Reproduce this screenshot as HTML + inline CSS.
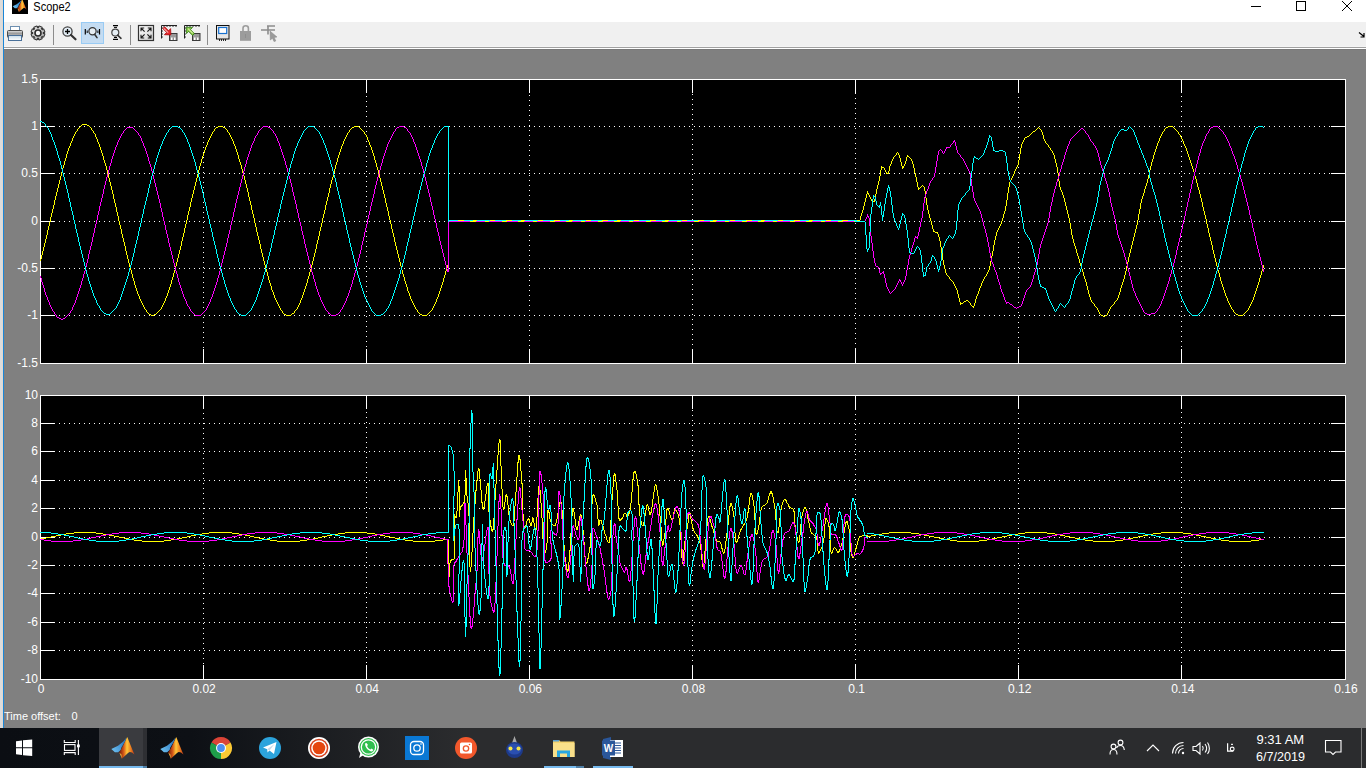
<!DOCTYPE html>
<html><head><meta charset="utf-8"><style>
html,body{margin:0;padding:0;width:1366px;height:768px;overflow:hidden;background:#808080;font-family:"Liberation Sans",sans-serif;}
#root{position:relative;width:1366px;height:768px;overflow:hidden;}
.abs{position:absolute;}
</style></head><body><div id="root">
<svg class="abs" style="left:0;top:0" width="1366" height="768" viewBox="0 0 1366 768">
<rect x="0" y="0" width="1366" height="768" fill="#808080"/>
<rect x="0" y="0" width="3" height="728" fill="#dcdcdc"/>
<rect x="2" y="0" width="1" height="728" fill="#e0d8d0"/>
<rect x="3" y="0" width="1" height="728" fill="#1a86d8"/>
<rect x="4" y="0" width="1362" height="22" fill="#fff"/>
<rect x="4" y="22" width="1362" height="25" fill="#f0f0f0"/>
<rect x="4" y="46" width="1362" height="1" fill="#f5f5f5"/>
<rect x="4" y="47" width="1362" height="1" fill="#a0a0a0"/>
<rect x="4" y="48" width="1362" height="1" fill="#fff"/>
<rect x="4" y="49" width="1362" height="1" fill="#787878"/>
<rect x="12" y="0" width="16" height="14" fill="#000"/>
<g transform="translate(12.5,-0.9) scale(0.6)"><defs><linearGradient id="mlo1" x1="8" y1="0" x2="24" y2="0" gradientUnits="userSpaceOnUse"><stop offset="0" stop-color="#6a1508"/><stop offset="0.3" stop-color="#d85a18"/><stop offset="0.5" stop-color="#ffc83a"/><stop offset="0.7" stop-color="#f08a22"/><stop offset="1" stop-color="#b82a14"/></linearGradient><linearGradient id="mlb1" x1="0" y1="12" x2="14" y2="4" gradientUnits="userSpaceOnUse"><stop offset="0" stop-color="#6ec0f0"/><stop offset="1" stop-color="#2a78c0"/></linearGradient></defs><path d="M0.3 12.1L7 8.7L12.3 4.5L15.5 0.4L14 4.5L10.2 10.8L9.7 12.9L7.1 15.2L3.9 15.3Z" fill="url(#mlb1)"/><path d="M16.2 0.1C18 4 20.5 11 23.5 17.6C21.5 15.5 19.8 14.8 18.6 15C17 15.6 13 20 10.8 21.7C10 19 9 17 8.2 15.5C10.5 12.5 13 7.5 16.2 0.1Z" fill="url(#mlo1)"/><path d="M10.8 21.7C10 19 9 17 8.2 15.5L10.5 17.5Z" fill="#ffd84a" opacity="0.8"/></g>
<path d="M1251 6.5H1261" stroke="#000" stroke-width="1"/>
<rect x="1296.5" y="1.5" width="9" height="9" fill="none" stroke="#000" stroke-width="1"/>
<path d="M1342 1L1352 11M1352 1L1342 11" stroke="#000" stroke-width="1"/>
<text x="33.3" y="10.8" font-size="12" fill="#000" font-family="Liberation Sans" textLength="37.4" lengthAdjust="spacingAndGlyphs">Scope2</text>
<rect x="10.5" y="26.5" width="9" height="4" fill="#fff" stroke="#6d8fb0"/>
<defs><linearGradient id="prg" x1="0" y1="0" x2="0" y2="1"><stop offset="0" stop-color="#e8e8e8"/><stop offset="0.4" stop-color="#9a9a9a"/><stop offset="1" stop-color="#d0d0d0"/></linearGradient><linearGradient id="trg" x1="0" y1="0" x2="0" y2="1"><stop offset="0" stop-color="#c8dcea"/><stop offset="1" stop-color="#ffffff"/></linearGradient></defs>
<rect x="7.5" y="30.5" width="15" height="7" rx="1" fill="url(#prg)" stroke="#4a4a4a"/>
<rect x="8.5" y="35.5" width="13" height="5" fill="url(#trg)" stroke="#4a7099"/>
<defs><linearGradient id="gearg" x1="0" y1="0" x2="1" y2="1"><stop offset="0" stop-color="#f4f4f4"/><stop offset="1" stop-color="#a8a8a8"/></linearGradient></defs>
<polygon points="43.35,32.30 44.90,34.16 43.70,37.06 41.29,37.28 42.28,36.29 42.06,38.70 39.16,39.90 37.30,38.35 38.70,38.35 36.84,39.90 33.94,38.70 33.72,36.29 34.71,37.28 32.30,37.06 31.10,34.16 32.65,32.30 32.65,33.70 31.10,31.84 32.30,28.94 34.71,28.72 33.72,29.71 33.94,27.30 36.84,26.10 38.70,27.65 37.30,27.65 39.16,26.10 42.06,27.30 42.28,29.71 41.29,28.72 43.70,28.94 44.90,31.84 43.35,33.70" fill="url(#gearg)" stroke="#333" stroke-width="1.1" stroke-linejoin="round"/>
<circle cx="38" cy="33" r="3.0" fill="#f8f8f8" stroke="#2a2a2a" stroke-width="1.6"/>
<path d="M53.5 25V45" stroke="#8c8c8c"/>
<path d="M130.5 25V45" stroke="#8c8c8c"/>
<path d="M207.5 25V45" stroke="#8c8c8c"/>
<circle cx="67.5" cy="31.5" r="4.6" fill="#e2ecf4" stroke="#444" stroke-width="1.3"/>
<path d="M65 31.5H70M67.5 29V34" stroke="#000" stroke-width="1.3"/>
<path d="M71 35L75.5 39.3" stroke="#333" stroke-width="2.2" stroke-linecap="round"/>
<rect x="81.5" y="22.5" width="22" height="21" fill="#c4dcf2" stroke="#99cbf4"/>
<circle cx="92.5" cy="31.3" r="3.6" fill="#e6eef4" stroke="#333" stroke-width="1.2"/>
<path d="M94.6 34.3L97 37.6" stroke="#333" stroke-width="1.6" stroke-linecap="round"/>
<path d="M85.3 29V34.5M99.5 29V34.5" stroke="#000" stroke-width="1.2"/>
<path d="M87.2 30.5V33M97.9 30.5V33" stroke="#000" stroke-width="1"/>
<circle cx="115.3" cy="32.6" r="3.5" fill="#e6eef4" stroke="#444" stroke-width="1.2"/>
<path d="M117.6 35.2L121 38.3" stroke="#333" stroke-width="1.6" stroke-linecap="round"/>
<path d="M113 25.6H118M113 39.4H118" stroke="#000" stroke-width="1.2"/>
<path d="M114 27.4H117M114 37.5H117" stroke="#000" stroke-width="1"/>
<defs><linearGradient id="asg" x1="0" y1="0" x2="1" y2="1"><stop offset="0" stop-color="#fff"/><stop offset="1" stop-color="#cfcfcf"/></linearGradient></defs>
<rect x="138.5" y="25.5" width="15" height="15" fill="url(#asg)" stroke="#333" stroke-width="1.2"/>
<path d="M141 28L144.6 31.6M141 31.2V28H144.2 M151 28L147.4 31.6M147.8 28H151V31.2 M141 38L144.6 34.4M141 34.8V38H144.2 M151 38L147.4 34.4M147.8 38H151V34.8" stroke="#1a1a1a" stroke-width="1.1" fill="none"/>
<path d="M161.5 38.5V25.5H177" stroke="#222" fill="none"/>
<path d="M164 25.5V27M167 25.5V27M170 25.5V27M173 25.5V27M176 25.5V27M161.5 28H163M161.5 31H163M161.5 34H163M161.5 37H163" stroke="#222" stroke-width="0.9"/>
<rect x="169.5" y="33.5" width="7.5" height="7" fill="#9a9a9a" stroke="#3a3a3a"/>
<rect x="171" y="37.5" width="4.5" height="2.5" fill="#fff"/>
<path d="M173.2 37.5V40" stroke="#333" stroke-width="0.8"/>
<path d="M162.8 28.6L164.6 26.8L168.6 30.8L170.6 28.6L170.9 34.9L164.4 34.7L166.6 32.4Z" fill="#e8282c" stroke="#a80c10" stroke-width="0.8" stroke-linejoin="round"/>
<path d="M163.8 28.4L168.2 32.6" stroke="#f9b0b0" stroke-width="1.1"/>
<path d="M184.5 38.5V25.5H200" stroke="#222" fill="none"/>
<path d="M187 25.5V27M190 25.5V27M193 25.5V27M196 25.5V27M199 25.5V27M184.5 28H186M184.5 31H186M184.5 34H186M184.5 37H186" stroke="#222" stroke-width="0.9"/>
<rect x="192.5" y="33.5" width="7.5" height="7" fill="#9a9a9a" stroke="#3a3a3a"/>
<rect x="194" y="37.5" width="4.5" height="2.5" fill="#fff"/>
<path d="M196.2 37.5V40" stroke="#333" stroke-width="0.8"/>
<path d="M194.4 33.6L192.6 35.4L188.6 31.4L186.5 33.6L186.2 27.2L192.6 27.4L190.4 29.6Z" fill="#86c544" stroke="#2c7a10" stroke-width="0.8" stroke-linejoin="round"/>
<path d="M188 28.6L192.8 33.4" stroke="#d8f0a0" stroke-width="1.1"/>
<rect x="216.5" y="25.5" width="12.5" height="13.5" fill="#e6e6e6" stroke="#111" stroke-width="1"/>
<rect x="218.7" y="27.5" width="8" height="6" fill="#fff" stroke="#1670d0" stroke-width="1.2"/>
<path d="M219.5 39V41M221.5 39V41M223.5 39V41M225.5 39V41" stroke="#111" stroke-width="0.9"/>
<path d="M243 31.5V28.2C243 25 248.4 25 248.4 28.2V31.5" stroke="#9c9c9c" stroke-width="1.6" fill="none"/>
<rect x="240" y="31" width="11" height="9.8" fill="#9c9c9c"/>
<path d="M245.5 34V38" stroke="#8a8a8a" stroke-width="0.8"/>
<path d="M267 26H275M261 30H275M268 26V34.5" stroke="#8c8c8c" stroke-width="1.6" fill="none"/>
<path d="M270 31L277 37L274.3 37.4L275.8 41L274 41.6L272.5 38.2L270.3 40Z" fill="#9a9a9a" stroke="#888" stroke-width="0.5"/>
<path d="M1359 32.5L1364 36.5M1364 33V37H1360.5" stroke="#000" stroke-width="1.2" fill="none"/>
<rect x="40" y="79" width="1306" height="285" fill="#000"/>
<rect x="40" y="395" width="1306" height="285" fill="#000"/>
<path d="M203.5 82V363M366.5 81V363M529.5 80V363M692.5 84V363M855.5 83V363M1018.5 82V363M1181.5 81V363M44 126.5H1345M44 173.5H1345M44 221.5H1345M44 268.5H1345M44 315.5H1345" stroke="#fff" stroke-dasharray="1 4" fill="none"/>
<path d="M203.5 79V93M203.5 349V363M366.5 79V93M366.5 349V363M529.5 79V93M529.5 349V363M692.5 79V93M692.5 349V363M855.5 79V94M855.5 349V363M1018.5 79V93M1018.5 349V363M1181.5 79V93M1181.5 349V363M40 126.5H55M1331 126.5H1345M40 173.5H55M1331 173.5H1345M40 221.5H55M1331 221.5H1345M40 268.5H55M1331 268.5H1345M40 315.5H55M1331 315.5H1345" stroke="#fff" fill="none"/>
<rect x="40.5" y="79.5" width="1305" height="284" stroke="#fff" fill="none"/>
<path d="M203.5 398V679M366.5 397V679M529.5 396V679M692.5 400V679M855.5 399V679M1018.5 398V679M1181.5 397V679M44 423.5H1345M44 451.5H1345M44 480.5H1345M44 508.5H1345M44 537.5H1345M44 565.5H1345M44 593.5H1345M44 622.5H1345M44 650.5H1345" stroke="#fff" stroke-dasharray="1 4" fill="none"/>
<path d="M203.5 395V409M203.5 665V679M366.5 395V409M366.5 665V679M529.5 395V409M529.5 665V679M692.5 395V409M692.5 665V679M855.5 395V410M855.5 665V679M1018.5 395V409M1018.5 665V679M1181.5 395V409M1181.5 665V679M40 423.5H55M1331 423.5H1345M40 451.5H55M1331 451.5H1345M40 480.5H55M1331 480.5H1345M40 508.5H55M1331 508.5H1345M40 537.5H55M1331 537.5H1345M40 565.5H55M1331 565.5H1345M40 593.5H55M1331 593.5H1345M40 622.5H55M1331 622.5H1345M40 650.5H55M1331 650.5H1345" stroke="#fff" fill="none"/>
<rect x="40.5" y="395.5" width="1305" height="284" stroke="#fff" fill="none"/>
<path d="M448 220.5H860" stroke="#00ffff" shape-rendering="crispEdges"/>
<path d="M448 221.5H860" stroke="#ff00ff" shape-rendering="crispEdges"/>
<path d="M458 220.5H860M470 221.5H860" stroke="#ffff00" stroke-dasharray="6 9 4 13 5 11" shape-rendering="crispEdges"/>
<path d="M40 259h1v2h-1zM40 539h1v1h-1zM41 255h1v4h-1zM41 538h1v1h-1zM42 251h1v4h-1zM42 538h1v1h-1zM43 247h1v4h-1zM43 538h1v1h-1zM44 243h1v4h-1zM44 538h1v1h-1zM45 239h1v4h-1zM45 538h1v1h-1zM46 235h1v4h-1zM46 537h1v1h-1zM47 230h1v5h-1zM47 537h1v1h-1zM48 226h1v4h-1zM48 537h1v1h-1zM49 222h1v4h-1zM49 537h1v1h-1zM50 217h1v5h-1zM50 537h1v1h-1zM51 213h1v4h-1zM51 536h1v1h-1zM52 209h1v4h-1zM52 536h1v1h-1zM53 205h1v4h-1zM53 536h1v1h-1zM54 200h1v5h-1zM54 536h1v1h-1zM55 196h1v4h-1zM55 536h1v1h-1zM56 192h1v4h-1zM56 535h1v1h-1zM57 188h1v4h-1zM57 535h1v1h-1zM58 184h1v4h-1zM58 535h1v1h-1zM59 180h1v4h-1zM59 535h1v1h-1zM60 176h1v4h-1zM60 535h1v1h-1zM61 172h1v4h-1zM61 534h1v1h-1zM62 168h1v4h-1zM62 534h1v1h-1zM63 165h1v3h-1zM63 534h1v1h-1zM64 161h1v4h-1zM64 534h1v1h-1zM65 158h1v3h-1zM65 534h1v1h-1zM66 154h1v4h-1zM66 533h1v1h-1zM67 151h1v3h-1zM67 533h1v1h-1zM68 148h1v3h-1zM68 533h1v1h-1zM69 146h1v2h-1zM69 533h1v1h-1zM70 143h1v3h-1zM70 533h1v1h-1zM71 141h1v2h-1zM71 533h1v1h-1zM72 138h1v3h-1zM72 533h1v1h-1zM73 136h1v2h-1zM73 533h1v1h-1zM74 134h1v2h-1zM74 532h1v1h-1zM75 132h1v2h-1zM75 532h1v1h-1zM76 131h1v1h-1zM76 532h1v1h-1zM77 129h1v2h-1zM77 532h1v1h-1zM78 128h1v1h-1zM78 532h1v1h-1zM79 127h1v1h-1zM79 532h1v1h-1zM80 126h1v1h-1zM80 532h1v1h-1zM81 125h1v1h-1zM81 532h1v1h-1zM82 124h1v1h-1zM82 532h1v1h-1zM83 124h1v1h-1zM83 532h1v1h-1zM84 124h1v1h-1zM84 532h1v1h-1zM85 124h1v1h-1zM85 532h1v1h-1zM86 124h1v1h-1zM86 532h1v1h-1zM87 125h1v1h-1zM87 532h1v1h-1zM88 125h1v1h-1zM88 532h1v1h-1zM89 126h1v1h-1zM89 532h1v1h-1zM90 127h1v1h-1zM90 532h1v1h-1zM91 128h1v2h-1zM91 532h1v1h-1zM92 130h1v1h-1zM92 532h1v1h-1zM93 131h1v2h-1zM93 532h1v1h-1zM94 133h1v1h-1zM94 532h1v1h-1zM95 134h1v3h-1zM95 532h1v1h-1zM96 137h1v2h-1zM96 533h1v1h-1zM97 139h1v3h-1zM97 533h1v1h-1zM98 142h1v2h-1zM98 533h1v1h-1zM99 144h1v3h-1zM99 533h1v1h-1zM100 147h1v3h-1zM100 533h1v1h-1zM101 150h1v3h-1zM101 533h1v1h-1zM102 153h1v3h-1zM102 533h1v1h-1zM103 156h1v4h-1zM103 534h1v1h-1zM104 160h1v3h-1zM104 534h1v1h-1zM105 163h1v3h-1zM105 534h1v1h-1zM106 166h1v4h-1zM106 534h1v1h-1zM107 170h1v4h-1zM107 534h1v1h-1zM108 174h1v4h-1zM108 534h1v1h-1zM109 178h1v4h-1zM109 535h1v1h-1zM110 182h1v4h-1zM110 535h1v1h-1zM111 186h1v4h-1zM111 535h1v1h-1zM112 190h1v4h-1zM112 535h1v1h-1zM113 194h1v5h-1zM113 535h1v1h-1zM114 199h1v4h-1zM114 536h1v1h-1zM115 203h1v4h-1zM115 536h1v1h-1zM116 207h1v5h-1zM116 536h1v1h-1zM117 212h1v4h-1zM117 536h1v1h-1zM118 216h1v5h-1zM118 536h1v1h-1zM119 221h1v4h-1zM119 537h1v1h-1zM120 225h1v4h-1zM120 537h1v1h-1zM121 229h1v5h-1zM121 537h1v1h-1zM122 234h1v4h-1zM122 537h1v1h-1zM123 238h1v4h-1zM123 537h1v1h-1zM124 242h1v4h-1zM124 538h1v1h-1zM125 246h1v5h-1zM125 538h1v1h-1zM126 251h1v4h-1zM126 538h1v1h-1zM127 255h1v4h-1zM127 538h1v1h-1zM128 259h1v4h-1zM128 538h1v1h-1zM129 263h1v4h-1zM129 539h1v1h-1zM130 267h1v3h-1zM130 539h1v1h-1zM131 270h1v4h-1zM131 539h1v1h-1zM132 274h1v4h-1zM132 539h1v1h-1zM133 278h1v3h-1zM133 539h1v1h-1zM134 281h1v4h-1zM134 540h1v1h-1zM135 285h1v3h-1zM135 540h1v1h-1zM136 288h1v3h-1zM136 540h1v1h-1zM137 291h1v3h-1zM137 540h1v1h-1zM138 294h1v2h-1zM138 540h1v1h-1zM139 296h1v3h-1zM139 540h1v1h-1zM140 299h1v2h-1zM140 540h1v1h-1zM141 301h1v2h-1zM141 540h1v1h-1zM142 303h1v2h-1zM142 541h1v1h-1zM143 305h1v2h-1zM143 541h1v1h-1zM144 307h1v2h-1zM144 541h1v1h-1zM145 309h1v1h-1zM145 541h1v1h-1zM146 310h1v2h-1zM146 541h1v1h-1zM147 312h1v1h-1zM147 541h1v1h-1zM148 313h1v1h-1zM148 541h1v1h-1zM149 314h1v1h-1zM149 541h1v1h-1zM150 314h1v1h-1zM150 541h1v1h-1zM151 315h1v1h-1zM151 541h1v1h-1zM152 315h1v1h-1zM152 541h1v1h-1zM153 315h1v1h-1zM153 541h1v1h-1zM154 314h1v1h-1zM154 541h1v1h-1zM155 314h1v1h-1zM155 541h1v1h-1zM156 313h1v1h-1zM156 541h1v1h-1zM157 312h1v1h-1zM157 541h1v1h-1zM158 311h1v1h-1zM158 541h1v1h-1zM159 310h1v1h-1zM159 541h1v1h-1zM160 309h1v1h-1zM160 541h1v1h-1zM161 307h1v2h-1zM161 541h1v1h-1zM162 305h1v2h-1zM162 541h1v1h-1zM163 303h1v2h-1zM163 541h1v1h-1zM164 301h1v2h-1zM164 540h1v1h-1zM165 298h1v3h-1zM165 540h1v1h-1zM166 296h1v2h-1zM166 540h1v1h-1zM167 293h1v3h-1zM167 540h1v1h-1zM168 290h1v3h-1zM168 540h1v1h-1zM169 287h1v3h-1zM169 540h1v1h-1zM170 284h1v3h-1zM170 540h1v1h-1zM171 280h1v4h-1zM171 539h1v1h-1zM172 277h1v3h-1zM172 539h1v1h-1zM173 273h1v4h-1zM173 539h1v1h-1zM174 270h1v3h-1zM174 539h1v1h-1zM175 266h1v4h-1zM175 539h1v1h-1zM176 262h1v4h-1zM176 539h1v1h-1zM177 258h1v4h-1zM177 538h1v1h-1zM178 254h1v4h-1zM178 538h1v1h-1zM179 250h1v4h-1zM179 538h1v1h-1zM180 246h1v4h-1zM180 538h1v1h-1zM181 241h1v5h-1zM181 538h1v1h-1zM182 237h1v4h-1zM182 537h1v1h-1zM183 233h1v4h-1zM183 537h1v1h-1zM184 228h1v5h-1zM184 537h1v1h-1zM185 224h1v4h-1zM185 537h1v1h-1zM186 220h1v4h-1zM186 537h1v1h-1zM187 215h1v5h-1zM187 536h1v1h-1zM188 211h1v4h-1zM188 536h1v1h-1zM189 207h1v4h-1zM189 536h1v1h-1zM190 202h1v5h-1zM190 536h1v1h-1zM191 198h1v4h-1zM191 535h1v1h-1zM192 194h1v4h-1zM192 535h1v1h-1zM193 190h1v4h-1zM193 535h1v1h-1zM194 186h1v4h-1zM194 535h1v1h-1zM195 182h1v4h-1zM195 535h1v1h-1zM196 178h1v4h-1zM196 534h1v1h-1zM197 174h1v4h-1zM197 534h1v1h-1zM198 170h1v4h-1zM198 534h1v1h-1zM199 166h1v4h-1zM199 534h1v1h-1zM200 163h1v3h-1zM200 534h1v1h-1zM201 159h1v4h-1zM201 534h1v1h-1zM202 156h1v3h-1zM202 533h1v1h-1zM203 153h1v3h-1zM203 533h1v1h-1zM204 150h1v3h-1zM204 533h1v1h-1zM205 147h1v3h-1zM205 533h1v1h-1zM206 145h1v2h-1zM206 533h1v1h-1zM207 142h1v3h-1zM207 533h1v1h-1zM208 140h1v2h-1zM208 533h1v1h-1zM209 138h1v2h-1zM209 532h1v1h-1zM210 136h1v2h-1zM210 532h1v1h-1zM211 134h1v2h-1zM211 532h1v1h-1zM212 132h1v2h-1zM212 532h1v1h-1zM213 131h1v1h-1zM213 532h1v1h-1zM214 129h1v2h-1zM214 532h1v1h-1zM215 128h1v1h-1zM215 532h1v1h-1zM216 127h1v1h-1zM216 532h1v1h-1zM217 127h1v1h-1zM217 532h1v1h-1zM218 126h1v1h-1zM218 532h1v1h-1zM219 126h1v1h-1zM219 532h1v1h-1zM220 126h1v1h-1zM220 532h1v1h-1zM221 126h1v1h-1zM221 532h1v1h-1zM222 126h1v1h-1zM222 532h1v1h-1zM223 127h1v1h-1zM223 532h1v1h-1zM224 127h1v1h-1zM224 532h1v1h-1zM225 128h1v1h-1zM225 532h1v1h-1zM226 129h1v1h-1zM226 532h1v1h-1zM227 130h1v2h-1zM227 532h1v1h-1zM228 132h1v1h-1zM228 532h1v1h-1zM229 133h1v2h-1zM229 532h1v1h-1zM230 135h1v2h-1zM230 532h1v1h-1zM231 137h1v2h-1zM231 532h1v1h-1zM232 139h1v2h-1zM232 533h1v1h-1zM233 141h1v3h-1zM233 533h1v1h-1zM234 144h1v2h-1zM234 533h1v1h-1zM235 146h1v3h-1zM235 533h1v1h-1zM236 149h1v3h-1zM236 533h1v1h-1zM237 152h1v3h-1zM237 533h1v1h-1zM238 155h1v4h-1zM238 533h1v1h-1zM239 159h1v3h-1zM239 534h1v1h-1zM240 162h1v3h-1zM240 534h1v1h-1zM241 165h1v4h-1zM241 534h1v1h-1zM242 169h1v4h-1zM242 534h1v1h-1zM243 173h1v3h-1zM243 534h1v1h-1zM244 176h1v4h-1zM244 534h1v1h-1zM245 180h1v4h-1zM245 535h1v1h-1zM246 184h1v4h-1zM246 535h1v1h-1zM247 188h1v4h-1zM247 535h1v1h-1zM248 192h1v5h-1zM248 535h1v1h-1zM249 197h1v4h-1zM249 535h1v1h-1zM250 201h1v4h-1zM250 536h1v1h-1zM251 205h1v5h-1zM251 536h1v1h-1zM252 210h1v4h-1zM252 536h1v1h-1zM253 214h1v4h-1zM253 536h1v1h-1zM254 218h1v5h-1zM254 537h1v1h-1zM255 223h1v4h-1zM255 537h1v1h-1zM256 227h1v5h-1zM256 537h1v1h-1zM257 232h1v4h-1zM257 537h1v1h-1zM258 236h1v4h-1zM258 537h1v1h-1zM259 240h1v4h-1zM259 538h1v1h-1zM260 244h1v5h-1zM260 538h1v1h-1zM261 249h1v4h-1zM261 538h1v1h-1zM262 253h1v4h-1zM262 538h1v1h-1zM263 257h1v4h-1zM263 538h1v1h-1zM264 261h1v4h-1zM264 539h1v1h-1zM265 265h1v4h-1zM265 539h1v1h-1zM266 269h1v3h-1zM266 539h1v1h-1zM267 272h1v4h-1zM267 539h1v1h-1zM268 276h1v4h-1zM268 539h1v1h-1zM269 280h1v3h-1zM269 539h1v1h-1zM270 283h1v3h-1zM270 540h1v1h-1zM271 286h1v4h-1zM271 540h1v1h-1zM272 290h1v2h-1zM272 540h1v1h-1zM273 292h1v3h-1zM273 540h1v1h-1zM274 295h1v3h-1zM274 540h1v1h-1zM275 298h1v2h-1zM275 540h1v1h-1zM276 300h1v2h-1zM276 540h1v1h-1zM277 302h1v2h-1zM277 541h1v1h-1zM278 304h1v2h-1zM278 541h1v1h-1zM279 306h1v2h-1zM279 541h1v1h-1zM280 308h1v2h-1zM280 541h1v1h-1zM281 310h1v1h-1zM281 541h1v1h-1zM282 311h1v2h-1zM282 541h1v1h-1zM283 313h1v1h-1zM283 541h1v1h-1zM284 314h1v1h-1zM284 541h1v1h-1zM285 314h1v1h-1zM285 541h1v1h-1zM286 315h1v1h-1zM286 541h1v1h-1zM287 315h1v1h-1zM287 541h1v1h-1zM288 315h1v1h-1zM288 541h1v1h-1zM289 315h1v1h-1zM289 541h1v1h-1zM290 315h1v1h-1zM290 541h1v1h-1zM291 314h1v1h-1zM291 541h1v1h-1zM292 313h1v1h-1zM292 541h1v1h-1zM293 313h1v1h-1zM293 541h1v1h-1zM294 311h1v2h-1zM294 541h1v1h-1zM295 310h1v1h-1zM295 541h1v1h-1zM296 309h1v1h-1zM296 541h1v1h-1zM297 307h1v2h-1zM297 541h1v1h-1zM298 305h1v2h-1zM298 541h1v1h-1zM299 303h1v2h-1zM299 541h1v1h-1zM300 300h1v3h-1zM300 540h1v1h-1zM301 298h1v2h-1zM301 540h1v1h-1zM302 295h1v3h-1zM302 540h1v1h-1zM303 292h1v3h-1zM303 540h1v1h-1zM304 289h1v3h-1zM304 540h1v1h-1zM305 286h1v3h-1zM305 540h1v1h-1zM306 283h1v3h-1zM306 540h1v1h-1zM307 279h1v4h-1zM307 539h1v1h-1zM308 276h1v3h-1zM308 539h1v1h-1zM309 272h1v4h-1zM309 539h1v1h-1zM310 269h1v3h-1zM310 539h1v1h-1zM311 265h1v4h-1zM311 539h1v1h-1zM312 261h1v4h-1zM312 539h1v1h-1zM313 257h1v4h-1zM313 538h1v1h-1zM314 253h1v4h-1zM314 538h1v1h-1zM315 249h1v4h-1zM315 538h1v1h-1zM316 244h1v5h-1zM316 538h1v1h-1zM317 240h1v4h-1zM317 538h1v1h-1zM318 236h1v4h-1zM318 537h1v1h-1zM319 231h1v5h-1zM319 537h1v1h-1zM320 227h1v4h-1zM320 537h1v1h-1zM321 223h1v4h-1zM321 537h1v1h-1zM322 218h1v5h-1zM322 536h1v1h-1zM323 214h1v4h-1zM323 536h1v1h-1zM324 210h1v4h-1zM324 536h1v1h-1zM325 205h1v5h-1zM325 536h1v1h-1zM326 201h1v4h-1zM326 536h1v1h-1zM327 197h1v4h-1zM327 535h1v1h-1zM328 193h1v4h-1zM328 535h1v1h-1zM329 188h1v5h-1zM329 535h1v1h-1zM330 184h1v4h-1zM330 535h1v1h-1zM331 180h1v4h-1zM331 535h1v1h-1zM332 177h1v3h-1zM332 534h1v1h-1zM333 173h1v4h-1zM333 534h1v1h-1zM334 169h1v4h-1zM334 534h1v1h-1zM335 165h1v4h-1zM335 534h1v1h-1zM336 162h1v3h-1zM336 534h1v1h-1zM337 158h1v4h-1zM337 534h1v1h-1zM338 155h1v3h-1zM338 533h1v1h-1zM339 152h1v3h-1zM339 533h1v1h-1zM340 149h1v3h-1zM340 533h1v1h-1zM341 146h1v3h-1zM341 533h1v1h-1zM342 144h1v2h-1zM342 533h1v1h-1zM343 141h1v3h-1zM343 533h1v1h-1zM344 139h1v2h-1zM344 533h1v1h-1zM345 137h1v2h-1zM345 532h1v1h-1zM346 135h1v2h-1zM346 532h1v1h-1zM347 133h1v2h-1zM347 532h1v1h-1zM348 132h1v1h-1zM348 532h1v1h-1zM349 130h1v2h-1zM349 532h1v1h-1zM350 129h1v1h-1zM350 532h1v1h-1zM351 128h1v1h-1zM351 532h1v1h-1zM352 127h1v1h-1zM352 532h1v1h-1zM353 127h1v1h-1zM353 532h1v1h-1zM354 126h1v1h-1zM354 532h1v1h-1zM355 126h1v1h-1zM355 532h1v1h-1zM356 126h1v1h-1zM356 532h1v1h-1zM357 126h1v1h-1zM357 532h1v1h-1zM358 126h1v1h-1zM358 532h1v1h-1zM359 127h1v1h-1zM359 532h1v1h-1zM360 128h1v1h-1zM360 532h1v1h-1zM361 129h1v1h-1zM361 532h1v1h-1zM362 130h1v1h-1zM362 532h1v1h-1zM363 131h1v1h-1zM363 532h1v1h-1zM364 132h1v2h-1zM364 532h1v1h-1zM365 134h1v1h-1zM365 532h1v1h-1zM366 135h1v2h-1zM366 532h1v1h-1zM367 137h1v3h-1zM367 533h1v1h-1zM368 140h1v2h-1zM368 533h1v1h-1zM369 142h1v3h-1zM369 533h1v1h-1zM370 145h1v2h-1zM370 533h1v1h-1zM371 147h1v3h-1zM371 533h1v1h-1zM372 150h1v3h-1zM372 533h1v1h-1zM373 153h1v3h-1zM373 533h1v1h-1zM374 156h1v4h-1zM374 533h1v1h-1zM375 160h1v3h-1zM375 534h1v1h-1zM376 163h1v4h-1zM376 534h1v1h-1zM377 167h1v3h-1zM377 534h1v1h-1zM378 170h1v4h-1zM378 534h1v1h-1zM379 174h1v4h-1zM379 534h1v1h-1zM380 178h1v4h-1zM380 535h1v1h-1zM381 182h1v4h-1zM381 535h1v1h-1zM382 186h1v4h-1zM382 535h1v1h-1zM383 190h1v4h-1zM383 535h1v1h-1zM384 194h1v4h-1zM384 535h1v1h-1zM385 198h1v5h-1zM385 536h1v1h-1zM386 203h1v4h-1zM386 536h1v1h-1zM387 207h1v4h-1zM387 536h1v1h-1zM388 211h1v5h-1zM388 536h1v1h-1zM389 216h1v4h-1zM389 536h1v1h-1zM390 220h1v4h-1zM390 537h1v1h-1zM391 224h1v5h-1zM391 537h1v1h-1zM392 229h1v4h-1zM392 537h1v1h-1zM393 233h1v4h-1zM393 537h1v1h-1zM394 237h1v5h-1zM394 537h1v1h-1zM395 242h1v4h-1zM395 538h1v1h-1zM396 246h1v4h-1zM396 538h1v1h-1zM397 250h1v4h-1zM397 538h1v1h-1zM398 254h1v4h-1zM398 538h1v1h-1zM399 258h1v4h-1zM399 538h1v1h-1zM400 262h1v4h-1zM400 539h1v1h-1zM401 266h1v4h-1zM401 539h1v1h-1zM402 270h1v4h-1zM402 539h1v1h-1zM403 274h1v3h-1zM403 539h1v1h-1zM404 277h1v4h-1zM404 539h1v1h-1zM405 281h1v3h-1zM405 540h1v1h-1zM406 284h1v3h-1zM406 540h1v1h-1zM407 287h1v4h-1zM407 540h1v1h-1zM408 291h1v2h-1zM408 540h1v1h-1zM409 293h1v3h-1zM409 540h1v1h-1zM410 296h1v3h-1zM410 540h1v1h-1zM411 299h1v2h-1zM411 540h1v1h-1zM412 301h1v2h-1zM412 540h1v1h-1zM413 303h1v2h-1zM413 541h1v1h-1zM414 305h1v2h-1zM414 541h1v1h-1zM415 307h1v2h-1zM415 541h1v1h-1zM416 309h1v1h-1zM416 541h1v1h-1zM417 310h1v2h-1zM417 541h1v1h-1zM418 312h1v1h-1zM418 541h1v1h-1zM419 313h1v1h-1zM419 541h1v1h-1zM420 314h1v1h-1zM420 541h1v1h-1zM421 314h1v1h-1zM421 541h1v1h-1zM422 315h1v1h-1zM422 541h1v1h-1zM423 315h1v1h-1zM423 541h1v1h-1zM424 315h1v1h-1zM424 541h1v1h-1zM425 315h1v1h-1zM425 541h1v1h-1zM426 315h1v1h-1zM426 541h1v1h-1zM427 314h1v1h-1zM427 541h1v1h-1zM428 313h1v1h-1zM428 541h1v1h-1zM429 312h1v1h-1zM429 541h1v1h-1zM430 311h1v1h-1zM430 541h1v1h-1zM431 310h1v1h-1zM431 541h1v1h-1zM432 308h1v2h-1zM432 541h1v1h-1zM433 306h1v2h-1zM433 541h1v1h-1zM434 304h1v2h-1zM434 541h1v1h-1zM435 302h1v2h-1zM435 540h1v1h-1zM436 299h1v3h-1zM436 540h1v1h-1zM437 297h1v2h-1zM437 540h1v1h-1zM438 294h1v3h-1zM438 540h1v1h-1zM439 291h1v3h-1zM439 540h1v1h-1zM440 288h1v3h-1zM440 540h1v1h-1zM441 285h1v3h-1zM441 540h1v1h-1zM442 282h1v3h-1zM442 540h1v1h-1zM443 278h1v4h-1zM443 539h1v1h-1zM444 275h1v3h-1zM444 539h1v1h-1zM445 271h1v4h-1zM445 539h1v1h-1zM446 268h1v3h-1zM446 539h1v1h-1zM447 265h1v3h-1zM447 539h1v1h-1zM448 221h1v45h-1zM448 539h1v38h-1zM449 563h1v14h-1zM450 560h1v3h-1zM451 559h1v2h-1zM452 559h1v1h-1zM453 559h1v1h-1zM454 514h1v45h-1zM455 516h1v2h-1zM456 511h1v7h-1zM457 492h1v19h-1zM458 480h1v12h-1zM459 486h1v31h-1zM460 506h1v4h-1zM461 505h1v2h-1zM462 504h1v2h-1zM463 502h1v2h-1zM464 495h1v8h-1zM465 470h1v25h-1zM466 478h1v18h-1zM467 496h1v7h-1zM468 503h1v13h-1zM469 515h1v52h-1zM470 567h1v5h-1zM471 552h1v15h-1zM472 533h1v19h-1zM473 517h1v16h-1zM474 503h1v15h-1zM475 490h1v14h-1zM476 480h1v11h-1zM477 471h1v10h-1zM478 468h1v3h-1zM479 469h1v10h-1zM480 479h1v11h-1zM481 490h1v13h-1zM482 502h1v7h-1zM483 507h1v3h-1zM484 501h1v7h-1zM485 494h1v7h-1zM486 486h1v8h-1zM487 483h1v3h-1zM488 483h1v29h-1zM489 512h1v9h-1zM490 520h1v7h-1zM491 526h1v5h-1zM492 529h1v3h-1zM493 518h1v12h-1zM494 500h1v19h-1zM495 484h1v16h-1zM496 470h1v14h-1zM497 455h1v15h-1zM498 443h1v12h-1zM499 439h1v4h-1zM500 440h1v26h-1zM501 466h1v23h-1zM502 489h1v18h-1zM503 507h1v3h-1zM504 502h1v7h-1zM505 495h1v7h-1zM506 494h1v3h-1zM507 496h1v9h-1zM508 505h1v10h-1zM509 514h1v6h-1zM510 520h1v3h-1zM511 523h1v2h-1zM512 525h1v1h-1zM513 521h1v5h-1zM514 506h1v15h-1zM515 492h1v14h-1zM516 477h1v15h-1zM517 462h1v15h-1zM518 455h1v8h-1zM519 455h1v5h-1zM520 459h1v12h-1zM521 471h1v13h-1zM522 483h1v31h-1zM523 514h1v13h-1zM524 526h1v2h-1zM525 525h1v3h-1zM526 521h1v4h-1zM527 519h1v2h-1zM528 518h1v2h-1zM529 519h1v4h-1zM530 523h1v3h-1zM531 522h1v4h-1zM532 517h1v5h-1zM533 518h1v5h-1zM534 523h1v7h-1zM535 529h1v3h-1zM536 517h1v13h-1zM537 498h1v19h-1zM538 486h1v12h-1zM539 485h1v5h-1zM540 490h1v13h-1zM541 503h1v15h-1zM542 518h1v21h-1zM543 539h1v14h-1zM544 552h1v2h-1zM545 550h1v3h-1zM546 543h1v7h-1zM547 510h1v33h-1zM548 509h1v4h-1zM549 512h1v7h-1zM550 519h1v3h-1zM551 522h1v2h-1zM552 524h1v1h-1zM553 525h1v1h-1zM554 525h1v1h-1zM555 523h1v3h-1zM556 519h1v4h-1zM557 513h1v6h-1zM558 507h1v6h-1zM559 502h1v5h-1zM560 502h1v1h-1zM561 502h1v9h-1zM562 510h1v15h-1zM563 525h1v20h-1zM564 545h1v12h-1zM565 557h1v7h-1zM566 564h1v6h-1zM567 569h1v3h-1zM568 562h1v9h-1zM569 550h1v12h-1zM570 533h1v18h-1zM571 516h1v17h-1zM572 508h1v8h-1zM573 508h1v4h-1zM574 512h1v7h-1zM575 519h1v8h-1zM576 527h1v3h-1zM577 526h1v4h-1zM578 521h1v5h-1zM579 516h1v5h-1zM580 514h1v2h-1zM581 515h1v6h-1zM582 521h1v9h-1zM583 530h1v12h-1zM584 542h1v15h-1zM585 557h1v6h-1zM586 562h1v2h-1zM587 558h1v5h-1zM588 553h1v6h-1zM589 547h1v6h-1zM590 533h1v15h-1zM591 503h1v30h-1zM592 495h1v9h-1zM593 494h1v2h-1zM594 495h1v3h-1zM595 498h1v4h-1zM596 502h1v3h-1zM597 505h1v14h-1zM598 519h1v7h-1zM599 520h1v5h-1zM600 520h1v1h-1zM601 520h1v4h-1zM602 524h1v2h-1zM603 526h1v4h-1zM604 530h1v4h-1zM605 534h1v2h-1zM606 536h1v4h-1zM607 540h1v2h-1zM608 542h1v1h-1zM609 537h1v6h-1zM610 520h1v18h-1zM611 500h1v20h-1zM612 487h1v13h-1zM613 475h1v12h-1zM614 473h1v3h-1zM615 474h1v8h-1zM616 482h1v8h-1zM617 490h1v16h-1zM618 506h1v13h-1zM619 518h1v3h-1zM620 519h1v2h-1zM621 518h1v2h-1zM622 517h1v2h-1zM623 514h1v3h-1zM624 513h1v1h-1zM625 513h1v1h-1zM626 514h1v3h-1zM627 516h1v1h-1zM628 513h1v3h-1zM629 510h1v4h-1zM630 503h1v7h-1zM631 492h1v11h-1zM632 479h1v13h-1zM633 472h1v8h-1zM634 471h1v2h-1zM635 471h1v3h-1zM636 474h1v5h-1zM637 479h1v7h-1zM638 485h1v20h-1zM639 504h1v12h-1zM640 516h1v5h-1zM641 521h1v4h-1zM642 525h1v1h-1zM643 522h1v4h-1zM644 516h1v7h-1zM645 510h1v6h-1zM646 505h1v5h-1zM647 504h1v2h-1zM648 506h1v5h-1zM649 511h1v4h-1zM650 512h1v3h-1zM651 507h1v6h-1zM652 499h1v8h-1zM653 492h1v7h-1zM654 486h1v6h-1zM655 484h1v2h-1zM656 485h1v5h-1zM657 490h1v6h-1zM658 496h1v8h-1zM659 504h1v12h-1zM660 516h1v11h-1zM661 527h1v14h-1zM662 541h1v5h-1zM663 539h1v6h-1zM664 533h1v6h-1zM665 519h1v14h-1zM666 509h1v10h-1zM667 508h1v2h-1zM668 508h1v3h-1zM669 511h1v4h-1zM670 515h1v3h-1zM671 518h1v2h-1zM672 519h1v2h-1zM673 512h1v7h-1zM674 509h1v3h-1zM675 509h1v2h-1zM676 510h1v2h-1zM677 512h1v2h-1zM678 514h1v4h-1zM679 518h1v7h-1zM680 525h1v15h-1zM681 540h1v18h-1zM682 558h1v6h-1zM683 550h1v11h-1zM684 541h1v9h-1zM685 535h1v6h-1zM686 529h1v6h-1zM687 523h1v6h-1zM688 514h1v9h-1zM689 513h1v2h-1zM690 513h1v6h-1zM691 519h1v5h-1zM692 524h1v5h-1zM693 528h1v3h-1zM694 531h1v2h-1zM695 533h1v1h-1zM696 534h1v2h-1zM697 535h1v3h-1zM698 537h1v3h-1zM699 539h1v4h-1zM700 543h1v7h-1zM701 550h1v10h-1zM702 560h1v7h-1zM703 563h1v5h-1zM704 551h1v12h-1zM705 539h1v12h-1zM706 526h1v13h-1zM707 518h1v8h-1zM708 516h1v2h-1zM709 516h1v4h-1zM710 519h1v4h-1zM711 523h1v4h-1zM712 526h1v3h-1zM713 529h1v4h-1zM714 532h1v4h-1zM715 536h1v3h-1zM716 539h1v2h-1zM717 541h1v1h-1zM718 541h1v1h-1zM719 541h1v1h-1zM720 542h1v2h-1zM721 544h1v5h-1zM722 548h1v4h-1zM723 552h1v2h-1zM724 549h1v4h-1zM725 541h1v8h-1zM726 533h1v8h-1zM727 525h1v8h-1zM728 515h1v10h-1zM729 506h1v9h-1zM730 503h1v4h-1zM731 503h1v3h-1zM732 506h1v5h-1zM733 511h1v6h-1zM734 517h1v16h-1zM735 533h1v9h-1zM736 541h1v2h-1zM737 539h1v3h-1zM738 535h1v4h-1zM739 532h1v3h-1zM740 529h1v3h-1zM741 528h1v2h-1zM742 526h1v2h-1zM743 524h1v2h-1zM744 523h1v2h-1zM745 521h1v2h-1zM746 518h1v3h-1zM747 512h1v6h-1zM748 505h1v8h-1zM749 497h1v8h-1zM750 493h1v4h-1zM751 493h1v2h-1zM752 495h1v5h-1zM753 500h1v6h-1zM754 506h1v14h-1zM755 520h1v14h-1zM756 533h1v2h-1zM757 530h1v4h-1zM758 525h1v5h-1zM759 517h1v8h-1zM760 510h1v8h-1zM761 507h1v3h-1zM762 506h1v1h-1zM763 505h1v1h-1zM764 505h1v1h-1zM765 504h1v1h-1zM766 503h1v1h-1zM767 500h1v3h-1zM768 496h1v4h-1zM769 493h1v3h-1zM770 491h1v3h-1zM771 491h1v3h-1zM772 493h1v4h-1zM773 497h1v6h-1zM774 503h1v6h-1zM775 509h1v11h-1zM776 520h1v11h-1zM777 531h1v2h-1zM778 527h1v6h-1zM779 518h1v9h-1zM780 510h1v8h-1zM781 505h1v5h-1zM782 502h1v3h-1zM783 500h1v2h-1zM784 499h1v1h-1zM785 499h1v2h-1zM786 500h1v3h-1zM787 503h1v1h-1zM788 504h1v3h-1zM789 506h1v2h-1zM790 507h1v1h-1zM791 508h1v1h-1zM792 508h1v1h-1zM793 509h1v3h-1zM794 511h1v14h-1zM795 525h1v7h-1zM796 532h1v5h-1zM797 537h1v4h-1zM798 541h1v2h-1zM799 535h1v7h-1zM800 524h1v11h-1zM801 516h1v8h-1zM802 512h1v4h-1zM803 509h1v3h-1zM804 507h1v2h-1zM805 507h1v2h-1zM806 509h1v4h-1zM807 513h1v6h-1zM808 518h1v5h-1zM809 523h1v5h-1zM810 528h1v4h-1zM811 532h1v2h-1zM812 533h1v1h-1zM813 534h1v1h-1zM814 535h1v1h-1zM815 535h1v1h-1zM816 536h1v4h-1zM817 540h1v11h-1zM818 551h1v3h-1zM819 551h1v2h-1zM820 549h1v2h-1zM821 547h1v2h-1zM822 543h1v4h-1zM823 538h1v5h-1zM824 524h1v14h-1zM825 518h1v6h-1zM826 518h1v2h-1zM827 520h1v2h-1zM828 522h1v5h-1zM829 526h1v13h-1zM830 539h1v13h-1zM831 552h1v2h-1zM832 550h1v3h-1zM833 548h1v2h-1zM834 547h1v1h-1zM835 548h1v1h-1zM836 549h1v2h-1zM837 551h1v2h-1zM838 551h1v2h-1zM839 549h1v3h-1zM840 546h1v3h-1zM841 543h1v3h-1zM842 538h1v5h-1zM843 533h1v6h-1zM844 527h1v6h-1zM845 522h1v5h-1zM846 521h1v2h-1zM847 521h1v4h-1zM848 525h1v4h-1zM849 529h1v8h-1zM850 537h1v15h-1zM851 552h1v4h-1zM852 556h1v2h-1zM853 556h1v2h-1zM854 552h1v4h-1zM855 221h1v1h-1zM855 548h1v4h-1zM856 221h1v1h-1zM856 545h1v4h-1zM857 221h1v1h-1zM857 541h1v4h-1zM858 221h1v1h-1zM858 538h1v3h-1zM859 220h1v2h-1zM859 536h1v2h-1zM860 216h1v4h-1zM860 536h1v1h-1zM861 213h1v3h-1zM861 536h1v1h-1zM862 210h1v3h-1zM862 535h1v1h-1zM863 206h1v4h-1zM863 535h1v1h-1zM864 202h1v4h-1zM864 535h1v1h-1zM865 198h1v4h-1zM865 535h1v1h-1zM866 194h1v4h-1zM866 535h1v1h-1zM867 191h1v3h-1zM867 535h1v2h-1zM868 193h1v2h-1zM868 536h1v1h-1zM869 195h1v2h-1zM869 536h1v1h-1zM870 197h1v2h-1zM870 536h1v1h-1zM871 199h1v2h-1zM871 535h1v1h-1zM872 201h1v1h-1zM872 535h1v1h-1zM873 201h1v1h-1zM873 535h1v1h-1zM874 199h1v3h-1zM874 535h1v1h-1zM875 194h1v5h-1zM875 535h1v1h-1zM876 189h1v5h-1zM876 534h1v1h-1zM877 185h1v4h-1zM877 534h1v1h-1zM878 181h1v4h-1zM878 534h1v1h-1zM879 176h1v5h-1zM879 534h1v1h-1zM880 170h1v6h-1zM880 534h1v1h-1zM881 166h1v4h-1zM881 534h1v1h-1zM882 167h1v1h-1zM882 533h1v1h-1zM883 167h1v1h-1zM883 533h1v1h-1zM884 168h1v2h-1zM884 533h1v1h-1zM885 170h1v2h-1zM885 533h1v1h-1zM886 172h1v2h-1zM886 533h1v1h-1zM887 173h1v1h-1zM887 533h1v1h-1zM888 171h1v3h-1zM888 533h1v1h-1zM889 166h1v5h-1zM889 532h1v1h-1zM890 164h1v2h-1zM890 532h1v1h-1zM891 161h1v3h-1zM891 532h1v1h-1zM892 159h1v2h-1zM892 532h1v1h-1zM893 157h1v2h-1zM893 532h1v1h-1zM894 156h1v1h-1zM894 532h1v1h-1zM895 155h1v1h-1zM895 532h1v1h-1zM896 153h1v2h-1zM896 532h1v1h-1zM897 152h1v1h-1zM897 532h1v1h-1zM898 153h1v2h-1zM898 532h1v1h-1zM899 155h1v3h-1zM899 532h1v1h-1zM900 158h1v4h-1zM900 532h1v1h-1zM901 162h1v4h-1zM901 532h1v1h-1zM902 166h1v3h-1zM902 532h1v1h-1zM903 166h1v2h-1zM903 532h1v1h-1zM904 164h1v2h-1zM904 532h1v1h-1zM905 161h1v3h-1zM905 532h1v1h-1zM906 157h1v4h-1zM906 532h1v1h-1zM907 155h1v2h-1zM907 532h1v1h-1zM908 156h1v1h-1zM908 532h1v1h-1zM909 157h1v1h-1zM909 532h1v1h-1zM910 158h1v1h-1zM910 532h1v1h-1zM911 159h1v2h-1zM911 533h1v1h-1zM912 161h1v3h-1zM912 533h1v1h-1zM913 164h1v4h-1zM913 533h1v1h-1zM914 168h1v5h-1zM914 533h1v1h-1zM915 173h1v4h-1zM915 533h1v1h-1zM916 177h1v5h-1zM916 533h1v1h-1zM917 182h1v5h-1zM917 533h1v1h-1zM918 187h1v3h-1zM918 533h1v1h-1zM919 188h1v1h-1zM919 534h1v1h-1zM920 187h1v1h-1zM920 534h1v1h-1zM921 186h1v1h-1zM921 534h1v1h-1zM922 185h1v1h-1zM922 534h1v1h-1zM923 186h1v1h-1zM923 534h1v1h-1zM924 187h1v4h-1zM924 535h1v1h-1zM925 191h1v7h-1zM925 535h1v1h-1zM926 198h1v7h-1zM926 535h1v1h-1zM927 205h1v5h-1zM927 535h1v1h-1zM928 210h1v4h-1zM928 535h1v1h-1zM929 214h1v4h-1zM929 536h1v1h-1zM930 218h1v3h-1zM930 536h1v1h-1zM931 221h1v4h-1zM931 536h1v1h-1zM932 225h1v4h-1zM932 536h1v1h-1zM933 229h1v3h-1zM933 536h1v1h-1zM934 231h1v1h-1zM934 537h1v1h-1zM935 232h1v1h-1zM935 537h1v1h-1zM936 232h1v1h-1zM936 537h1v1h-1zM937 232h1v2h-1zM937 537h1v1h-1zM938 234h1v3h-1zM938 537h1v1h-1zM939 237h1v4h-1zM939 538h1v1h-1zM940 241h1v6h-1zM940 538h1v1h-1zM941 247h1v6h-1zM941 538h1v1h-1zM942 253h1v7h-1zM942 538h1v1h-1zM943 260h1v5h-1zM943 538h1v1h-1zM944 265h1v4h-1zM944 539h1v1h-1zM945 269h1v4h-1zM945 539h1v1h-1zM946 273h1v2h-1zM946 539h1v1h-1zM947 275h1v1h-1zM947 539h1v1h-1zM948 276h1v1h-1zM948 539h1v1h-1zM949 277h1v2h-1zM949 539h1v1h-1zM950 279h1v1h-1zM950 540h1v1h-1zM951 280h1v1h-1zM951 540h1v1h-1zM952 281h1v1h-1zM952 540h1v1h-1zM953 282h1v2h-1zM953 540h1v1h-1zM954 284h1v2h-1zM954 540h1v1h-1zM955 286h1v2h-1zM955 540h1v1h-1zM956 288h1v2h-1zM956 540h1v1h-1zM957 290h1v4h-1zM957 541h1v1h-1zM958 294h1v4h-1zM958 541h1v1h-1zM959 298h1v4h-1zM959 541h1v1h-1zM960 302h1v3h-1zM960 541h1v1h-1zM961 303h1v1h-1zM961 541h1v1h-1zM962 303h1v1h-1zM962 541h1v1h-1zM963 302h1v1h-1zM963 541h1v1h-1zM964 301h1v1h-1zM964 541h1v1h-1zM965 301h1v1h-1zM965 541h1v1h-1zM966 300h1v1h-1zM966 541h1v1h-1zM967 300h1v1h-1zM967 541h1v1h-1zM968 301h1v1h-1zM968 541h1v1h-1zM969 302h1v1h-1zM969 541h1v1h-1zM970 303h1v2h-1zM970 541h1v1h-1zM971 305h1v1h-1zM971 541h1v1h-1zM972 306h1v1h-1zM972 541h1v1h-1zM973 306h1v2h-1zM973 541h1v1h-1zM974 303h1v3h-1zM974 541h1v1h-1zM975 299h1v4h-1zM975 541h1v1h-1zM976 296h1v3h-1zM976 541h1v1h-1zM977 294h1v2h-1zM977 541h1v1h-1zM978 291h1v3h-1zM978 541h1v1h-1zM979 288h1v3h-1zM979 540h1v1h-1zM980 286h1v2h-1zM980 540h1v1h-1zM981 283h1v3h-1zM981 540h1v1h-1zM982 281h1v2h-1zM982 540h1v1h-1zM983 279h1v2h-1zM983 540h1v1h-1zM984 277h1v2h-1zM984 540h1v1h-1zM985 276h1v1h-1zM985 540h1v1h-1zM986 274h1v2h-1zM986 540h1v1h-1zM987 272h1v2h-1zM987 539h1v1h-1zM988 270h1v2h-1zM988 539h1v1h-1zM989 266h1v4h-1zM989 539h1v1h-1zM990 261h1v5h-1zM990 539h1v1h-1zM991 256h1v5h-1zM991 539h1v1h-1zM992 251h1v5h-1zM992 538h1v1h-1zM993 245h1v6h-1zM993 538h1v1h-1zM994 240h1v5h-1zM994 538h1v1h-1zM995 236h1v4h-1zM995 538h1v1h-1zM996 232h1v4h-1zM996 538h1v1h-1zM997 230h1v2h-1zM997 537h1v1h-1zM998 228h1v2h-1zM998 537h1v1h-1zM999 226h1v2h-1zM999 537h1v1h-1zM1000 224h1v2h-1zM1000 537h1v1h-1zM1001 221h1v3h-1zM1001 537h1v1h-1zM1002 218h1v3h-1zM1002 536h1v1h-1zM1003 214h1v4h-1zM1003 536h1v1h-1zM1004 211h1v3h-1zM1004 536h1v1h-1zM1005 206h1v5h-1zM1005 536h1v1h-1zM1006 200h1v6h-1zM1006 536h1v1h-1zM1007 193h1v7h-1zM1007 535h1v1h-1zM1008 187h1v6h-1zM1008 535h1v1h-1zM1009 182h1v5h-1zM1009 535h1v1h-1zM1010 180h1v2h-1zM1010 535h1v1h-1zM1011 178h1v2h-1zM1011 535h1v1h-1zM1012 176h1v2h-1zM1012 534h1v1h-1zM1013 174h1v2h-1zM1013 534h1v1h-1zM1014 171h1v3h-1zM1014 534h1v1h-1zM1015 169h1v2h-1zM1015 534h1v1h-1zM1016 167h1v2h-1zM1016 534h1v1h-1zM1017 165h1v2h-1zM1017 534h1v1h-1zM1018 160h1v5h-1zM1018 533h1v1h-1zM1019 154h1v6h-1zM1019 533h1v1h-1zM1020 148h1v6h-1zM1020 533h1v1h-1zM1021 144h1v4h-1zM1021 533h1v1h-1zM1022 142h1v2h-1zM1022 533h1v1h-1zM1023 140h1v2h-1zM1023 533h1v1h-1zM1024 138h1v2h-1zM1024 533h1v1h-1zM1025 137h1v1h-1zM1025 532h1v1h-1zM1026 137h1v1h-1zM1026 532h1v1h-1zM1027 136h1v1h-1zM1027 532h1v1h-1zM1028 136h1v1h-1zM1028 532h1v1h-1zM1029 135h1v1h-1zM1029 532h1v1h-1zM1030 134h1v1h-1zM1030 532h1v1h-1zM1031 133h1v1h-1zM1031 532h1v1h-1zM1032 132h1v1h-1zM1032 532h1v1h-1zM1033 131h1v1h-1zM1033 532h1v1h-1zM1034 131h1v1h-1zM1034 532h1v1h-1zM1035 130h1v1h-1zM1035 532h1v1h-1zM1036 129h1v1h-1zM1036 532h1v1h-1zM1037 128h1v1h-1zM1037 532h1v1h-1zM1038 127h1v1h-1zM1038 532h1v1h-1zM1039 128h1v1h-1zM1039 532h1v1h-1zM1040 129h1v1h-1zM1040 532h1v1h-1zM1041 130h1v2h-1zM1041 532h1v1h-1zM1042 132h1v3h-1zM1042 532h1v1h-1zM1043 135h1v4h-1zM1043 532h1v1h-1zM1044 139h1v2h-1zM1044 532h1v1h-1zM1045 141h1v2h-1zM1045 532h1v1h-1zM1046 143h1v1h-1zM1046 532h1v1h-1zM1047 144h1v1h-1zM1047 533h1v1h-1zM1048 145h1v2h-1zM1048 533h1v1h-1zM1049 147h1v1h-1zM1049 533h1v1h-1zM1050 148h1v2h-1zM1050 533h1v1h-1zM1051 150h1v1h-1zM1051 533h1v1h-1zM1052 151h1v2h-1zM1052 533h1v1h-1zM1053 153h1v2h-1zM1053 533h1v1h-1zM1054 155h1v4h-1zM1054 533h1v1h-1zM1055 159h1v4h-1zM1055 534h1v1h-1zM1056 163h1v4h-1zM1056 534h1v1h-1zM1057 167h1v6h-1zM1057 534h1v1h-1zM1058 173h1v8h-1zM1058 534h1v1h-1zM1059 181h1v6h-1zM1059 534h1v1h-1zM1060 187h1v3h-1zM1060 535h1v1h-1zM1061 190h1v2h-1zM1061 535h1v1h-1zM1062 192h1v3h-1zM1062 535h1v1h-1zM1063 195h1v3h-1zM1063 535h1v1h-1zM1064 198h1v4h-1zM1064 535h1v1h-1zM1065 202h1v4h-1zM1065 536h1v1h-1zM1066 206h1v4h-1zM1066 536h1v1h-1zM1067 210h1v4h-1zM1067 536h1v1h-1zM1068 214h1v4h-1zM1068 536h1v1h-1zM1069 218h1v5h-1zM1069 536h1v1h-1zM1070 223h1v6h-1zM1070 537h1v1h-1zM1071 229h1v6h-1zM1071 537h1v1h-1zM1072 235h1v4h-1zM1072 537h1v1h-1zM1073 239h1v4h-1zM1073 537h1v1h-1zM1074 243h1v3h-1zM1074 537h1v1h-1zM1075 246h1v3h-1zM1075 538h1v1h-1zM1076 249h1v4h-1zM1076 538h1v1h-1zM1077 253h1v3h-1zM1077 538h1v1h-1zM1078 256h1v3h-1zM1078 538h1v1h-1zM1079 259h1v4h-1zM1079 538h1v1h-1zM1080 263h1v3h-1zM1080 539h1v1h-1zM1081 266h1v3h-1zM1081 539h1v1h-1zM1082 269h1v3h-1zM1082 539h1v1h-1zM1083 272h1v4h-1zM1083 539h1v1h-1zM1084 276h1v3h-1zM1084 539h1v1h-1zM1085 279h1v3h-1zM1085 540h1v1h-1zM1086 282h1v4h-1zM1086 540h1v1h-1zM1087 286h1v4h-1zM1087 540h1v1h-1zM1088 290h1v4h-1zM1088 540h1v1h-1zM1089 294h1v3h-1zM1089 540h1v1h-1zM1090 297h1v3h-1zM1090 540h1v1h-1zM1091 300h1v2h-1zM1091 540h1v1h-1zM1092 302h1v1h-1zM1092 540h1v1h-1zM1093 303h1v1h-1zM1093 541h1v1h-1zM1094 304h1v2h-1zM1094 541h1v1h-1zM1095 306h1v1h-1zM1095 541h1v1h-1zM1096 307h1v1h-1zM1096 541h1v1h-1zM1097 308h1v2h-1zM1097 541h1v1h-1zM1098 310h1v2h-1zM1098 541h1v1h-1zM1099 312h1v2h-1zM1099 541h1v1h-1zM1100 314h1v1h-1zM1100 541h1v1h-1zM1101 315h1v1h-1zM1101 541h1v1h-1zM1102 315h1v1h-1zM1102 541h1v1h-1zM1103 316h1v1h-1zM1103 541h1v1h-1zM1104 316h1v1h-1zM1104 541h1v1h-1zM1105 315h1v1h-1zM1105 541h1v1h-1zM1106 315h1v1h-1zM1106 541h1v1h-1zM1107 313h1v2h-1zM1107 541h1v1h-1zM1108 311h1v2h-1zM1108 541h1v1h-1zM1109 309h1v2h-1zM1109 541h1v1h-1zM1110 307h1v2h-1zM1110 541h1v1h-1zM1111 306h1v1h-1zM1111 541h1v1h-1zM1112 305h1v1h-1zM1112 541h1v1h-1zM1113 304h1v1h-1zM1113 541h1v1h-1zM1114 302h1v2h-1zM1114 541h1v1h-1zM1115 301h1v1h-1zM1115 540h1v1h-1zM1116 300h1v1h-1zM1116 540h1v1h-1zM1117 298h1v2h-1zM1117 540h1v1h-1zM1118 295h1v3h-1zM1118 540h1v1h-1zM1119 292h1v3h-1zM1119 540h1v1h-1zM1120 288h1v4h-1zM1120 540h1v1h-1zM1121 285h1v3h-1zM1121 540h1v1h-1zM1122 282h1v3h-1zM1122 540h1v1h-1zM1123 279h1v3h-1zM1123 539h1v1h-1zM1124 275h1v4h-1zM1124 539h1v1h-1zM1125 271h1v4h-1zM1125 539h1v1h-1zM1126 266h1v5h-1zM1126 539h1v1h-1zM1127 262h1v4h-1zM1127 539h1v1h-1zM1128 257h1v5h-1zM1128 538h1v1h-1zM1129 253h1v4h-1zM1129 538h1v1h-1zM1130 249h1v4h-1zM1130 538h1v1h-1zM1131 245h1v4h-1zM1131 538h1v1h-1zM1132 241h1v4h-1zM1132 538h1v1h-1zM1133 237h1v4h-1zM1133 537h1v1h-1zM1134 233h1v4h-1zM1134 537h1v1h-1zM1135 229h1v4h-1zM1135 537h1v1h-1zM1136 225h1v4h-1zM1136 537h1v1h-1zM1137 220h1v5h-1zM1137 537h1v1h-1zM1138 214h1v6h-1zM1138 536h1v1h-1zM1139 209h1v5h-1zM1139 536h1v1h-1zM1140 203h1v6h-1zM1140 536h1v1h-1zM1141 199h1v4h-1zM1141 536h1v1h-1zM1142 196h1v3h-1zM1142 536h1v1h-1zM1143 193h1v3h-1zM1143 535h1v1h-1zM1144 189h1v4h-1zM1144 535h1v1h-1zM1145 186h1v3h-1zM1145 535h1v1h-1zM1146 183h1v3h-1zM1146 535h1v1h-1zM1147 179h1v4h-1zM1147 535h1v1h-1zM1148 175h1v4h-1zM1148 534h1v1h-1zM1149 170h1v5h-1zM1149 534h1v1h-1zM1150 166h1v4h-1zM1150 534h1v1h-1zM1151 162h1v4h-1zM1151 534h1v1h-1zM1152 159h1v3h-1zM1152 534h1v1h-1zM1153 155h1v4h-1zM1153 533h1v1h-1zM1154 152h1v3h-1zM1154 533h1v1h-1zM1155 149h1v3h-1zM1155 533h1v1h-1zM1156 146h1v3h-1zM1156 533h1v1h-1zM1157 143h1v3h-1zM1157 533h1v1h-1zM1158 141h1v2h-1zM1158 533h1v1h-1zM1159 138h1v3h-1zM1159 533h1v1h-1zM1160 136h1v2h-1zM1160 533h1v1h-1zM1161 134h1v2h-1zM1161 532h1v1h-1zM1162 132h1v2h-1zM1162 532h1v1h-1zM1163 131h1v1h-1zM1163 532h1v1h-1zM1164 129h1v2h-1zM1164 532h1v1h-1zM1165 128h1v1h-1zM1165 532h1v1h-1zM1166 127h1v1h-1zM1166 532h1v1h-1zM1167 127h1v1h-1zM1167 532h1v1h-1zM1168 126h1v1h-1zM1168 532h1v1h-1zM1169 126h1v1h-1zM1169 532h1v1h-1zM1170 126h1v1h-1zM1170 532h1v1h-1zM1171 126h1v1h-1zM1171 532h1v1h-1zM1172 126h1v1h-1zM1172 532h1v1h-1zM1173 127h1v1h-1zM1173 532h1v1h-1zM1174 128h1v1h-1zM1174 532h1v1h-1zM1175 129h1v1h-1zM1175 532h1v1h-1zM1176 130h1v1h-1zM1176 532h1v1h-1zM1177 131h1v1h-1zM1177 532h1v1h-1zM1178 132h1v2h-1zM1178 532h1v1h-1zM1179 134h1v1h-1zM1179 532h1v1h-1zM1180 135h1v2h-1zM1180 532h1v1h-1zM1181 137h1v2h-1zM1181 532h1v1h-1zM1182 139h1v2h-1zM1182 532h1v1h-1zM1183 141h1v3h-1zM1183 533h1v1h-1zM1184 144h1v2h-1zM1184 533h1v1h-1zM1185 146h1v2h-1zM1185 533h1v1h-1zM1186 148h1v3h-1zM1186 533h1v1h-1zM1187 151h1v3h-1zM1187 533h1v1h-1zM1188 154h1v3h-1zM1188 533h1v1h-1zM1189 157h1v3h-1zM1189 533h1v1h-1zM1190 160h1v3h-1zM1190 533h1v1h-1zM1191 163h1v3h-1zM1191 534h1v1h-1zM1192 166h1v3h-1zM1192 534h1v1h-1zM1193 169h1v3h-1zM1193 534h1v1h-1zM1194 172h1v4h-1zM1194 534h1v1h-1zM1195 176h1v3h-1zM1195 534h1v1h-1zM1196 179h1v4h-1zM1196 535h1v1h-1zM1197 183h1v4h-1zM1197 535h1v1h-1zM1198 187h1v3h-1zM1198 535h1v1h-1zM1199 190h1v4h-1zM1199 535h1v1h-1zM1200 194h1v4h-1zM1200 535h1v1h-1zM1201 198h1v4h-1zM1201 536h1v1h-1zM1202 202h1v5h-1zM1202 536h1v1h-1zM1203 207h1v4h-1zM1203 536h1v1h-1zM1204 211h1v4h-1zM1204 536h1v1h-1zM1205 215h1v4h-1zM1205 536h1v1h-1zM1206 219h1v5h-1zM1206 537h1v1h-1zM1207 224h1v4h-1zM1207 537h1v1h-1zM1208 228h1v5h-1zM1208 537h1v1h-1zM1209 233h1v4h-1zM1209 537h1v1h-1zM1210 237h1v4h-1zM1210 537h1v1h-1zM1211 241h1v4h-1zM1211 538h1v1h-1zM1212 245h1v5h-1zM1212 538h1v1h-1zM1213 250h1v4h-1zM1213 538h1v1h-1zM1214 254h1v4h-1zM1214 538h1v1h-1zM1215 258h1v4h-1zM1215 538h1v1h-1zM1216 262h1v4h-1zM1216 539h1v1h-1zM1217 266h1v4h-1zM1217 539h1v1h-1zM1218 270h1v3h-1zM1218 539h1v1h-1zM1219 273h1v4h-1zM1219 539h1v1h-1zM1220 277h1v4h-1zM1220 539h1v1h-1zM1221 281h1v3h-1zM1221 540h1v1h-1zM1222 284h1v3h-1zM1222 540h1v1h-1zM1223 287h1v3h-1zM1223 540h1v1h-1zM1224 290h1v3h-1zM1224 540h1v1h-1zM1225 293h1v3h-1zM1225 540h1v1h-1zM1226 296h1v2h-1zM1226 540h1v1h-1zM1227 298h1v3h-1zM1227 540h1v1h-1zM1228 301h1v2h-1zM1228 540h1v1h-1zM1229 303h1v2h-1zM1229 541h1v1h-1zM1230 305h1v2h-1zM1230 541h1v1h-1zM1231 307h1v2h-1zM1231 541h1v1h-1zM1232 309h1v1h-1zM1232 541h1v1h-1zM1233 310h1v2h-1zM1233 541h1v1h-1zM1234 312h1v1h-1zM1234 541h1v1h-1zM1235 313h1v1h-1zM1235 541h1v1h-1zM1236 314h1v1h-1zM1236 541h1v1h-1zM1237 314h1v1h-1zM1237 541h1v1h-1zM1238 315h1v1h-1zM1238 541h1v1h-1zM1239 315h1v1h-1zM1239 541h1v1h-1zM1240 315h1v1h-1zM1240 541h1v1h-1zM1241 315h1v1h-1zM1241 541h1v1h-1zM1242 315h1v1h-1zM1242 541h1v1h-1zM1243 314h1v1h-1zM1243 541h1v1h-1zM1244 313h1v1h-1zM1244 541h1v1h-1zM1245 312h1v1h-1zM1245 541h1v1h-1zM1246 311h1v1h-1zM1246 541h1v1h-1zM1247 310h1v1h-1zM1247 541h1v1h-1zM1248 308h1v2h-1zM1248 541h1v1h-1zM1249 306h1v2h-1zM1249 541h1v1h-1zM1250 304h1v2h-1zM1250 541h1v1h-1zM1251 302h1v2h-1zM1251 540h1v1h-1zM1252 300h1v2h-1zM1252 540h1v1h-1zM1253 297h1v3h-1zM1253 540h1v1h-1zM1254 294h1v3h-1zM1254 540h1v1h-1zM1255 291h1v3h-1zM1255 540h1v1h-1zM1256 288h1v3h-1zM1256 540h1v1h-1zM1257 285h1v3h-1zM1257 540h1v1h-1zM1258 282h1v3h-1zM1258 540h1v1h-1zM1259 278h1v4h-1zM1259 539h1v1h-1zM1260 275h1v3h-1zM1260 539h1v1h-1zM1261 271h1v4h-1zM1261 539h1v1h-1zM1262 268h1v3h-1zM1262 539h1v1h-1zM1263 265h1v3h-1zM1263 539h1v1h-1z" fill="#ffff00"/>
<path d="M40 276h1v2h-1zM40 539h1v1h-1zM41 278h1v4h-1zM41 539h1v1h-1zM42 282h1v3h-1zM42 539h1v1h-1zM43 285h1v3h-1zM43 539h1v1h-1zM44 288h1v4h-1zM44 540h1v1h-1zM45 292h1v3h-1zM45 540h1v1h-1zM46 295h1v2h-1zM46 540h1v1h-1zM47 297h1v3h-1zM47 540h1v1h-1zM48 300h1v2h-1zM48 540h1v1h-1zM49 302h1v3h-1zM49 540h1v1h-1zM50 305h1v2h-1zM50 540h1v1h-1zM51 307h1v2h-1zM51 541h1v1h-1zM52 309h1v2h-1zM52 541h1v1h-1zM53 311h1v1h-1zM53 541h1v1h-1zM54 312h1v2h-1zM54 541h1v1h-1zM55 314h1v1h-1zM55 541h1v1h-1zM56 315h1v2h-1zM56 541h1v1h-1zM57 317h1v1h-1zM57 541h1v1h-1zM58 317h1v1h-1zM58 541h1v1h-1zM59 318h1v1h-1zM59 541h1v1h-1zM60 318h1v1h-1zM60 541h1v1h-1zM61 319h1v1h-1zM61 541h1v1h-1zM62 319h1v1h-1zM62 541h1v1h-1zM63 318h1v1h-1zM63 541h1v1h-1zM64 318h1v1h-1zM64 541h1v1h-1zM65 317h1v1h-1zM65 541h1v1h-1zM66 316h1v1h-1zM66 541h1v1h-1zM67 315h1v1h-1zM67 541h1v1h-1zM68 314h1v1h-1zM68 541h1v1h-1zM69 313h1v1h-1zM69 541h1v1h-1zM70 311h1v2h-1zM70 541h1v1h-1zM71 310h1v1h-1zM71 541h1v1h-1zM72 307h1v3h-1zM72 541h1v1h-1zM73 305h1v2h-1zM73 540h1v1h-1zM74 303h1v2h-1zM74 540h1v1h-1zM75 300h1v3h-1zM75 540h1v1h-1zM76 297h1v3h-1zM76 540h1v1h-1zM77 294h1v3h-1zM77 540h1v1h-1zM78 291h1v3h-1zM78 540h1v1h-1zM79 288h1v3h-1zM79 540h1v1h-1zM80 285h1v3h-1zM80 540h1v1h-1zM81 281h1v4h-1zM81 539h1v1h-1zM82 278h1v3h-1zM82 539h1v1h-1zM83 274h1v4h-1zM83 539h1v1h-1zM84 271h1v3h-1zM84 539h1v1h-1zM85 267h1v4h-1zM85 539h1v1h-1zM86 263h1v4h-1zM86 539h1v1h-1zM87 259h1v4h-1zM87 538h1v1h-1zM88 254h1v5h-1zM88 538h1v1h-1zM89 250h1v4h-1zM89 538h1v1h-1zM90 246h1v4h-1zM90 538h1v1h-1zM91 242h1v4h-1zM91 537h1v1h-1zM92 237h1v5h-1zM92 537h1v1h-1zM93 233h1v4h-1zM93 537h1v1h-1zM94 228h1v5h-1zM94 537h1v1h-1zM95 224h1v4h-1zM95 537h1v1h-1zM96 220h1v4h-1zM96 536h1v1h-1zM97 215h1v5h-1zM97 536h1v1h-1zM98 211h1v4h-1zM98 536h1v1h-1zM99 206h1v5h-1zM99 536h1v1h-1zM100 202h1v4h-1zM100 536h1v1h-1zM101 198h1v4h-1zM101 535h1v1h-1zM102 194h1v4h-1zM102 535h1v1h-1zM103 189h1v5h-1zM103 535h1v1h-1zM104 185h1v4h-1zM104 535h1v1h-1zM105 181h1v4h-1zM105 535h1v1h-1zM106 177h1v4h-1zM106 534h1v1h-1zM107 174h1v3h-1zM107 534h1v1h-1zM108 170h1v4h-1zM108 534h1v1h-1zM109 166h1v4h-1zM109 534h1v1h-1zM110 163h1v3h-1zM110 534h1v1h-1zM111 159h1v4h-1zM111 534h1v1h-1zM112 156h1v3h-1zM112 533h1v1h-1zM113 153h1v3h-1zM113 533h1v1h-1zM114 150h1v3h-1zM114 533h1v1h-1zM115 147h1v3h-1zM115 533h1v1h-1zM116 145h1v2h-1zM116 533h1v1h-1zM117 142h1v3h-1zM117 533h1v1h-1zM118 140h1v2h-1zM118 533h1v1h-1zM119 138h1v2h-1zM119 532h1v1h-1zM120 136h1v2h-1zM120 532h1v1h-1zM121 134h1v2h-1zM121 532h1v1h-1zM122 133h1v1h-1zM122 532h1v1h-1zM123 131h1v2h-1zM123 532h1v1h-1zM124 130h1v1h-1zM124 532h1v1h-1zM125 129h1v1h-1zM125 532h1v1h-1zM126 128h1v1h-1zM126 532h1v1h-1zM127 127h1v1h-1zM127 532h1v1h-1zM128 127h1v1h-1zM128 532h1v1h-1zM129 127h1v1h-1zM129 532h1v1h-1zM130 127h1v1h-1zM130 532h1v1h-1zM131 127h1v1h-1zM131 532h1v1h-1zM132 127h1v1h-1zM132 532h1v1h-1zM133 128h1v1h-1zM133 532h1v1h-1zM134 129h1v1h-1zM134 532h1v1h-1zM135 130h1v1h-1zM135 532h1v1h-1zM136 131h1v1h-1zM136 532h1v1h-1zM137 132h1v1h-1zM137 532h1v1h-1zM138 133h1v2h-1zM138 532h1v1h-1zM139 135h1v1h-1zM139 532h1v1h-1zM140 136h1v2h-1zM140 532h1v1h-1zM141 138h1v3h-1zM141 533h1v1h-1zM142 141h1v2h-1zM142 533h1v1h-1zM143 143h1v3h-1zM143 533h1v1h-1zM144 146h1v2h-1zM144 533h1v1h-1zM145 148h1v3h-1zM145 533h1v1h-1zM146 151h1v3h-1zM146 533h1v1h-1zM147 154h1v3h-1zM147 533h1v1h-1zM148 157h1v4h-1zM148 533h1v1h-1zM149 161h1v3h-1zM149 534h1v1h-1zM150 164h1v3h-1zM150 534h1v1h-1zM151 167h1v4h-1zM151 534h1v1h-1zM152 171h1v4h-1zM152 534h1v1h-1zM153 175h1v4h-1zM153 534h1v1h-1zM154 179h1v4h-1zM154 535h1v1h-1zM155 183h1v4h-1zM155 535h1v1h-1zM156 187h1v4h-1zM156 535h1v1h-1zM157 191h1v4h-1zM157 535h1v1h-1zM158 195h1v4h-1zM158 535h1v1h-1zM159 199h1v4h-1zM159 536h1v1h-1zM160 203h1v5h-1zM160 536h1v1h-1zM161 208h1v4h-1zM161 536h1v1h-1zM162 212h1v5h-1zM162 536h1v1h-1zM163 217h1v4h-1zM163 536h1v1h-1zM164 221h1v4h-1zM164 537h1v1h-1zM165 225h1v5h-1zM165 537h1v1h-1zM166 230h1v4h-1zM166 537h1v1h-1zM167 234h1v4h-1zM167 537h1v1h-1zM168 238h1v5h-1zM168 537h1v1h-1zM169 243h1v4h-1zM169 538h1v1h-1zM170 247h1v4h-1zM170 538h1v1h-1zM171 251h1v4h-1zM171 538h1v1h-1zM172 255h1v4h-1zM172 538h1v1h-1zM173 259h1v4h-1zM173 538h1v1h-1zM174 263h1v4h-1zM174 539h1v1h-1zM175 267h1v4h-1zM175 539h1v1h-1zM176 271h1v3h-1zM176 539h1v1h-1zM177 274h1v4h-1zM177 539h1v1h-1zM178 278h1v4h-1zM178 539h1v1h-1zM179 282h1v3h-1zM179 540h1v1h-1zM180 285h1v3h-1zM180 540h1v1h-1zM181 288h1v3h-1zM181 540h1v1h-1zM182 291h1v3h-1zM182 540h1v1h-1zM183 294h1v3h-1zM183 540h1v1h-1zM184 297h1v2h-1zM184 540h1v1h-1zM185 299h1v2h-1zM185 540h1v1h-1zM186 301h1v3h-1zM186 540h1v1h-1zM187 304h1v2h-1zM187 541h1v1h-1zM188 306h1v1h-1zM188 541h1v1h-1zM189 307h1v2h-1zM189 541h1v1h-1zM190 309h1v2h-1zM190 541h1v1h-1zM191 311h1v1h-1zM191 541h1v1h-1zM192 312h1v1h-1zM192 541h1v1h-1zM193 313h1v1h-1zM193 541h1v1h-1zM194 314h1v1h-1zM194 541h1v1h-1zM195 315h1v1h-1zM195 541h1v1h-1zM196 315h1v1h-1zM196 541h1v1h-1zM197 315h1v1h-1zM197 541h1v1h-1zM198 315h1v1h-1zM198 541h1v1h-1zM199 315h1v1h-1zM199 541h1v1h-1zM200 315h1v1h-1zM200 541h1v1h-1zM201 314h1v1h-1zM201 541h1v1h-1zM202 313h1v1h-1zM202 541h1v1h-1zM203 312h1v1h-1zM203 541h1v1h-1zM204 311h1v1h-1zM204 541h1v1h-1zM205 310h1v1h-1zM205 541h1v1h-1zM206 308h1v2h-1zM206 541h1v1h-1zM207 306h1v2h-1zM207 541h1v1h-1zM208 304h1v2h-1zM208 541h1v1h-1zM209 302h1v2h-1zM209 540h1v1h-1zM210 299h1v3h-1zM210 540h1v1h-1zM211 297h1v2h-1zM211 540h1v1h-1zM212 294h1v3h-1zM212 540h1v1h-1zM213 291h1v3h-1zM213 540h1v1h-1zM214 288h1v3h-1zM214 540h1v1h-1zM215 285h1v3h-1zM215 540h1v1h-1zM216 282h1v3h-1zM216 540h1v1h-1zM217 278h1v4h-1zM217 539h1v1h-1zM218 275h1v3h-1zM218 539h1v1h-1zM219 271h1v4h-1zM219 539h1v1h-1zM220 267h1v4h-1zM220 539h1v1h-1zM221 263h1v4h-1zM221 539h1v1h-1zM222 259h1v4h-1zM222 538h1v1h-1zM223 255h1v4h-1zM223 538h1v1h-1zM224 251h1v4h-1zM224 538h1v1h-1zM225 247h1v4h-1zM225 538h1v1h-1zM226 243h1v4h-1zM226 538h1v1h-1zM227 238h1v5h-1zM227 537h1v1h-1zM228 234h1v4h-1zM228 537h1v1h-1zM229 230h1v4h-1zM229 537h1v1h-1zM230 225h1v5h-1zM230 537h1v1h-1zM231 221h1v4h-1zM231 537h1v1h-1zM232 217h1v4h-1zM232 536h1v1h-1zM233 212h1v5h-1zM233 536h1v1h-1zM234 208h1v4h-1zM234 536h1v1h-1zM235 203h1v5h-1zM235 536h1v1h-1zM236 199h1v4h-1zM236 536h1v1h-1zM237 195h1v4h-1zM237 535h1v1h-1zM238 191h1v4h-1zM238 535h1v1h-1zM239 187h1v4h-1zM239 535h1v1h-1zM240 183h1v4h-1zM240 535h1v1h-1zM241 179h1v4h-1zM241 535h1v1h-1zM242 175h1v4h-1zM242 534h1v1h-1zM243 171h1v4h-1zM243 534h1v1h-1zM244 167h1v4h-1zM244 534h1v1h-1zM245 164h1v3h-1zM245 534h1v1h-1zM246 160h1v4h-1zM246 534h1v1h-1zM247 157h1v3h-1zM247 533h1v1h-1zM248 154h1v3h-1zM248 533h1v1h-1zM249 151h1v3h-1zM249 533h1v1h-1zM250 148h1v3h-1zM250 533h1v1h-1zM251 145h1v3h-1zM251 533h1v1h-1zM252 143h1v2h-1zM252 533h1v1h-1zM253 141h1v2h-1zM253 533h1v1h-1zM254 138h1v3h-1zM254 533h1v1h-1zM255 136h1v2h-1zM255 532h1v1h-1zM256 135h1v1h-1zM256 532h1v1h-1zM257 133h1v2h-1zM257 532h1v1h-1zM258 131h1v2h-1zM258 532h1v1h-1zM259 130h1v1h-1zM259 532h1v1h-1zM260 129h1v1h-1zM260 532h1v1h-1zM261 128h1v1h-1zM261 532h1v1h-1zM262 127h1v1h-1zM262 532h1v1h-1zM263 126h1v1h-1zM263 532h1v1h-1zM264 126h1v1h-1zM264 532h1v1h-1zM265 126h1v1h-1zM265 532h1v1h-1zM266 126h1v1h-1zM266 532h1v1h-1zM267 126h1v1h-1zM267 532h1v1h-1zM268 127h1v1h-1zM268 532h1v1h-1zM269 127h1v1h-1zM269 532h1v1h-1zM270 128h1v1h-1zM270 532h1v1h-1zM271 129h1v1h-1zM271 532h1v1h-1zM272 130h1v1h-1zM272 532h1v1h-1zM273 131h1v2h-1zM273 532h1v1h-1zM274 133h1v1h-1zM274 532h1v1h-1zM275 134h1v2h-1zM275 532h1v1h-1zM276 136h1v2h-1zM276 532h1v1h-1zM277 138h1v3h-1zM277 533h1v1h-1zM278 141h1v2h-1zM278 533h1v1h-1zM279 143h1v3h-1zM279 533h1v1h-1zM280 146h1v3h-1zM280 533h1v1h-1zM281 149h1v3h-1zM281 533h1v1h-1zM282 152h1v3h-1zM282 533h1v1h-1zM283 155h1v3h-1zM283 533h1v1h-1zM284 158h1v3h-1zM284 534h1v1h-1zM285 161h1v4h-1zM285 534h1v1h-1zM286 165h1v3h-1zM286 534h1v1h-1zM287 168h1v4h-1zM287 534h1v1h-1zM288 172h1v4h-1zM288 534h1v1h-1zM289 176h1v3h-1zM289 534h1v1h-1zM290 179h1v4h-1zM290 535h1v1h-1zM291 183h1v4h-1zM291 535h1v1h-1zM292 187h1v5h-1zM292 535h1v1h-1zM293 192h1v4h-1zM293 535h1v1h-1zM294 196h1v4h-1zM294 535h1v1h-1zM295 200h1v4h-1zM295 536h1v1h-1zM296 204h1v5h-1zM296 536h1v1h-1zM297 209h1v4h-1zM297 536h1v1h-1zM298 213h1v5h-1zM298 536h1v1h-1zM299 218h1v4h-1zM299 536h1v1h-1zM300 222h1v4h-1zM300 537h1v1h-1zM301 226h1v5h-1zM301 537h1v1h-1zM302 231h1v4h-1zM302 537h1v1h-1zM303 235h1v4h-1zM303 537h1v1h-1zM304 239h1v5h-1zM304 538h1v1h-1zM305 244h1v4h-1zM305 538h1v1h-1zM306 248h1v4h-1zM306 538h1v1h-1zM307 252h1v4h-1zM307 538h1v1h-1zM308 256h1v4h-1zM308 538h1v1h-1zM309 260h1v4h-1zM309 539h1v1h-1zM310 264h1v4h-1zM310 539h1v1h-1zM311 268h1v4h-1zM311 539h1v1h-1zM312 272h1v3h-1zM312 539h1v1h-1zM313 275h1v4h-1zM313 539h1v1h-1zM314 279h1v3h-1zM314 539h1v1h-1zM315 282h1v4h-1zM315 540h1v1h-1zM316 286h1v3h-1zM316 540h1v1h-1zM317 289h1v3h-1zM317 540h1v1h-1zM318 292h1v3h-1zM318 540h1v1h-1zM319 295h1v2h-1zM319 540h1v1h-1zM320 297h1v3h-1zM320 540h1v1h-1zM321 300h1v2h-1zM321 540h1v1h-1zM322 302h1v2h-1zM322 541h1v1h-1zM323 304h1v2h-1zM323 541h1v1h-1zM324 306h1v2h-1zM324 541h1v1h-1zM325 308h1v2h-1zM325 541h1v1h-1zM326 310h1v1h-1zM326 541h1v1h-1zM327 311h1v1h-1zM327 541h1v1h-1zM328 312h1v2h-1zM328 541h1v1h-1zM329 313h1v1h-1zM329 541h1v1h-1zM330 314h1v1h-1zM330 541h1v1h-1zM331 315h1v1h-1zM331 541h1v1h-1zM332 315h1v1h-1zM332 541h1v1h-1zM333 315h1v1h-1zM333 541h1v1h-1zM334 315h1v1h-1zM334 541h1v1h-1zM335 315h1v1h-1zM335 541h1v1h-1zM336 314h1v1h-1zM336 541h1v1h-1zM337 314h1v1h-1zM337 541h1v1h-1zM338 313h1v1h-1zM338 541h1v1h-1zM339 312h1v1h-1zM339 541h1v1h-1zM340 310h1v2h-1zM340 541h1v1h-1zM341 309h1v1h-1zM341 541h1v1h-1zM342 307h1v2h-1zM342 541h1v1h-1zM343 305h1v2h-1zM343 541h1v1h-1zM344 303h1v2h-1zM344 541h1v1h-1zM345 301h1v2h-1zM345 540h1v1h-1zM346 298h1v3h-1zM346 540h1v1h-1zM347 296h1v2h-1zM347 540h1v1h-1zM348 293h1v3h-1zM348 540h1v1h-1zM349 290h1v3h-1zM349 540h1v1h-1zM350 287h1v3h-1zM350 540h1v1h-1zM351 284h1v3h-1zM351 540h1v1h-1zM352 280h1v4h-1zM352 539h1v1h-1zM353 277h1v3h-1zM353 539h1v1h-1zM354 273h1v4h-1zM354 539h1v1h-1zM355 270h1v3h-1zM355 539h1v1h-1zM356 266h1v4h-1zM356 539h1v1h-1zM357 262h1v4h-1zM357 539h1v1h-1zM358 258h1v4h-1zM358 538h1v1h-1zM359 254h1v4h-1zM359 538h1v1h-1zM360 250h1v4h-1zM360 538h1v1h-1zM361 245h1v5h-1zM361 538h1v1h-1zM362 241h1v4h-1zM362 538h1v1h-1zM363 237h1v4h-1zM363 537h1v1h-1zM364 232h1v5h-1zM364 537h1v1h-1zM365 228h1v4h-1zM365 537h1v1h-1zM366 224h1v4h-1zM366 537h1v1h-1zM367 219h1v5h-1zM367 537h1v1h-1zM368 215h1v4h-1zM368 536h1v1h-1zM369 211h1v4h-1zM369 536h1v1h-1zM370 206h1v5h-1zM370 536h1v1h-1zM371 202h1v4h-1zM371 536h1v1h-1zM372 198h1v4h-1zM372 535h1v1h-1zM373 194h1v4h-1zM373 535h1v1h-1zM374 189h1v5h-1zM374 535h1v1h-1zM375 185h1v4h-1zM375 535h1v1h-1zM376 181h1v4h-1zM376 535h1v1h-1zM377 177h1v4h-1zM377 534h1v1h-1zM378 174h1v3h-1zM378 534h1v1h-1zM379 170h1v4h-1zM379 534h1v1h-1zM380 166h1v4h-1zM380 534h1v1h-1zM381 163h1v3h-1zM381 534h1v1h-1zM382 159h1v4h-1zM382 534h1v1h-1zM383 156h1v3h-1zM383 533h1v1h-1zM384 153h1v3h-1zM384 533h1v1h-1zM385 150h1v3h-1zM385 533h1v1h-1zM386 147h1v3h-1zM386 533h1v1h-1zM387 144h1v3h-1zM387 533h1v1h-1zM388 142h1v2h-1zM388 533h1v1h-1zM389 140h1v2h-1zM389 533h1v1h-1zM390 138h1v2h-1zM390 532h1v1h-1zM391 136h1v2h-1zM391 532h1v1h-1zM392 134h1v2h-1zM392 532h1v1h-1zM393 132h1v2h-1zM393 532h1v1h-1zM394 131h1v1h-1zM394 532h1v1h-1zM395 129h1v2h-1zM395 532h1v1h-1zM396 128h1v1h-1zM396 532h1v1h-1zM397 127h1v1h-1zM397 532h1v1h-1zM398 127h1v1h-1zM398 532h1v1h-1zM399 126h1v1h-1zM399 532h1v1h-1zM400 126h1v1h-1zM400 532h1v1h-1zM401 126h1v1h-1zM401 532h1v1h-1zM402 126h1v1h-1zM402 532h1v1h-1zM403 126h1v1h-1zM403 532h1v1h-1zM404 127h1v1h-1zM404 532h1v1h-1zM405 127h1v1h-1zM405 532h1v1h-1zM406 128h1v1h-1zM406 532h1v1h-1zM407 129h1v2h-1zM407 532h1v1h-1zM408 131h1v1h-1zM408 532h1v1h-1zM409 132h1v1h-1zM409 532h1v1h-1zM410 133h1v2h-1zM410 532h1v1h-1zM411 135h1v2h-1zM411 532h1v1h-1zM412 137h1v2h-1zM412 532h1v1h-1zM413 139h1v3h-1zM413 533h1v1h-1zM414 142h1v2h-1zM414 533h1v1h-1zM415 144h1v3h-1zM415 533h1v1h-1zM416 147h1v3h-1zM416 533h1v1h-1zM417 150h1v3h-1zM417 533h1v1h-1zM418 153h1v3h-1zM418 533h1v1h-1zM419 156h1v3h-1zM419 533h1v1h-1zM420 159h1v3h-1zM420 534h1v1h-1zM421 162h1v4h-1zM421 534h1v1h-1zM422 166h1v3h-1zM422 534h1v1h-1zM423 169h1v4h-1zM423 534h1v1h-1zM424 173h1v4h-1zM424 534h1v1h-1zM425 177h1v4h-1zM425 534h1v1h-1zM426 181h1v4h-1zM426 535h1v1h-1zM427 185h1v4h-1zM427 535h1v1h-1zM428 189h1v4h-1zM428 535h1v1h-1zM429 193h1v4h-1zM429 535h1v1h-1zM430 197h1v5h-1zM430 535h1v1h-1zM431 202h1v4h-1zM431 536h1v1h-1zM432 206h1v4h-1zM432 536h1v1h-1zM433 210h1v5h-1zM433 536h1v1h-1zM434 215h1v4h-1zM434 536h1v1h-1zM435 219h1v4h-1zM435 537h1v1h-1zM436 223h1v5h-1zM436 537h1v1h-1zM437 228h1v4h-1zM437 537h1v1h-1zM438 232h1v4h-1zM438 537h1v1h-1zM439 236h1v5h-1zM439 537h1v1h-1zM440 241h1v4h-1zM440 538h1v1h-1zM441 245h1v4h-1zM441 538h1v1h-1zM442 249h1v4h-1zM442 538h1v1h-1zM443 253h1v4h-1zM443 538h1v1h-1zM444 257h1v4h-1zM444 538h1v1h-1zM445 261h1v4h-1zM445 539h1v1h-1zM446 265h1v4h-1zM446 539h1v1h-1zM447 269h1v3h-1zM447 539h1v25h-1zM448 221h1v51h-1zM448 539h1v1h-1zM448 564h1v23h-1zM449 586h1v7h-1zM450 593h1v4h-1zM451 597h1v4h-1zM452 601h1v2h-1zM453 565h1v37h-1zM454 562h1v3h-1zM455 561h1v2h-1zM456 559h1v3h-1zM457 558h1v2h-1zM458 556h1v2h-1zM459 555h1v2h-1zM460 553h1v2h-1zM461 552h1v1h-1zM462 547h1v5h-1zM463 540h1v8h-1zM464 503h1v37h-1zM465 503h1v22h-1zM466 525h1v28h-1zM467 553h1v22h-1zM468 575h1v22h-1zM469 597h1v20h-1zM470 616h1v12h-1zM471 626h1v3h-1zM472 618h1v9h-1zM473 607h1v11h-1zM474 594h1v13h-1zM475 583h1v11h-1zM476 570h1v13h-1zM477 537h1v34h-1zM478 529h1v9h-1zM479 531h1v13h-1zM480 544h1v11h-1zM481 555h1v5h-1zM482 557h1v4h-1zM483 551h1v6h-1zM484 544h1v7h-1zM485 536h1v8h-1zM486 530h1v6h-1zM487 527h1v3h-1zM488 527h1v47h-1zM489 574h1v22h-1zM490 596h1v7h-1zM491 603h1v4h-1zM492 607h1v4h-1zM493 610h1v3h-1zM494 603h1v9h-1zM495 582h1v21h-1zM496 556h1v27h-1zM497 526h1v30h-1zM498 501h1v25h-1zM499 494h1v8h-1zM500 496h1v13h-1zM501 509h1v27h-1zM502 535h1v23h-1zM503 558h1v5h-1zM504 563h1v3h-1zM505 565h1v1h-1zM506 565h1v1h-1zM507 565h1v1h-1zM508 565h1v2h-1zM509 566h1v3h-1zM510 569h1v5h-1zM511 574h1v7h-1zM512 581h1v3h-1zM513 574h1v10h-1zM514 558h1v16h-1zM515 539h1v20h-1zM516 519h1v20h-1zM517 504h1v16h-1zM518 491h1v13h-1zM519 487h1v4h-1zM520 488h1v10h-1zM521 498h1v12h-1zM522 510h1v11h-1zM523 521h1v12h-1zM524 533h1v16h-1zM525 549h1v1h-1zM526 550h1v1h-1zM527 550h1v1h-1zM528 550h1v1h-1zM529 550h1v1h-1zM530 551h1v1h-1zM531 552h1v1h-1zM532 553h1v2h-1zM533 555h1v1h-1zM534 556h1v1h-1zM535 555h1v2h-1zM536 550h1v6h-1zM537 530h1v20h-1zM538 495h1v36h-1zM539 471h1v24h-1zM540 471h1v4h-1zM541 474h1v9h-1zM542 483h1v11h-1zM543 494h1v24h-1zM544 518h1v43h-1zM545 560h1v3h-1zM546 562h1v1h-1zM547 562h1v1h-1zM548 561h1v1h-1zM549 560h1v2h-1zM550 530h1v14h-1zM550 558h1v3h-1zM551 530h1v1h-1zM551 543h1v16h-1zM552 531h1v1h-1zM553 532h1v2h-1zM554 533h1v2h-1zM555 534h1v1h-1zM556 533h1v3h-1zM557 524h1v9h-1zM558 491h1v33h-1zM559 491h1v4h-1zM560 495h1v9h-1zM561 504h1v15h-1zM562 519h1v21h-1zM563 540h1v11h-1zM564 551h1v11h-1zM565 562h1v8h-1zM566 570h1v6h-1zM567 576h1v2h-1zM568 573h1v5h-1zM569 565h1v8h-1zM570 555h1v10h-1zM571 537h1v19h-1zM572 526h1v11h-1zM573 525h1v3h-1zM574 528h1v3h-1zM575 531h1v4h-1zM576 535h1v2h-1zM577 537h1v3h-1zM578 538h1v2h-1zM579 520h1v18h-1zM580 516h1v5h-1zM581 518h1v8h-1zM582 526h1v9h-1zM583 535h1v10h-1zM584 545h1v11h-1zM585 556h1v11h-1zM586 567h1v10h-1zM587 577h1v9h-1zM588 585h1v6h-1zM589 588h1v3h-1zM590 579h1v9h-1zM591 565h1v14h-1zM592 528h1v38h-1zM593 528h1v1h-1zM594 529h1v3h-1zM595 532h1v3h-1zM596 535h1v3h-1zM597 537h1v4h-1zM598 541h1v4h-1zM599 544h1v4h-1zM600 548h1v6h-1zM601 553h1v5h-1zM602 558h1v7h-1zM603 564h1v6h-1zM604 570h1v7h-1zM605 577h1v8h-1zM606 585h1v8h-1zM607 592h1v6h-1zM608 598h1v2h-1zM609 596h1v3h-1zM610 591h1v5h-1zM611 572h1v19h-1zM612 535h1v38h-1zM613 525h1v10h-1zM614 523h1v3h-1zM615 524h1v13h-1zM616 536h1v7h-1zM617 543h1v6h-1zM618 549h1v6h-1zM619 555h1v8h-1zM620 563h1v3h-1zM621 566h1v2h-1zM622 568h1v2h-1zM623 570h1v2h-1zM624 571h1v2h-1zM625 567h1v4h-1zM626 567h1v3h-1zM627 569h1v6h-1zM628 575h1v6h-1zM629 580h1v2h-1zM630 571h1v10h-1zM631 557h1v14h-1zM632 541h1v16h-1zM633 527h1v14h-1zM634 518h1v9h-1zM635 516h1v3h-1zM636 518h1v9h-1zM637 527h1v10h-1zM638 537h1v9h-1zM639 545h1v9h-1zM640 554h1v10h-1zM641 563h1v7h-1zM642 570h1v4h-1zM643 571h1v4h-1zM644 564h1v8h-1zM645 555h1v9h-1zM646 549h1v7h-1zM647 542h1v7h-1zM648 537h1v6h-1zM649 531h1v7h-1zM650 525h1v6h-1zM651 518h1v7h-1zM652 513h1v5h-1zM653 508h1v5h-1zM654 504h1v4h-1zM655 503h1v2h-1zM656 504h1v4h-1zM657 508h1v7h-1zM658 514h1v9h-1zM659 523h1v9h-1zM660 532h1v15h-1zM661 547h1v15h-1zM662 561h1v5h-1zM663 556h1v9h-1zM664 547h1v9h-1zM665 539h1v9h-1zM666 531h1v8h-1zM667 526h1v6h-1zM668 525h1v5h-1zM669 530h1v2h-1zM670 528h1v3h-1zM671 523h1v5h-1zM672 518h1v5h-1zM673 514h1v4h-1zM674 511h1v3h-1zM675 507h1v4h-1zM676 506h1v2h-1zM677 506h1v2h-1zM678 508h1v3h-1zM679 510h1v6h-1zM680 515h1v17h-1zM681 532h1v17h-1zM682 549h1v13h-1zM683 562h1v4h-1zM684 552h1v12h-1zM685 530h1v22h-1zM686 519h1v12h-1zM687 513h1v6h-1zM688 512h1v2h-1zM689 512h1v2h-1zM690 514h1v2h-1zM691 516h1v2h-1zM692 518h1v2h-1zM693 519h1v1h-1zM694 520h1v1h-1zM695 521h1v1h-1zM696 522h1v1h-1zM697 523h1v2h-1zM698 524h1v4h-1zM699 528h1v8h-1zM700 536h1v8h-1zM701 544h1v10h-1zM702 554h1v10h-1zM703 563h1v6h-1zM704 564h1v6h-1zM705 551h1v13h-1zM706 540h1v11h-1zM707 531h1v10h-1zM708 522h1v9h-1zM709 517h1v5h-1zM710 516h1v2h-1zM711 516h1v3h-1zM712 519h1v4h-1zM713 523h1v3h-1zM714 526h1v5h-1zM715 531h1v10h-1zM716 541h1v7h-1zM717 547h1v3h-1zM718 550h1v1h-1zM719 550h1v1h-1zM720 551h1v3h-1zM721 554h1v7h-1zM722 561h1v8h-1zM723 569h1v8h-1zM724 576h1v3h-1zM725 571h1v7h-1zM726 559h1v13h-1zM727 547h1v12h-1zM728 539h1v8h-1zM729 531h1v8h-1zM730 528h1v3h-1zM731 528h1v4h-1zM732 531h1v7h-1zM733 538h1v6h-1zM734 544h1v13h-1zM735 557h1v12h-1zM736 569h1v4h-1zM737 572h1v2h-1zM738 569h1v3h-1zM739 567h1v2h-1zM740 565h1v2h-1zM741 565h1v2h-1zM742 567h1v3h-1zM743 570h1v4h-1zM744 574h1v1h-1zM745 570h1v5h-1zM746 561h1v9h-1zM747 553h1v9h-1zM748 547h1v6h-1zM749 541h1v6h-1zM750 536h1v5h-1zM751 534h1v3h-1zM752 534h1v3h-1zM753 537h1v4h-1zM754 541h1v7h-1zM755 548h1v8h-1zM756 556h1v16h-1zM757 572h1v10h-1zM758 580h1v3h-1zM759 573h1v7h-1zM760 567h1v6h-1zM761 562h1v5h-1zM762 560h1v2h-1zM763 559h1v1h-1zM764 558h1v1h-1zM765 558h1v1h-1zM766 557h1v1h-1zM767 555h1v2h-1zM768 551h1v5h-1zM769 546h1v5h-1zM770 539h1v7h-1zM771 532h1v7h-1zM772 530h1v3h-1zM773 530h1v3h-1zM774 533h1v5h-1zM775 538h1v7h-1zM776 545h1v13h-1zM777 558h1v13h-1zM778 570h1v4h-1zM779 564h1v8h-1zM780 554h1v10h-1zM781 547h1v7h-1zM782 539h1v8h-1zM783 535h1v5h-1zM784 533h1v2h-1zM785 532h1v1h-1zM786 532h1v1h-1zM787 531h1v1h-1zM788 531h1v1h-1zM789 529h1v2h-1zM790 526h1v3h-1zM791 524h1v2h-1zM792 522h1v2h-1zM793 522h1v2h-1zM794 523h1v4h-1zM795 527h1v8h-1zM796 535h1v12h-1zM797 547h1v10h-1zM798 556h1v3h-1zM799 553h1v6h-1zM800 546h1v8h-1zM801 538h1v8h-1zM802 532h1v7h-1zM803 524h1v9h-1zM804 518h1v6h-1zM805 513h1v5h-1zM806 511h1v2h-1zM807 511h1v3h-1zM808 514h1v5h-1zM809 518h1v3h-1zM810 520h1v2h-1zM811 521h1v2h-1zM812 522h1v2h-1zM813 523h1v3h-1zM814 525h1v2h-1zM815 527h1v2h-1zM816 529h1v5h-1zM817 534h1v9h-1zM818 543h1v3h-1zM819 542h1v4h-1zM820 537h1v6h-1zM821 531h1v6h-1zM822 526h1v5h-1zM823 519h1v7h-1zM824 512h1v7h-1zM825 506h1v6h-1zM826 503h1v3h-1zM827 503h1v4h-1zM828 507h1v8h-1zM829 515h1v8h-1zM830 523h1v10h-1zM831 533h1v2h-1zM832 534h1v1h-1zM833 534h1v1h-1zM834 534h1v1h-1zM835 534h1v2h-1zM836 535h1v3h-1zM837 537h1v4h-1zM838 541h1v3h-1zM839 543h1v4h-1zM840 547h1v3h-1zM841 549h1v2h-1zM842 540h1v10h-1zM843 524h1v16h-1zM844 516h1v8h-1zM845 514h1v3h-1zM846 514h1v1h-1zM847 514h1v1h-1zM848 515h1v2h-1zM849 516h1v5h-1zM850 520h1v23h-1zM851 543h1v11h-1zM852 554h1v2h-1zM853 556h1v1h-1zM854 555h1v1h-1zM855 221h1v1h-1zM855 554h1v1h-1zM856 221h1v1h-1zM856 553h1v2h-1zM857 221h1v1h-1zM857 553h1v1h-1zM858 221h1v1h-1zM858 553h1v1h-1zM859 221h1v1h-1zM859 554h1v1h-1zM860 221h1v1h-1zM860 553h1v1h-1zM861 221h1v1h-1zM861 551h1v2h-1zM862 221h1v1h-1zM862 549h1v3h-1zM863 221h1v1h-1zM863 546h1v4h-1zM864 221h1v1h-1zM864 537h1v9h-1zM865 219h1v2h-1zM865 537h1v1h-1zM866 217h1v2h-1zM866 537h1v1h-1zM867 214h1v3h-1zM867 538h1v1h-1zM867 541h1v1h-1zM868 216h1v2h-1zM868 541h1v1h-1zM869 218h1v8h-1zM869 541h1v1h-1zM870 226h1v10h-1zM870 541h1v1h-1zM871 236h1v7h-1zM871 541h1v1h-1zM872 243h1v8h-1zM872 541h1v1h-1zM873 251h1v7h-1zM873 541h1v1h-1zM874 258h1v5h-1zM874 541h1v1h-1zM875 263h1v3h-1zM875 541h1v1h-1zM876 266h1v1h-1zM876 541h1v1h-1zM877 266h1v1h-1zM877 541h1v1h-1zM878 267h1v2h-1zM878 541h1v1h-1zM879 269h1v4h-1zM879 541h1v1h-1zM880 273h1v2h-1zM880 541h1v1h-1zM881 273h1v1h-1zM881 541h1v1h-1zM882 272h1v1h-1zM882 541h1v1h-1zM883 271h1v3h-1zM883 541h1v1h-1zM884 274h1v4h-1zM884 541h1v1h-1zM885 278h1v5h-1zM885 541h1v1h-1zM886 283h1v4h-1zM886 541h1v1h-1zM887 287h1v2h-1zM887 541h1v1h-1zM888 289h1v2h-1zM888 541h1v1h-1zM889 291h1v2h-1zM889 540h1v1h-1zM890 293h1v1h-1zM890 540h1v1h-1zM891 292h1v1h-1zM891 540h1v1h-1zM892 291h1v1h-1zM892 540h1v1h-1zM893 290h1v1h-1zM893 540h1v1h-1zM894 289h1v1h-1zM894 540h1v1h-1zM895 287h1v2h-1zM895 540h1v1h-1zM896 285h1v2h-1zM896 539h1v1h-1zM897 283h1v2h-1zM897 539h1v1h-1zM898 281h1v2h-1zM898 539h1v1h-1zM899 279h1v2h-1zM899 539h1v1h-1zM900 280h1v2h-1zM900 539h1v1h-1zM901 282h1v2h-1zM901 539h1v1h-1zM902 284h1v2h-1zM902 538h1v1h-1zM903 282h1v2h-1zM903 538h1v1h-1zM904 280h1v2h-1zM904 538h1v1h-1zM905 276h1v4h-1zM905 538h1v1h-1zM906 270h1v6h-1zM906 538h1v1h-1zM907 265h1v5h-1zM907 537h1v1h-1zM908 259h1v6h-1zM908 537h1v1h-1zM909 255h1v4h-1zM909 537h1v1h-1zM910 252h1v3h-1zM910 537h1v1h-1zM911 248h1v4h-1zM911 537h1v1h-1zM912 245h1v3h-1zM912 536h1v1h-1zM913 242h1v3h-1zM913 536h1v1h-1zM914 238h1v4h-1zM914 536h1v1h-1zM915 236h1v2h-1zM915 536h1v1h-1zM916 237h1v1h-1zM916 535h1v1h-1zM917 236h1v3h-1zM917 535h1v1h-1zM918 232h1v4h-1zM918 535h1v1h-1zM919 227h1v5h-1zM919 535h1v1h-1zM920 222h1v5h-1zM920 535h1v1h-1zM921 218h1v4h-1zM921 534h1v1h-1zM922 211h1v7h-1zM922 534h1v1h-1zM923 203h1v8h-1zM923 534h1v1h-1zM924 197h1v6h-1zM924 534h1v1h-1zM925 194h1v3h-1zM925 534h1v1h-1zM926 191h1v3h-1zM926 534h1v1h-1zM927 189h1v2h-1zM927 533h1v1h-1zM928 186h1v3h-1zM928 533h1v1h-1zM929 183h1v3h-1zM929 533h1v1h-1zM930 181h1v2h-1zM930 533h1v1h-1zM931 180h1v1h-1zM931 533h1v1h-1zM932 178h1v2h-1zM932 533h1v1h-1zM933 177h1v1h-1zM933 533h1v1h-1zM934 173h1v4h-1zM934 532h1v1h-1zM935 167h1v6h-1zM935 532h1v1h-1zM936 161h1v6h-1zM936 532h1v1h-1zM937 155h1v6h-1zM937 532h1v1h-1zM938 151h1v4h-1zM938 532h1v1h-1zM939 150h1v1h-1zM939 532h1v1h-1zM940 149h1v1h-1zM940 532h1v1h-1zM941 150h1v1h-1zM941 532h1v1h-1zM942 151h1v2h-1zM942 532h1v1h-1zM943 153h1v1h-1zM943 532h1v1h-1zM944 151h1v2h-1zM944 532h1v1h-1zM945 149h1v2h-1zM945 532h1v1h-1zM946 147h1v2h-1zM946 532h1v1h-1zM947 147h1v1h-1zM947 532h1v1h-1zM948 147h1v1h-1zM948 532h1v1h-1zM949 147h1v1h-1zM949 532h1v1h-1zM950 145h1v2h-1zM950 532h1v1h-1zM951 144h1v1h-1zM951 532h1v1h-1zM952 143h1v1h-1zM952 532h1v1h-1zM953 141h1v2h-1zM953 532h1v1h-1zM954 140h1v2h-1zM954 532h1v1h-1zM955 142h1v4h-1zM955 532h1v1h-1zM956 146h1v4h-1zM956 532h1v1h-1zM957 150h1v3h-1zM957 533h1v1h-1zM958 153h1v1h-1zM958 533h1v1h-1zM959 154h1v1h-1zM959 533h1v1h-1zM960 155h1v2h-1zM960 533h1v1h-1zM961 157h1v1h-1zM961 533h1v1h-1zM962 158h1v1h-1zM962 533h1v1h-1zM963 159h1v2h-1zM963 533h1v1h-1zM964 161h1v2h-1zM964 534h1v1h-1zM965 163h1v2h-1zM965 534h1v1h-1zM966 165h1v2h-1zM966 534h1v1h-1zM967 167h1v2h-1zM967 534h1v1h-1zM968 169h1v2h-1zM968 534h1v1h-1zM969 171h1v2h-1zM969 534h1v1h-1zM970 173h1v6h-1zM970 535h1v1h-1zM971 179h1v7h-1zM971 535h1v1h-1zM972 186h1v6h-1zM972 535h1v1h-1zM973 192h1v6h-1zM973 535h1v1h-1zM974 198h1v3h-1zM974 535h1v1h-1zM975 201h1v2h-1zM975 536h1v1h-1zM976 203h1v2h-1zM976 536h1v1h-1zM977 205h1v2h-1zM977 536h1v1h-1zM978 207h1v2h-1zM978 536h1v1h-1zM979 209h1v2h-1zM979 536h1v1h-1zM980 211h1v3h-1zM980 537h1v1h-1zM981 214h1v4h-1zM981 537h1v1h-1zM982 218h1v4h-1zM982 537h1v1h-1zM983 222h1v4h-1zM983 537h1v1h-1zM984 226h1v3h-1zM984 538h1v1h-1zM985 229h1v4h-1zM985 538h1v1h-1zM986 233h1v4h-1zM986 538h1v1h-1zM987 237h1v5h-1zM987 538h1v1h-1zM988 242h1v5h-1zM988 538h1v1h-1zM989 247h1v6h-1zM989 539h1v1h-1zM990 253h1v5h-1zM990 539h1v1h-1zM991 258h1v4h-1zM991 539h1v1h-1zM992 262h1v2h-1zM992 539h1v1h-1zM993 264h1v3h-1zM993 539h1v1h-1zM994 267h1v3h-1zM994 539h1v1h-1zM995 270h1v2h-1zM995 540h1v1h-1zM996 272h1v3h-1zM996 540h1v1h-1zM997 275h1v4h-1zM997 540h1v1h-1zM998 279h1v3h-1zM998 540h1v1h-1zM999 282h1v3h-1zM999 540h1v1h-1zM1000 285h1v4h-1zM1000 540h1v1h-1zM1001 289h1v3h-1zM1001 540h1v1h-1zM1002 292h1v2h-1zM1002 541h1v1h-1zM1003 294h1v3h-1zM1003 541h1v1h-1zM1004 297h1v3h-1zM1004 541h1v1h-1zM1005 300h1v2h-1zM1005 541h1v1h-1zM1006 302h1v2h-1zM1006 541h1v1h-1zM1007 302h1v1h-1zM1007 541h1v1h-1zM1008 302h1v1h-1zM1008 541h1v1h-1zM1009 303h1v1h-1zM1009 541h1v1h-1zM1010 304h1v1h-1zM1010 541h1v1h-1zM1011 304h1v1h-1zM1011 541h1v1h-1zM1012 305h1v1h-1zM1012 541h1v1h-1zM1013 306h1v1h-1zM1013 541h1v1h-1zM1014 307h1v1h-1zM1014 541h1v1h-1zM1015 307h1v1h-1zM1015 541h1v1h-1zM1016 308h1v1h-1zM1016 541h1v1h-1zM1017 307h1v1h-1zM1017 541h1v1h-1zM1018 307h1v1h-1zM1018 541h1v1h-1zM1019 306h1v1h-1zM1019 541h1v1h-1zM1020 306h1v1h-1zM1020 541h1v1h-1zM1021 304h1v2h-1zM1021 541h1v1h-1zM1022 301h1v3h-1zM1022 541h1v1h-1zM1023 298h1v3h-1zM1023 541h1v1h-1zM1024 295h1v3h-1zM1024 541h1v1h-1zM1025 292h1v3h-1zM1025 540h1v1h-1zM1026 290h1v2h-1zM1026 540h1v1h-1zM1027 289h1v1h-1zM1027 540h1v1h-1zM1028 288h1v1h-1zM1028 540h1v1h-1zM1029 287h1v1h-1zM1029 540h1v1h-1zM1030 285h1v2h-1zM1030 540h1v1h-1zM1031 282h1v3h-1zM1031 540h1v1h-1zM1032 279h1v3h-1zM1032 539h1v1h-1zM1033 275h1v4h-1zM1033 539h1v1h-1zM1034 272h1v3h-1zM1034 539h1v1h-1zM1035 269h1v3h-1zM1035 539h1v1h-1zM1036 265h1v4h-1zM1036 539h1v1h-1zM1037 259h1v6h-1zM1037 539h1v1h-1zM1038 254h1v5h-1zM1038 538h1v1h-1zM1039 248h1v6h-1zM1039 538h1v1h-1zM1040 244h1v4h-1zM1040 538h1v1h-1zM1041 241h1v3h-1zM1041 538h1v1h-1zM1042 238h1v3h-1zM1042 538h1v1h-1zM1043 235h1v3h-1zM1043 537h1v1h-1zM1044 232h1v3h-1zM1044 537h1v1h-1zM1045 229h1v3h-1zM1045 537h1v1h-1zM1046 226h1v3h-1zM1046 537h1v1h-1zM1047 223h1v3h-1zM1047 536h1v1h-1zM1048 218h1v5h-1zM1048 536h1v1h-1zM1049 212h1v6h-1zM1049 536h1v1h-1zM1050 206h1v6h-1zM1050 536h1v1h-1zM1051 202h1v4h-1zM1051 536h1v1h-1zM1052 197h1v5h-1zM1052 535h1v1h-1zM1053 193h1v4h-1zM1053 535h1v1h-1zM1054 189h1v4h-1zM1054 535h1v1h-1zM1055 186h1v3h-1zM1055 535h1v1h-1zM1056 182h1v4h-1zM1056 535h1v1h-1zM1057 179h1v3h-1zM1057 534h1v1h-1zM1058 176h1v3h-1zM1058 534h1v1h-1zM1059 172h1v4h-1zM1059 534h1v1h-1zM1060 169h1v3h-1zM1060 534h1v1h-1zM1061 165h1v4h-1zM1061 534h1v1h-1zM1062 162h1v3h-1zM1062 534h1v1h-1zM1063 159h1v3h-1zM1063 533h1v1h-1zM1064 155h1v4h-1zM1064 533h1v1h-1zM1065 152h1v3h-1zM1065 533h1v1h-1zM1066 149h1v3h-1zM1066 533h1v1h-1zM1067 146h1v3h-1zM1067 533h1v1h-1zM1068 144h1v2h-1zM1068 533h1v1h-1zM1069 141h1v3h-1zM1069 533h1v1h-1zM1070 139h1v2h-1zM1070 532h1v1h-1zM1071 138h1v1h-1zM1071 532h1v1h-1zM1072 137h1v1h-1zM1072 532h1v1h-1zM1073 136h1v1h-1zM1073 532h1v1h-1zM1074 135h1v1h-1zM1074 532h1v1h-1zM1075 134h1v1h-1zM1075 532h1v1h-1zM1076 133h1v1h-1zM1076 532h1v1h-1zM1077 132h1v1h-1zM1077 532h1v1h-1zM1078 131h1v1h-1zM1078 532h1v1h-1zM1079 130h1v1h-1zM1079 532h1v1h-1zM1080 129h1v1h-1zM1080 532h1v1h-1zM1081 128h1v1h-1zM1081 532h1v1h-1zM1082 128h1v1h-1zM1082 532h1v1h-1zM1083 129h1v1h-1zM1083 532h1v1h-1zM1084 130h1v1h-1zM1084 532h1v1h-1zM1085 131h1v2h-1zM1085 532h1v1h-1zM1086 133h1v1h-1zM1086 532h1v1h-1zM1087 134h1v1h-1zM1087 532h1v1h-1zM1088 135h1v2h-1zM1088 532h1v1h-1zM1089 137h1v2h-1zM1089 532h1v1h-1zM1090 139h1v2h-1zM1090 532h1v1h-1zM1091 141h1v1h-1zM1091 532h1v1h-1zM1092 142h1v1h-1zM1092 532h1v1h-1zM1093 143h1v2h-1zM1093 533h1v1h-1zM1094 145h1v1h-1zM1094 533h1v1h-1zM1095 146h1v2h-1zM1095 533h1v1h-1zM1096 148h1v2h-1zM1096 533h1v1h-1zM1097 150h1v3h-1zM1097 533h1v1h-1zM1098 153h1v4h-1zM1098 533h1v1h-1zM1099 157h1v4h-1zM1099 533h1v1h-1zM1100 161h1v4h-1zM1100 534h1v1h-1zM1101 165h1v3h-1zM1101 534h1v1h-1zM1102 168h1v3h-1zM1102 534h1v1h-1zM1103 171h1v3h-1zM1103 534h1v1h-1zM1104 174h1v4h-1zM1104 534h1v1h-1zM1105 178h1v3h-1zM1105 534h1v1h-1zM1106 181h1v3h-1zM1106 535h1v1h-1zM1107 184h1v4h-1zM1107 535h1v1h-1zM1108 188h1v4h-1zM1108 535h1v1h-1zM1109 192h1v5h-1zM1109 535h1v1h-1zM1110 197h1v6h-1zM1110 535h1v1h-1zM1111 203h1v4h-1zM1111 536h1v1h-1zM1112 207h1v4h-1zM1112 536h1v1h-1zM1113 211h1v4h-1zM1113 536h1v1h-1zM1114 215h1v4h-1zM1114 536h1v1h-1zM1115 219h1v5h-1zM1115 537h1v1h-1zM1116 224h1v6h-1zM1116 537h1v1h-1zM1117 230h1v5h-1zM1117 537h1v1h-1zM1118 235h1v3h-1zM1118 537h1v1h-1zM1119 238h1v3h-1zM1119 537h1v1h-1zM1120 241h1v3h-1zM1120 538h1v1h-1zM1121 244h1v3h-1zM1121 538h1v1h-1zM1122 247h1v3h-1zM1122 538h1v1h-1zM1123 250h1v3h-1zM1123 538h1v1h-1zM1124 253h1v4h-1zM1124 538h1v1h-1zM1125 257h1v3h-1zM1125 539h1v1h-1zM1126 260h1v4h-1zM1126 539h1v1h-1zM1127 264h1v4h-1zM1127 539h1v1h-1zM1128 268h1v4h-1zM1128 539h1v1h-1zM1129 272h1v4h-1zM1129 539h1v1h-1zM1130 276h1v4h-1zM1130 539h1v1h-1zM1131 280h1v4h-1zM1131 540h1v1h-1zM1132 284h1v4h-1zM1132 540h1v1h-1zM1133 288h1v3h-1zM1133 540h1v1h-1zM1134 291h1v2h-1zM1134 540h1v1h-1zM1135 293h1v3h-1zM1135 540h1v1h-1zM1136 296h1v2h-1zM1136 540h1v1h-1zM1137 298h1v2h-1zM1137 540h1v1h-1zM1138 300h1v2h-1zM1138 541h1v1h-1zM1139 302h1v2h-1zM1139 541h1v1h-1zM1140 304h1v2h-1zM1140 541h1v1h-1zM1141 306h1v2h-1zM1141 541h1v1h-1zM1142 308h1v2h-1zM1142 541h1v1h-1zM1143 310h1v2h-1zM1143 541h1v1h-1zM1144 312h1v1h-1zM1144 541h1v1h-1zM1145 313h1v1h-1zM1145 541h1v1h-1zM1146 313h1v1h-1zM1146 541h1v1h-1zM1147 314h1v1h-1zM1147 541h1v1h-1zM1148 314h1v1h-1zM1148 541h1v1h-1zM1149 314h1v1h-1zM1149 541h1v1h-1zM1150 314h1v1h-1zM1150 541h1v1h-1zM1151 313h1v1h-1zM1151 541h1v1h-1zM1152 313h1v1h-1zM1152 541h1v1h-1zM1153 313h1v1h-1zM1153 541h1v1h-1zM1154 313h1v1h-1zM1154 541h1v1h-1zM1155 312h1v1h-1zM1155 541h1v1h-1zM1156 311h1v1h-1zM1156 541h1v1h-1zM1157 309h1v2h-1zM1157 541h1v1h-1zM1158 308h1v1h-1zM1158 541h1v1h-1zM1159 306h1v2h-1zM1159 541h1v1h-1zM1160 304h1v2h-1zM1160 541h1v1h-1zM1161 301h1v3h-1zM1161 540h1v1h-1zM1162 299h1v2h-1zM1162 540h1v1h-1zM1163 296h1v3h-1zM1163 540h1v1h-1zM1164 293h1v3h-1zM1164 540h1v1h-1zM1165 290h1v3h-1zM1165 540h1v1h-1zM1166 287h1v3h-1zM1166 540h1v1h-1zM1167 284h1v3h-1zM1167 540h1v1h-1zM1168 281h1v3h-1zM1168 539h1v1h-1zM1169 277h1v4h-1zM1169 539h1v1h-1zM1170 274h1v3h-1zM1170 539h1v1h-1zM1171 270h1v4h-1zM1171 539h1v1h-1zM1172 267h1v3h-1zM1172 539h1v1h-1zM1173 263h1v4h-1zM1173 539h1v1h-1zM1174 259h1v4h-1zM1174 538h1v1h-1zM1175 255h1v4h-1zM1175 538h1v1h-1zM1176 250h1v5h-1zM1176 538h1v1h-1zM1177 246h1v4h-1zM1177 538h1v1h-1zM1178 242h1v4h-1zM1178 538h1v1h-1zM1179 238h1v4h-1zM1179 537h1v1h-1zM1180 233h1v5h-1zM1180 537h1v1h-1zM1181 229h1v4h-1zM1181 537h1v1h-1zM1182 224h1v5h-1zM1182 537h1v1h-1zM1183 220h1v4h-1zM1183 536h1v1h-1zM1184 216h1v4h-1zM1184 536h1v1h-1zM1185 211h1v5h-1zM1185 536h1v1h-1zM1186 207h1v4h-1zM1186 536h1v1h-1zM1187 202h1v5h-1zM1187 536h1v1h-1zM1188 198h1v4h-1zM1188 535h1v1h-1zM1189 193h1v5h-1zM1189 535h1v1h-1zM1190 189h1v4h-1zM1190 535h1v1h-1zM1191 184h1v5h-1zM1191 535h1v1h-1zM1192 180h1v4h-1zM1192 535h1v1h-1zM1193 176h1v4h-1zM1193 534h1v1h-1zM1194 172h1v4h-1zM1194 534h1v1h-1zM1195 168h1v4h-1zM1195 534h1v1h-1zM1196 164h1v4h-1zM1196 534h1v1h-1zM1197 160h1v4h-1zM1197 534h1v1h-1zM1198 156h1v4h-1zM1198 534h1v1h-1zM1199 153h1v3h-1zM1199 533h1v1h-1zM1200 149h1v4h-1zM1200 533h1v1h-1zM1201 146h1v3h-1zM1201 533h1v1h-1zM1202 143h1v3h-1zM1202 533h1v1h-1zM1203 141h1v2h-1zM1203 533h1v1h-1zM1204 139h1v2h-1zM1204 533h1v1h-1zM1205 136h1v3h-1zM1205 533h1v1h-1zM1206 134h1v2h-1zM1206 532h1v1h-1zM1207 133h1v1h-1zM1207 532h1v1h-1zM1208 131h1v2h-1zM1208 532h1v1h-1zM1209 129h1v2h-1zM1209 532h1v1h-1zM1210 128h1v1h-1zM1210 532h1v1h-1zM1211 127h1v1h-1zM1211 532h1v1h-1zM1212 127h1v1h-1zM1212 532h1v1h-1zM1213 126h1v1h-1zM1213 532h1v1h-1zM1214 126h1v1h-1zM1214 532h1v1h-1zM1215 126h1v1h-1zM1215 532h1v1h-1zM1216 126h1v1h-1zM1216 532h1v1h-1zM1217 126h1v1h-1zM1217 532h1v1h-1zM1218 127h1v1h-1zM1218 532h1v1h-1zM1219 128h1v1h-1zM1219 532h1v1h-1zM1220 129h1v1h-1zM1220 532h1v1h-1zM1221 130h1v1h-1zM1221 532h1v1h-1zM1222 131h1v1h-1zM1222 532h1v1h-1zM1223 132h1v2h-1zM1223 532h1v1h-1zM1224 134h1v1h-1zM1224 532h1v1h-1zM1225 135h1v2h-1zM1225 532h1v1h-1zM1226 137h1v2h-1zM1226 532h1v1h-1zM1227 139h1v2h-1zM1227 532h1v1h-1zM1228 141h1v2h-1zM1228 532h1v1h-1zM1229 143h1v3h-1zM1229 533h1v1h-1zM1230 146h1v2h-1zM1230 533h1v1h-1zM1231 148h1v3h-1zM1231 533h1v1h-1zM1232 151h1v3h-1zM1232 533h1v1h-1zM1233 154h1v2h-1zM1233 533h1v1h-1zM1234 156h1v3h-1zM1234 533h1v1h-1zM1235 159h1v3h-1zM1235 533h1v1h-1zM1236 162h1v3h-1zM1236 534h1v1h-1zM1237 165h1v4h-1zM1237 534h1v1h-1zM1238 169h1v3h-1zM1238 534h1v1h-1zM1239 172h1v3h-1zM1239 534h1v1h-1zM1240 175h1v4h-1zM1240 534h1v1h-1zM1241 179h1v3h-1zM1241 534h1v1h-1zM1242 182h1v4h-1zM1242 535h1v1h-1zM1243 186h1v4h-1zM1243 535h1v1h-1zM1244 190h1v4h-1zM1244 535h1v1h-1zM1245 194h1v4h-1zM1245 535h1v1h-1zM1246 198h1v4h-1zM1246 535h1v1h-1zM1247 202h1v4h-1zM1247 536h1v1h-1zM1248 206h1v4h-1zM1248 536h1v1h-1zM1249 210h1v5h-1zM1249 536h1v1h-1zM1250 215h1v4h-1zM1250 536h1v1h-1zM1251 219h1v4h-1zM1251 537h1v1h-1zM1252 223h1v5h-1zM1252 537h1v1h-1zM1253 228h1v4h-1zM1253 537h1v1h-1zM1254 232h1v4h-1zM1254 537h1v1h-1zM1255 236h1v5h-1zM1255 537h1v1h-1zM1256 241h1v4h-1zM1256 538h1v1h-1zM1257 245h1v4h-1zM1257 538h1v1h-1zM1258 249h1v4h-1zM1258 538h1v1h-1zM1259 253h1v4h-1zM1259 538h1v1h-1zM1260 257h1v4h-1zM1260 538h1v1h-1zM1261 261h1v4h-1zM1261 539h1v1h-1zM1262 265h1v4h-1zM1262 539h1v1h-1zM1263 269h1v3h-1zM1263 539h1v1h-1z" fill="#ff00ff"/>
<path d="M40 121h1v1h-1zM40 532h1v1h-1zM41 121h1v1h-1zM41 532h1v1h-1zM42 122h1v1h-1zM42 532h1v1h-1zM43 122h1v1h-1zM43 532h1v1h-1zM44 123h1v1h-1zM44 532h1v1h-1zM45 124h1v2h-1zM45 532h1v1h-1zM46 126h1v1h-1zM46 532h1v1h-1zM47 127h1v1h-1zM47 532h1v1h-1zM48 128h1v2h-1zM48 532h1v1h-1zM49 130h1v2h-1zM49 532h1v1h-1zM50 132h1v2h-1zM50 532h1v1h-1zM51 134h1v3h-1zM51 533h1v1h-1zM52 137h1v3h-1zM52 533h1v1h-1zM53 140h1v2h-1zM53 533h1v1h-1zM54 142h1v3h-1zM54 533h1v1h-1zM55 145h1v3h-1zM55 533h1v1h-1zM56 148h1v3h-1zM56 533h1v1h-1zM57 151h1v4h-1zM57 533h1v1h-1zM58 155h1v3h-1zM58 534h1v1h-1zM59 158h1v3h-1zM59 534h1v1h-1zM60 161h1v4h-1zM60 534h1v1h-1zM61 165h1v4h-1zM61 534h1v1h-1zM62 169h1v4h-1zM62 534h1v1h-1zM63 173h1v4h-1zM63 534h1v1h-1zM64 177h1v4h-1zM64 535h1v1h-1zM65 181h1v4h-1zM65 535h1v1h-1zM66 185h1v4h-1zM66 535h1v1h-1zM67 189h1v4h-1zM67 535h1v1h-1zM68 193h1v5h-1zM68 535h1v1h-1zM69 198h1v4h-1zM69 536h1v1h-1zM70 202h1v5h-1zM70 536h1v1h-1zM71 207h1v4h-1zM71 536h1v1h-1zM72 211h1v4h-1zM72 536h1v1h-1zM73 215h1v5h-1zM73 536h1v1h-1zM74 220h1v4h-1zM74 537h1v1h-1zM75 224h1v5h-1zM75 537h1v1h-1zM76 229h1v4h-1zM76 537h1v1h-1zM77 233h1v4h-1zM77 537h1v1h-1zM78 237h1v5h-1zM78 538h1v1h-1zM79 242h1v4h-1zM79 538h1v1h-1zM80 246h1v4h-1zM80 538h1v1h-1zM81 250h1v4h-1zM81 538h1v1h-1zM82 254h1v4h-1zM82 538h1v1h-1zM83 258h1v4h-1zM83 539h1v1h-1zM84 262h1v4h-1zM84 539h1v1h-1zM85 266h1v4h-1zM85 539h1v1h-1zM86 270h1v4h-1zM86 539h1v1h-1zM87 274h1v3h-1zM87 539h1v1h-1zM88 277h1v4h-1zM88 539h1v1h-1zM89 281h1v3h-1zM89 540h1v1h-1zM90 284h1v3h-1zM90 540h1v1h-1zM91 287h1v3h-1zM91 540h1v1h-1zM92 290h1v3h-1zM92 540h1v1h-1zM93 293h1v3h-1zM93 540h1v1h-1zM94 296h1v2h-1zM94 540h1v1h-1zM95 298h1v2h-1zM95 540h1v1h-1zM96 300h1v3h-1zM96 541h1v1h-1zM97 303h1v2h-1zM97 541h1v1h-1zM98 305h1v1h-1zM98 541h1v1h-1zM99 306h1v2h-1zM99 541h1v1h-1zM100 308h1v2h-1zM100 541h1v1h-1zM101 310h1v1h-1zM101 541h1v1h-1zM102 311h1v1h-1zM102 541h1v1h-1zM103 312h1v1h-1zM103 541h1v1h-1zM104 313h1v1h-1zM104 541h1v1h-1zM105 313h1v1h-1zM105 541h1v1h-1zM106 314h1v1h-1zM106 541h1v1h-1zM107 314h1v1h-1zM107 541h1v1h-1zM108 314h1v1h-1zM108 541h1v1h-1zM109 314h1v1h-1zM109 541h1v1h-1zM110 313h1v1h-1zM110 541h1v1h-1zM111 312h1v1h-1zM111 541h1v1h-1zM112 311h1v1h-1zM112 541h1v1h-1zM113 310h1v1h-1zM113 541h1v1h-1zM114 309h1v1h-1zM114 541h1v1h-1zM115 308h1v1h-1zM115 541h1v1h-1zM116 306h1v2h-1zM116 541h1v1h-1zM117 304h1v2h-1zM117 541h1v1h-1zM118 302h1v2h-1zM118 541h1v1h-1zM119 300h1v2h-1zM119 540h1v1h-1zM120 297h1v3h-1zM120 540h1v1h-1zM121 294h1v3h-1zM121 540h1v1h-1zM122 291h1v3h-1zM122 540h1v1h-1zM123 288h1v3h-1zM123 540h1v1h-1zM124 285h1v3h-1zM124 540h1v1h-1zM125 282h1v3h-1zM125 540h1v1h-1zM126 279h1v3h-1zM126 539h1v1h-1zM127 276h1v3h-1zM127 539h1v1h-1zM128 272h1v4h-1zM128 539h1v1h-1zM129 268h1v4h-1zM129 539h1v1h-1zM130 265h1v3h-1zM130 539h1v1h-1zM131 261h1v4h-1zM131 539h1v1h-1zM132 257h1v4h-1zM132 538h1v1h-1zM133 253h1v4h-1zM133 538h1v1h-1zM134 248h1v5h-1zM134 538h1v1h-1zM135 244h1v4h-1zM135 538h1v1h-1zM136 240h1v4h-1zM136 538h1v1h-1zM137 236h1v4h-1zM137 537h1v1h-1zM138 231h1v5h-1zM138 537h1v1h-1zM139 227h1v4h-1zM139 537h1v1h-1zM140 223h1v4h-1zM140 537h1v1h-1zM141 218h1v5h-1zM141 536h1v1h-1zM142 214h1v4h-1zM142 536h1v1h-1zM143 209h1v5h-1zM143 536h1v1h-1zM144 205h1v4h-1zM144 536h1v1h-1zM145 201h1v4h-1zM145 536h1v1h-1zM146 197h1v4h-1zM146 535h1v1h-1zM147 193h1v4h-1zM147 535h1v1h-1zM148 188h1v5h-1zM148 535h1v1h-1zM149 184h1v4h-1zM149 535h1v1h-1zM150 180h1v4h-1zM150 535h1v1h-1zM151 176h1v4h-1zM151 534h1v1h-1zM152 173h1v3h-1zM152 534h1v1h-1zM153 169h1v4h-1zM153 534h1v1h-1zM154 165h1v4h-1zM154 534h1v1h-1zM155 162h1v3h-1zM155 534h1v1h-1zM156 158h1v4h-1zM156 534h1v1h-1zM157 155h1v3h-1zM157 533h1v1h-1zM158 152h1v3h-1zM158 533h1v1h-1zM159 149h1v3h-1zM159 533h1v1h-1zM160 146h1v3h-1zM160 533h1v1h-1zM161 144h1v2h-1zM161 533h1v1h-1zM162 141h1v3h-1zM162 533h1v1h-1zM163 139h1v2h-1zM163 533h1v1h-1zM164 137h1v2h-1zM164 532h1v1h-1zM165 135h1v2h-1zM165 532h1v1h-1zM166 133h1v2h-1zM166 532h1v1h-1zM167 132h1v1h-1zM167 532h1v1h-1zM168 130h1v2h-1zM168 532h1v1h-1zM169 129h1v1h-1zM169 532h1v1h-1zM170 128h1v1h-1zM170 532h1v1h-1zM171 127h1v1h-1zM171 532h1v1h-1zM172 126h1v1h-1zM172 532h1v1h-1zM173 126h1v1h-1zM173 532h1v1h-1zM174 126h1v1h-1zM174 532h1v1h-1zM175 126h1v1h-1zM175 532h1v1h-1zM176 126h1v1h-1zM176 532h1v1h-1zM177 126h1v1h-1zM177 532h1v1h-1zM178 127h1v1h-1zM178 532h1v1h-1zM179 127h1v1h-1zM179 532h1v1h-1zM180 128h1v1h-1zM180 532h1v1h-1zM181 129h1v1h-1zM181 532h1v1h-1zM182 130h1v2h-1zM182 532h1v1h-1zM183 132h1v1h-1zM183 532h1v1h-1zM184 133h1v2h-1zM184 532h1v1h-1zM185 135h1v2h-1zM185 532h1v1h-1zM186 137h1v2h-1zM186 532h1v1h-1zM187 139h1v3h-1zM187 533h1v1h-1zM188 142h1v2h-1zM188 533h1v1h-1zM189 144h1v3h-1zM189 533h1v1h-1zM190 147h1v3h-1zM190 533h1v1h-1zM191 150h1v3h-1zM191 533h1v1h-1zM192 153h1v3h-1zM192 533h1v1h-1zM193 156h1v3h-1zM193 533h1v1h-1zM194 159h1v3h-1zM194 534h1v1h-1zM195 162h1v4h-1zM195 534h1v1h-1zM196 166h1v4h-1zM196 534h1v1h-1zM197 170h1v3h-1zM197 534h1v1h-1zM198 173h1v4h-1zM198 534h1v1h-1zM199 177h1v4h-1zM199 534h1v1h-1zM200 181h1v4h-1zM200 535h1v1h-1zM201 185h1v4h-1zM201 535h1v1h-1zM202 189h1v4h-1zM202 535h1v1h-1zM203 193h1v5h-1zM203 535h1v1h-1zM204 198h1v4h-1zM204 535h1v1h-1zM205 202h1v4h-1zM205 536h1v1h-1zM206 206h1v5h-1zM206 536h1v1h-1zM207 211h1v4h-1zM207 536h1v1h-1zM208 215h1v4h-1zM208 536h1v1h-1zM209 219h1v5h-1zM209 537h1v1h-1zM210 224h1v4h-1zM210 537h1v1h-1zM211 228h1v4h-1zM211 537h1v1h-1zM212 232h1v5h-1zM212 537h1v1h-1zM213 237h1v4h-1zM213 537h1v1h-1zM214 241h1v4h-1zM214 538h1v1h-1zM215 245h1v4h-1zM215 538h1v1h-1zM216 249h1v5h-1zM216 538h1v1h-1zM217 254h1v4h-1zM217 538h1v1h-1zM218 258h1v4h-1zM218 538h1v1h-1zM219 262h1v4h-1zM219 539h1v1h-1zM220 266h1v3h-1zM220 539h1v1h-1zM221 269h1v4h-1zM221 539h1v1h-1zM222 273h1v4h-1zM222 539h1v1h-1zM223 277h1v3h-1zM223 539h1v1h-1zM224 280h1v4h-1zM224 539h1v1h-1zM225 284h1v3h-1zM225 540h1v1h-1zM226 287h1v3h-1zM226 540h1v1h-1zM227 290h1v3h-1zM227 540h1v1h-1zM228 293h1v3h-1zM228 540h1v1h-1zM229 296h1v2h-1zM229 540h1v1h-1zM230 298h1v3h-1zM230 540h1v1h-1zM231 301h1v2h-1zM231 540h1v1h-1zM232 303h1v2h-1zM232 541h1v1h-1zM233 305h1v2h-1zM233 541h1v1h-1zM234 307h1v2h-1zM234 541h1v1h-1zM235 309h1v1h-1zM235 541h1v1h-1zM236 310h1v2h-1zM236 541h1v1h-1zM237 312h1v1h-1zM237 541h1v1h-1zM238 313h1v1h-1zM238 541h1v1h-1zM239 314h1v1h-1zM239 541h1v1h-1zM240 314h1v1h-1zM240 541h1v1h-1zM241 315h1v1h-1zM241 541h1v1h-1zM242 315h1v1h-1zM242 541h1v1h-1zM243 315h1v1h-1zM243 541h1v1h-1zM244 315h1v1h-1zM244 541h1v1h-1zM245 315h1v1h-1zM245 541h1v1h-1zM246 314h1v1h-1zM246 541h1v1h-1zM247 313h1v1h-1zM247 541h1v1h-1zM248 312h1v1h-1zM248 541h1v1h-1zM249 311h1v1h-1zM249 541h1v1h-1zM250 310h1v1h-1zM250 541h1v1h-1zM251 308h1v2h-1zM251 541h1v1h-1zM252 306h1v2h-1zM252 541h1v1h-1zM253 304h1v2h-1zM253 541h1v1h-1zM254 302h1v2h-1zM254 540h1v1h-1zM255 300h1v2h-1zM255 540h1v1h-1zM256 297h1v3h-1zM256 540h1v1h-1zM257 294h1v3h-1zM257 540h1v1h-1zM258 291h1v3h-1zM258 540h1v1h-1zM259 288h1v3h-1zM259 540h1v1h-1zM260 285h1v3h-1zM260 540h1v1h-1zM261 282h1v3h-1zM261 540h1v1h-1zM262 279h1v3h-1zM262 539h1v1h-1zM263 275h1v4h-1zM263 539h1v1h-1zM264 272h1v3h-1zM264 539h1v1h-1zM265 268h1v4h-1zM265 539h1v1h-1zM266 264h1v4h-1zM266 539h1v1h-1zM267 260h1v4h-1zM267 538h1v1h-1zM268 256h1v4h-1zM268 538h1v1h-1zM269 252h1v4h-1zM269 538h1v1h-1zM270 248h1v4h-1zM270 538h1v1h-1zM271 243h1v5h-1zM271 538h1v1h-1zM272 239h1v4h-1zM272 537h1v1h-1zM273 235h1v4h-1zM273 537h1v1h-1zM274 230h1v5h-1zM274 537h1v1h-1zM275 226h1v4h-1zM275 537h1v1h-1zM276 222h1v4h-1zM276 537h1v1h-1zM277 217h1v5h-1zM277 536h1v1h-1zM278 213h1v4h-1zM278 536h1v1h-1zM279 209h1v4h-1zM279 536h1v1h-1zM280 204h1v5h-1zM280 536h1v1h-1zM281 200h1v4h-1zM281 536h1v1h-1zM282 196h1v4h-1zM282 535h1v1h-1zM283 192h1v4h-1zM283 535h1v1h-1zM284 188h1v4h-1zM284 535h1v1h-1zM285 184h1v4h-1zM285 535h1v1h-1zM286 180h1v4h-1zM286 535h1v1h-1zM287 176h1v4h-1zM287 534h1v1h-1zM288 172h1v4h-1zM288 534h1v1h-1zM289 168h1v4h-1zM289 534h1v1h-1zM290 164h1v4h-1zM290 534h1v1h-1zM291 161h1v3h-1zM291 534h1v1h-1zM292 158h1v3h-1zM292 533h1v1h-1zM293 154h1v4h-1zM293 533h1v1h-1zM294 151h1v3h-1zM294 533h1v1h-1zM295 148h1v3h-1zM295 533h1v1h-1zM296 146h1v2h-1zM296 533h1v1h-1zM297 143h1v3h-1zM297 533h1v1h-1zM298 141h1v2h-1zM298 533h1v1h-1zM299 139h1v2h-1zM299 533h1v1h-1zM300 137h1v2h-1zM300 532h1v1h-1zM301 135h1v2h-1zM301 532h1v1h-1zM302 133h1v2h-1zM302 532h1v1h-1zM303 131h1v2h-1zM303 532h1v1h-1zM304 130h1v1h-1zM304 532h1v1h-1zM305 129h1v1h-1zM305 532h1v1h-1zM306 128h1v1h-1zM306 532h1v1h-1zM307 127h1v1h-1zM307 532h1v1h-1zM308 126h1v1h-1zM308 532h1v1h-1zM309 126h1v1h-1zM309 532h1v1h-1zM310 126h1v1h-1zM310 532h1v1h-1zM311 126h1v1h-1zM311 532h1v1h-1zM312 126h1v1h-1zM312 532h1v1h-1zM313 126h1v1h-1zM313 532h1v1h-1zM314 127h1v1h-1zM314 532h1v1h-1zM315 128h1v1h-1zM315 532h1v1h-1zM316 129h1v1h-1zM316 532h1v1h-1zM317 130h1v1h-1zM317 532h1v1h-1zM318 131h1v1h-1zM318 532h1v1h-1zM319 132h1v2h-1zM319 532h1v1h-1zM320 134h1v2h-1zM320 532h1v1h-1zM321 136h1v2h-1zM321 532h1v1h-1zM322 138h1v2h-1zM322 533h1v1h-1zM323 140h1v3h-1zM323 533h1v1h-1zM324 143h1v2h-1zM324 533h1v1h-1zM325 145h1v3h-1zM325 533h1v1h-1zM326 148h1v3h-1zM326 533h1v1h-1zM327 151h1v3h-1zM327 533h1v1h-1zM328 154h1v3h-1zM328 533h1v1h-1zM329 157h1v3h-1zM329 533h1v1h-1zM330 160h1v4h-1zM330 534h1v1h-1zM331 164h1v3h-1zM331 534h1v1h-1zM332 167h1v4h-1zM332 534h1v1h-1zM333 171h1v4h-1zM333 534h1v1h-1zM334 175h1v3h-1zM334 534h1v1h-1zM335 178h1v4h-1zM335 535h1v1h-1zM336 182h1v5h-1zM336 535h1v1h-1zM337 187h1v4h-1zM337 535h1v1h-1zM338 191h1v4h-1zM338 535h1v1h-1zM339 195h1v4h-1zM339 535h1v1h-1zM340 199h1v4h-1zM340 536h1v1h-1zM341 203h1v5h-1zM341 536h1v1h-1zM342 208h1v4h-1zM342 536h1v1h-1zM343 212h1v5h-1zM343 536h1v1h-1zM344 217h1v4h-1zM344 536h1v1h-1zM345 221h1v4h-1zM345 537h1v1h-1zM346 225h1v5h-1zM346 537h1v1h-1zM347 230h1v4h-1zM347 537h1v1h-1zM348 234h1v4h-1zM348 537h1v1h-1zM349 238h1v5h-1zM349 537h1v1h-1zM350 243h1v4h-1zM350 538h1v1h-1zM351 247h1v4h-1zM351 538h1v1h-1zM352 251h1v4h-1zM352 538h1v1h-1zM353 255h1v4h-1zM353 538h1v1h-1zM354 259h1v4h-1zM354 538h1v1h-1zM355 263h1v4h-1zM355 539h1v1h-1zM356 267h1v4h-1zM356 539h1v1h-1zM357 271h1v4h-1zM357 539h1v1h-1zM358 275h1v3h-1zM358 539h1v1h-1zM359 278h1v4h-1zM359 539h1v1h-1zM360 282h1v3h-1zM360 540h1v1h-1zM361 285h1v3h-1zM361 540h1v1h-1zM362 288h1v3h-1zM362 540h1v1h-1zM363 291h1v3h-1zM363 540h1v1h-1zM364 294h1v3h-1zM364 540h1v1h-1zM365 297h1v2h-1zM365 540h1v1h-1zM366 299h1v2h-1zM366 540h1v1h-1zM367 301h1v2h-1zM367 540h1v1h-1zM368 303h1v2h-1zM368 541h1v1h-1zM369 305h1v2h-1zM369 541h1v1h-1zM370 307h1v2h-1zM370 541h1v1h-1zM371 309h1v2h-1zM371 541h1v1h-1zM372 311h1v1h-1zM372 541h1v1h-1zM373 312h1v1h-1zM373 541h1v1h-1zM374 313h1v1h-1zM374 541h1v1h-1zM375 314h1v1h-1zM375 541h1v1h-1zM376 315h1v1h-1zM376 541h1v1h-1zM377 315h1v1h-1zM377 541h1v1h-1zM378 315h1v1h-1zM378 541h1v1h-1zM379 315h1v1h-1zM379 541h1v1h-1zM380 315h1v1h-1zM380 541h1v1h-1zM381 314h1v1h-1zM381 541h1v1h-1zM382 314h1v1h-1zM382 541h1v1h-1zM383 313h1v1h-1zM383 541h1v1h-1zM384 312h1v1h-1zM384 541h1v1h-1zM385 311h1v1h-1zM385 541h1v1h-1zM386 309h1v2h-1zM386 541h1v1h-1zM387 308h1v1h-1zM387 541h1v1h-1zM388 306h1v2h-1zM388 541h1v1h-1zM389 304h1v2h-1zM389 541h1v1h-1zM390 301h1v3h-1zM390 540h1v1h-1zM391 299h1v2h-1zM391 540h1v1h-1zM392 296h1v3h-1zM392 540h1v1h-1zM393 293h1v3h-1zM393 540h1v1h-1zM394 290h1v3h-1zM394 540h1v1h-1zM395 287h1v3h-1zM395 540h1v1h-1zM396 284h1v3h-1zM396 540h1v1h-1zM397 281h1v3h-1zM397 539h1v1h-1zM398 278h1v3h-1zM398 539h1v1h-1zM399 274h1v4h-1zM399 539h1v1h-1zM400 270h1v4h-1zM400 539h1v1h-1zM401 267h1v3h-1zM401 539h1v1h-1zM402 263h1v4h-1zM402 539h1v1h-1zM403 259h1v4h-1zM403 538h1v1h-1zM404 255h1v4h-1zM404 538h1v1h-1zM405 251h1v4h-1zM405 538h1v1h-1zM406 246h1v5h-1zM406 538h1v1h-1zM407 242h1v4h-1zM407 538h1v1h-1zM408 238h1v4h-1zM408 537h1v1h-1zM409 233h1v5h-1zM409 537h1v1h-1zM410 229h1v4h-1zM410 537h1v1h-1zM411 225h1v4h-1zM411 537h1v1h-1zM412 220h1v5h-1zM412 537h1v1h-1zM413 216h1v4h-1zM413 536h1v1h-1zM414 212h1v4h-1zM414 536h1v1h-1zM415 207h1v5h-1zM415 536h1v1h-1zM416 203h1v4h-1zM416 536h1v1h-1zM417 199h1v4h-1zM417 536h1v1h-1zM418 194h1v5h-1zM418 535h1v1h-1zM419 190h1v4h-1zM419 535h1v1h-1zM420 186h1v4h-1zM420 535h1v1h-1zM421 182h1v4h-1zM421 535h1v1h-1zM422 178h1v4h-1zM422 534h1v1h-1zM423 174h1v4h-1zM423 534h1v1h-1zM424 171h1v3h-1zM424 534h1v1h-1zM425 167h1v4h-1zM425 534h1v1h-1zM426 163h1v4h-1zM426 534h1v1h-1zM427 160h1v3h-1zM427 534h1v1h-1zM428 156h1v4h-1zM428 533h1v1h-1zM429 153h1v3h-1zM429 533h1v1h-1zM430 150h1v3h-1zM430 533h1v1h-1zM431 148h1v2h-1zM431 533h1v1h-1zM432 145h1v3h-1zM432 533h1v1h-1zM433 143h1v2h-1zM433 533h1v1h-1zM434 140h1v3h-1zM434 533h1v1h-1zM435 138h1v2h-1zM435 533h1v1h-1zM436 136h1v2h-1zM436 532h1v1h-1zM437 134h1v2h-1zM437 532h1v1h-1zM438 133h1v1h-1zM438 532h1v1h-1zM439 131h1v2h-1zM439 532h1v1h-1zM440 130h1v1h-1zM440 532h1v1h-1zM441 129h1v1h-1zM441 532h1v1h-1zM442 128h1v1h-1zM442 532h1v1h-1zM443 127h1v1h-1zM443 532h1v1h-1zM444 126h1v1h-1zM444 532h1v1h-1zM445 126h1v1h-1zM445 532h1v1h-1zM446 126h1v1h-1zM446 532h1v1h-1zM447 126h1v1h-1zM447 532h1v1h-1zM448 126h1v96h-1zM448 445h1v88h-1zM449 445h1v1h-1zM450 446h1v1h-1zM451 447h1v3h-1zM452 450h1v4h-1zM453 454h1v17h-1zM453 496h1v45h-1zM454 471h1v25h-1zM454 528h1v8h-1zM455 525h1v4h-1zM456 524h1v1h-1zM457 524h1v1h-1zM458 524h1v5h-1zM458 574h1v32h-1zM459 529h1v45h-1zM459 593h1v11h-1zM460 581h1v12h-1zM461 570h1v11h-1zM462 562h1v9h-1zM463 560h1v3h-1zM464 563h1v54h-1zM465 617h1v20h-1zM466 584h1v43h-1zM467 555h1v29h-1zM468 523h1v32h-1zM469 448h1v75h-1zM470 423h1v26h-1zM471 410h1v13h-1zM472 413h1v59h-1zM473 472h1v20h-1zM474 492h1v56h-1zM475 548h1v23h-1zM476 571h1v19h-1zM477 590h1v15h-1zM478 605h1v9h-1zM479 610h1v5h-1zM480 598h1v13h-1zM481 543h1v55h-1zM482 524h1v21h-1zM483 545h1v24h-1zM484 569h1v10h-1zM485 579h1v9h-1zM486 588h1v7h-1zM487 595h1v4h-1zM488 586h1v13h-1zM489 474h1v113h-1zM490 473h1v3h-1zM491 476h1v3h-1zM492 467h1v12h-1zM493 463h1v25h-1zM494 488h1v42h-1zM495 530h1v36h-1zM496 566h1v38h-1zM497 604h1v37h-1zM498 640h1v28h-1zM499 667h1v9h-1zM500 648h1v26h-1zM501 608h1v40h-1zM502 563h1v46h-1zM503 530h1v34h-1zM504 527h1v3h-1zM505 527h1v4h-1zM506 530h1v47h-1zM507 542h1v33h-1zM508 521h1v21h-1zM509 511h1v10h-1zM510 504h1v7h-1zM511 499h1v5h-1zM512 498h1v3h-1zM513 501h1v22h-1zM514 523h1v27h-1zM515 550h1v30h-1zM516 580h1v32h-1zM517 611h1v27h-1zM518 638h1v24h-1zM519 660h1v7h-1zM520 621h1v40h-1zM521 540h1v81h-1zM522 531h1v9h-1zM523 528h1v4h-1zM524 527h1v2h-1zM525 526h1v1h-1zM526 525h1v2h-1zM527 526h1v7h-1zM528 533h1v11h-1zM529 544h1v5h-1zM530 546h1v4h-1zM531 540h1v7h-1zM532 534h1v6h-1zM533 529h1v5h-1zM534 527h1v2h-1zM535 528h1v8h-1zM536 536h1v21h-1zM537 557h1v31h-1zM538 588h1v45h-1zM539 633h1v36h-1zM540 648h1v21h-1zM541 608h1v40h-1zM542 569h1v39h-1zM543 522h1v48h-1zM544 491h1v31h-1zM545 487h1v5h-1zM546 489h1v11h-1zM547 500h1v9h-1zM548 508h1v2h-1zM549 505h1v3h-1zM550 505h1v7h-1zM551 512h1v19h-1zM552 531h1v10h-1zM553 540h1v5h-1zM554 545h1v4h-1zM555 549h1v4h-1zM556 552h1v5h-1zM557 556h1v6h-1zM558 561h1v8h-1zM559 569h1v51h-1zM560 605h1v13h-1zM561 589h1v17h-1zM562 567h1v22h-1zM563 496h1v71h-1zM564 483h1v13h-1zM565 472h1v11h-1zM566 465h1v7h-1zM567 462h1v3h-1zM568 463h1v6h-1zM569 469h1v12h-1zM570 481h1v17h-1zM571 498h1v47h-1zM572 545h1v30h-1zM573 556h1v26h-1zM574 546h1v10h-1zM575 545h1v1h-1zM576 544h1v1h-1zM577 543h1v1h-1zM578 544h1v3h-1zM579 547h1v20h-1zM580 567h1v15h-1zM581 540h1v34h-1zM582 519h1v22h-1zM583 501h1v18h-1zM584 483h1v19h-1zM585 466h1v17h-1zM586 458h1v9h-1zM587 457h1v2h-1zM588 458h1v4h-1zM589 462h1v7h-1zM590 469h1v10h-1zM591 479h1v76h-1zM592 555h1v34h-1zM593 584h1v5h-1zM594 575h1v9h-1zM595 548h1v27h-1zM596 540h1v8h-1zM597 540h1v2h-1zM598 542h1v2h-1zM599 544h1v2h-1zM600 542h1v4h-1zM601 530h1v12h-1zM602 525h1v6h-1zM603 520h1v5h-1zM604 511h1v9h-1zM605 498h1v13h-1zM606 485h1v13h-1zM607 474h1v11h-1zM608 470h1v4h-1zM609 470h1v7h-1zM610 477h1v17h-1zM611 494h1v70h-1zM612 564h1v41h-1zM613 604h1v13h-1zM614 607h1v9h-1zM615 592h1v15h-1zM616 574h1v18h-1zM617 555h1v19h-1zM618 530h1v25h-1zM619 526h1v5h-1zM620 525h1v2h-1zM621 526h1v2h-1zM622 528h1v1h-1zM623 529h1v1h-1zM624 530h1v1h-1zM625 530h1v2h-1zM626 520h1v11h-1zM627 512h1v8h-1zM628 511h1v2h-1zM629 510h1v1h-1zM630 510h1v1h-1zM631 511h1v3h-1zM631 530h1v10h-1zM632 514h1v16h-1zM632 540h1v46h-1zM633 586h1v33h-1zM634 617h1v5h-1zM635 600h1v18h-1zM636 580h1v20h-1zM637 557h1v24h-1zM638 540h1v18h-1zM639 528h1v13h-1zM640 517h1v11h-1zM641 508h1v9h-1zM642 505h1v4h-1zM643 506h1v8h-1zM644 513h1v13h-1zM645 525h1v13h-1zM646 538h1v15h-1zM647 552h1v8h-1zM648 555h1v5h-1zM649 546h1v9h-1zM650 539h1v7h-1zM651 539h1v10h-1zM652 548h1v21h-1zM653 569h1v22h-1zM654 590h1v23h-1zM655 613h1v11h-1zM656 604h1v20h-1zM657 575h1v29h-1zM658 556h1v19h-1zM659 540h1v16h-1zM660 523h1v18h-1zM661 506h1v17h-1zM662 499h1v8h-1zM663 499h1v11h-1zM664 510h1v15h-1zM665 525h1v18h-1zM666 543h1v17h-1zM667 560h1v15h-1zM668 575h1v2h-1zM669 571h1v5h-1zM670 566h1v5h-1zM671 564h1v2h-1zM672 564h1v6h-1zM673 570h1v10h-1zM674 580h1v9h-1zM675 589h1v4h-1zM676 584h1v8h-1zM677 570h1v14h-1zM678 552h1v19h-1zM679 530h1v22h-1zM680 508h1v23h-1zM681 492h1v16h-1zM682 484h1v8h-1zM683 480h1v4h-1zM684 480h1v7h-1zM685 487h1v22h-1zM686 509h1v31h-1zM687 540h1v27h-1zM688 567h1v17h-1zM689 583h1v3h-1zM690 574h1v10h-1zM691 567h1v7h-1zM692 561h1v6h-1zM693 556h1v5h-1zM694 553h1v4h-1zM695 549h1v4h-1zM696 547h1v3h-1zM697 544h1v3h-1zM698 541h1v3h-1zM699 535h1v6h-1zM700 521h1v14h-1zM701 490h1v31h-1zM702 476h1v14h-1zM703 475h1v2h-1zM704 477h1v4h-1zM705 481h1v6h-1zM706 487h1v53h-1zM707 540h1v19h-1zM708 559h1v14h-1zM709 573h1v5h-1zM710 571h1v7h-1zM711 560h1v11h-1zM712 549h1v12h-1zM713 537h1v12h-1zM714 528h1v10h-1zM715 517h1v11h-1zM716 514h1v4h-1zM717 514h1v2h-1zM718 516h1v3h-1zM719 518h1v5h-1zM720 514h1v8h-1zM721 502h1v12h-1zM722 491h1v11h-1zM723 482h1v9h-1zM724 479h1v3h-1zM725 480h1v12h-1zM726 492h1v18h-1zM727 510h1v28h-1zM728 538h1v19h-1zM729 557h1v16h-1zM730 573h1v8h-1zM731 565h1v16h-1zM732 548h1v17h-1zM733 532h1v16h-1zM734 516h1v16h-1zM735 503h1v13h-1zM736 496h1v7h-1zM737 495h1v3h-1zM738 498h1v9h-1zM739 507h1v8h-1zM740 514h1v7h-1zM741 521h1v3h-1zM742 519h1v5h-1zM743 511h1v8h-1zM744 508h1v3h-1zM745 509h1v14h-1zM746 523h1v14h-1zM747 536h1v12h-1zM748 547h1v12h-1zM749 559h1v11h-1zM750 570h1v10h-1zM751 580h1v5h-1zM752 572h1v12h-1zM753 544h1v28h-1zM754 528h1v17h-1zM755 513h1v15h-1zM756 501h1v12h-1zM757 493h1v8h-1zM758 492h1v5h-1zM759 496h1v15h-1zM760 511h1v13h-1zM761 524h1v11h-1zM762 535h1v8h-1zM763 543h1v3h-1zM764 546h1v2h-1zM765 548h1v2h-1zM766 550h1v3h-1zM767 552h1v4h-1zM768 556h1v5h-1zM769 561h1v6h-1zM770 567h1v10h-1zM771 576h1v9h-1zM772 585h1v4h-1zM773 581h1v8h-1zM774 563h1v18h-1zM775 539h1v24h-1zM776 506h1v33h-1zM777 503h1v3h-1zM778 503h1v3h-1zM779 506h1v4h-1zM780 509h1v18h-1zM781 527h1v30h-1zM782 557h1v9h-1zM783 566h1v8h-1zM784 574h1v5h-1zM785 578h1v3h-1zM786 578h1v3h-1zM787 575h1v3h-1zM788 574h1v2h-1zM789 574h1v2h-1zM790 576h1v2h-1zM791 578h1v2h-1zM792 580h1v2h-1zM793 579h1v3h-1zM794 564h1v16h-1zM795 550h1v15h-1zM796 533h1v17h-1zM797 517h1v16h-1zM798 508h1v9h-1zM799 508h1v4h-1zM800 512h1v7h-1zM801 518h1v19h-1zM802 537h1v21h-1zM803 558h1v24h-1zM804 582h1v10h-1zM805 588h1v4h-1zM806 582h1v6h-1zM807 576h1v6h-1zM808 565h1v11h-1zM809 559h1v6h-1zM810 557h1v3h-1zM811 557h1v1h-1zM812 556h1v1h-1zM813 555h1v2h-1zM814 552h1v3h-1zM815 533h1v19h-1zM816 515h1v19h-1zM817 512h1v3h-1zM818 512h1v1h-1zM819 512h1v2h-1zM820 513h1v7h-1zM821 520h1v16h-1zM822 536h1v16h-1zM823 551h1v14h-1zM824 565h1v11h-1zM825 576h1v9h-1zM826 585h1v5h-1zM827 581h1v9h-1zM828 559h1v22h-1zM829 540h1v20h-1zM830 524h1v16h-1zM831 523h1v2h-1zM832 523h1v1h-1zM833 524h1v2h-1zM834 526h1v5h-1zM835 528h1v3h-1zM836 523h1v5h-1zM837 517h1v6h-1zM838 512h1v5h-1zM839 511h1v2h-1zM840 512h1v3h-1zM841 515h1v5h-1zM842 519h1v14h-1zM843 533h1v17h-1zM844 550h1v11h-1zM845 561h1v9h-1zM846 570h1v6h-1zM847 572h1v5h-1zM848 558h1v15h-1zM849 533h1v25h-1zM850 510h1v23h-1zM851 502h1v8h-1zM852 498h1v4h-1zM853 498h1v3h-1zM854 501h1v4h-1zM855 221h1v1h-1zM855 505h1v5h-1zM856 221h1v1h-1zM856 510h1v5h-1zM857 221h1v1h-1zM857 515h1v3h-1zM858 221h1v1h-1zM858 517h1v2h-1zM859 221h1v1h-1zM859 518h1v3h-1zM860 221h1v1h-1zM860 520h1v2h-1zM861 221h1v1h-1zM861 521h1v3h-1zM862 221h1v1h-1zM862 523h1v3h-1zM863 221h1v1h-1zM863 526h1v6h-1zM864 221h1v1h-1zM864 532h1v4h-1zM865 222h1v13h-1zM865 535h1v1h-1zM866 235h1v14h-1zM866 536h1v2h-1zM867 249h1v3h-1zM867 533h1v1h-1zM867 537h1v1h-1zM868 248h1v2h-1zM868 533h1v1h-1zM869 232h1v16h-1zM869 533h1v1h-1zM870 214h1v18h-1zM870 533h1v1h-1zM871 207h1v7h-1zM871 533h1v1h-1zM872 199h1v8h-1zM872 533h1v1h-1zM873 195h1v4h-1zM873 533h1v1h-1zM874 196h1v1h-1zM874 534h1v1h-1zM875 197h1v4h-1zM875 534h1v1h-1zM876 201h1v4h-1zM876 534h1v1h-1zM877 205h1v1h-1zM877 534h1v1h-1zM878 206h1v1h-1zM878 534h1v1h-1zM879 205h1v3h-1zM879 535h1v1h-1zM880 202h1v4h-1zM880 535h1v1h-1zM881 206h1v9h-1zM881 535h1v1h-1zM882 215h1v6h-1zM882 535h1v1h-1zM883 211h1v6h-1zM883 535h1v1h-1zM884 204h1v7h-1zM884 536h1v1h-1zM885 198h1v6h-1zM885 536h1v1h-1zM886 193h1v5h-1zM886 536h1v1h-1zM887 188h1v5h-1zM887 536h1v1h-1zM888 185h1v3h-1zM888 536h1v1h-1zM889 187h1v4h-1zM889 537h1v1h-1zM890 191h1v6h-1zM890 537h1v1h-1zM891 197h1v8h-1zM891 537h1v1h-1zM892 205h1v8h-1zM892 537h1v1h-1zM893 213h1v5h-1zM893 537h1v1h-1zM894 218h1v3h-1zM894 538h1v1h-1zM895 221h1v2h-1zM895 538h1v1h-1zM896 223h1v3h-1zM896 538h1v1h-1zM897 226h1v2h-1zM897 538h1v1h-1zM898 228h1v2h-1zM898 538h1v1h-1zM899 224h1v4h-1zM899 539h1v1h-1zM900 220h1v4h-1zM900 539h1v1h-1zM901 216h1v4h-1zM901 539h1v1h-1zM902 213h1v3h-1zM902 539h1v1h-1zM903 214h1v1h-1zM903 539h1v1h-1zM904 215h1v3h-1zM904 540h1v1h-1zM905 218h1v6h-1zM905 540h1v1h-1zM906 224h1v6h-1zM906 540h1v1h-1zM907 230h1v8h-1zM907 540h1v1h-1zM908 238h1v10h-1zM908 540h1v1h-1zM909 248h1v5h-1zM909 540h1v1h-1zM910 252h1v1h-1zM910 540h1v1h-1zM911 253h1v1h-1zM911 540h1v1h-1zM912 253h1v1h-1zM912 541h1v1h-1zM913 253h1v1h-1zM913 541h1v1h-1zM914 251h1v2h-1zM914 541h1v1h-1zM915 249h1v2h-1zM915 541h1v1h-1zM916 247h1v2h-1zM916 541h1v1h-1zM917 246h1v1h-1zM917 541h1v1h-1zM918 247h1v1h-1zM918 541h1v1h-1zM919 248h1v2h-1zM919 541h1v1h-1zM920 250h1v5h-1zM920 541h1v1h-1zM921 255h1v8h-1zM921 541h1v1h-1zM922 263h1v9h-1zM922 541h1v1h-1zM923 272h1v5h-1zM923 541h1v1h-1zM924 275h1v1h-1zM924 541h1v1h-1zM925 272h1v4h-1zM925 541h1v1h-1zM926 267h1v5h-1zM926 541h1v1h-1zM927 266h1v1h-1zM927 541h1v1h-1zM928 264h1v2h-1zM928 541h1v1h-1zM929 263h1v1h-1zM929 541h1v1h-1zM930 261h1v2h-1zM930 541h1v1h-1zM931 257h1v4h-1zM931 541h1v1h-1zM932 255h1v2h-1zM932 541h1v1h-1zM933 256h1v1h-1zM933 541h1v1h-1zM934 257h1v2h-1zM934 540h1v1h-1zM935 259h1v2h-1zM935 540h1v1h-1zM936 261h1v4h-1zM936 540h1v1h-1zM937 265h1v4h-1zM937 540h1v1h-1zM938 269h1v3h-1zM938 540h1v1h-1zM939 266h1v4h-1zM939 540h1v1h-1zM940 261h1v5h-1zM940 540h1v1h-1zM941 253h1v8h-1zM941 539h1v1h-1zM942 248h1v5h-1zM942 539h1v1h-1zM943 246h1v2h-1zM943 539h1v1h-1zM944 243h1v3h-1zM944 539h1v1h-1zM945 241h1v2h-1zM945 539h1v1h-1zM946 239h1v2h-1zM946 539h1v1h-1zM947 238h1v1h-1zM947 538h1v1h-1zM948 236h1v2h-1zM948 538h1v1h-1zM949 235h1v1h-1zM949 538h1v1h-1zM950 236h1v1h-1zM950 538h1v1h-1zM951 237h1v1h-1zM951 538h1v1h-1zM952 238h1v1h-1zM952 537h1v1h-1zM953 236h1v2h-1zM953 537h1v1h-1zM954 234h1v2h-1zM954 537h1v1h-1zM955 230h1v4h-1zM955 537h1v1h-1zM956 221h1v9h-1zM956 537h1v1h-1zM957 210h1v11h-1zM957 536h1v1h-1zM958 204h1v6h-1zM958 536h1v1h-1zM959 202h1v2h-1zM959 536h1v1h-1zM960 200h1v2h-1zM960 536h1v1h-1zM961 198h1v2h-1zM961 536h1v1h-1zM962 197h1v1h-1zM962 535h1v1h-1zM963 196h1v1h-1zM963 535h1v1h-1zM964 195h1v1h-1zM964 535h1v1h-1zM965 193h1v2h-1zM965 535h1v1h-1zM966 192h1v1h-1zM966 535h1v1h-1zM967 191h1v1h-1zM967 534h1v1h-1zM968 190h1v1h-1zM968 534h1v1h-1zM969 186h1v4h-1zM969 534h1v1h-1zM970 178h1v8h-1zM970 534h1v1h-1zM971 171h1v7h-1zM971 534h1v1h-1zM972 163h1v8h-1zM972 533h1v1h-1zM973 158h1v5h-1zM973 533h1v1h-1zM974 156h1v2h-1zM974 533h1v1h-1zM975 157h1v1h-1zM975 533h1v1h-1zM976 158h1v1h-1zM976 533h1v1h-1zM977 158h1v1h-1zM977 533h1v1h-1zM978 159h1v1h-1zM978 533h1v1h-1zM979 158h1v1h-1zM979 533h1v1h-1zM980 157h1v1h-1zM980 532h1v1h-1zM981 156h1v1h-1zM981 532h1v1h-1zM982 155h1v1h-1zM982 532h1v1h-1zM983 153h1v2h-1zM983 532h1v1h-1zM984 150h1v3h-1zM984 532h1v1h-1zM985 148h1v2h-1zM985 532h1v1h-1zM986 145h1v3h-1zM986 532h1v1h-1zM987 142h1v3h-1zM987 532h1v1h-1zM988 138h1v4h-1zM988 532h1v1h-1zM989 135h1v3h-1zM989 532h1v1h-1zM990 136h1v1h-1zM990 532h1v1h-1zM991 137h1v4h-1zM991 532h1v1h-1zM992 141h1v6h-1zM992 532h1v1h-1zM993 147h1v4h-1zM993 532h1v1h-1zM994 150h1v1h-1zM994 532h1v1h-1zM995 151h1v1h-1zM995 532h1v1h-1zM996 151h1v1h-1zM996 532h1v1h-1zM997 151h1v1h-1zM997 532h1v1h-1zM998 151h1v1h-1zM998 532h1v1h-1zM999 150h1v1h-1zM999 532h1v1h-1zM1000 150h1v1h-1zM1000 532h1v1h-1zM1001 150h1v1h-1zM1001 532h1v1h-1zM1002 150h1v1h-1zM1002 533h1v1h-1zM1003 151h1v1h-1zM1003 533h1v1h-1zM1004 151h1v1h-1zM1004 533h1v1h-1zM1005 152h1v4h-1zM1005 533h1v1h-1zM1006 156h1v7h-1zM1006 533h1v1h-1zM1007 163h1v8h-1zM1007 533h1v1h-1zM1008 171h1v5h-1zM1008 533h1v1h-1zM1009 176h1v4h-1zM1009 534h1v1h-1zM1010 180h1v2h-1zM1010 534h1v1h-1zM1011 182h1v1h-1zM1011 534h1v1h-1zM1012 183h1v1h-1zM1012 534h1v1h-1zM1013 184h1v1h-1zM1013 534h1v1h-1zM1014 185h1v1h-1zM1014 534h1v1h-1zM1015 186h1v2h-1zM1015 535h1v1h-1zM1016 188h1v3h-1zM1016 535h1v1h-1zM1017 191h1v4h-1zM1017 535h1v1h-1zM1018 195h1v4h-1zM1018 535h1v1h-1zM1019 199h1v6h-1zM1019 535h1v1h-1zM1020 205h1v6h-1zM1020 536h1v1h-1zM1021 211h1v6h-1zM1021 536h1v1h-1zM1022 217h1v6h-1zM1022 536h1v1h-1zM1023 223h1v6h-1zM1023 536h1v1h-1zM1024 229h1v3h-1zM1024 536h1v1h-1zM1025 232h1v2h-1zM1025 537h1v1h-1zM1026 234h1v1h-1zM1026 537h1v1h-1zM1027 235h1v2h-1zM1027 537h1v1h-1zM1028 237h1v1h-1zM1028 537h1v1h-1zM1029 238h1v2h-1zM1029 537h1v1h-1zM1030 240h1v2h-1zM1030 538h1v1h-1zM1031 242h1v3h-1zM1031 538h1v1h-1zM1032 245h1v4h-1zM1032 538h1v1h-1zM1033 249h1v4h-1zM1033 538h1v1h-1zM1034 253h1v4h-1zM1034 538h1v1h-1zM1035 257h1v5h-1zM1035 539h1v1h-1zM1036 262h1v6h-1zM1036 539h1v1h-1zM1037 268h1v7h-1zM1037 539h1v1h-1zM1038 275h1v5h-1zM1038 539h1v1h-1zM1039 280h1v4h-1zM1039 539h1v1h-1zM1040 284h1v3h-1zM1040 540h1v1h-1zM1041 286h1v1h-1zM1041 540h1v1h-1zM1042 287h1v1h-1zM1042 540h1v1h-1zM1043 287h1v1h-1zM1043 540h1v1h-1zM1044 288h1v1h-1zM1044 540h1v1h-1zM1045 288h1v2h-1zM1045 540h1v1h-1zM1046 290h1v3h-1zM1046 540h1v1h-1zM1047 293h1v3h-1zM1047 540h1v1h-1zM1048 296h1v3h-1zM1048 541h1v1h-1zM1049 299h1v2h-1zM1049 541h1v1h-1zM1050 301h1v2h-1zM1050 541h1v1h-1zM1051 303h1v2h-1zM1051 541h1v1h-1zM1052 305h1v2h-1zM1052 541h1v1h-1zM1053 307h1v2h-1zM1053 541h1v1h-1zM1054 309h1v2h-1zM1054 541h1v1h-1zM1055 311h1v1h-1zM1055 541h1v1h-1zM1056 309h1v2h-1zM1056 541h1v1h-1zM1057 308h1v1h-1zM1057 541h1v1h-1zM1058 306h1v2h-1zM1058 541h1v1h-1zM1059 304h1v2h-1zM1059 541h1v1h-1zM1060 303h1v1h-1zM1060 541h1v1h-1zM1061 304h1v1h-1zM1061 541h1v1h-1zM1062 305h1v1h-1zM1062 541h1v1h-1zM1063 306h1v1h-1zM1063 541h1v1h-1zM1064 307h1v1h-1zM1064 541h1v1h-1zM1065 305h1v2h-1zM1065 541h1v1h-1zM1066 304h1v1h-1zM1066 541h1v1h-1zM1067 303h1v1h-1zM1067 541h1v1h-1zM1068 301h1v2h-1zM1068 541h1v1h-1zM1069 299h1v2h-1zM1069 541h1v1h-1zM1070 295h1v4h-1zM1070 540h1v1h-1zM1071 291h1v4h-1zM1071 540h1v1h-1zM1072 288h1v3h-1zM1072 540h1v1h-1zM1073 284h1v4h-1zM1073 540h1v1h-1zM1074 280h1v4h-1zM1074 540h1v1h-1zM1075 278h1v2h-1zM1075 540h1v1h-1zM1076 276h1v2h-1zM1076 540h1v1h-1zM1077 275h1v1h-1zM1077 539h1v1h-1zM1078 274h1v1h-1zM1078 539h1v1h-1zM1079 272h1v2h-1zM1079 539h1v1h-1zM1080 269h1v3h-1zM1080 539h1v1h-1zM1081 263h1v6h-1zM1081 539h1v1h-1zM1082 258h1v5h-1zM1082 539h1v1h-1zM1083 254h1v4h-1zM1083 538h1v1h-1zM1084 250h1v4h-1zM1084 538h1v1h-1zM1085 246h1v4h-1zM1085 538h1v1h-1zM1086 242h1v4h-1zM1086 538h1v1h-1zM1087 238h1v4h-1zM1087 538h1v1h-1zM1088 234h1v4h-1zM1088 537h1v1h-1zM1089 230h1v4h-1zM1089 537h1v1h-1zM1090 226h1v4h-1zM1090 537h1v1h-1zM1091 222h1v4h-1zM1091 537h1v1h-1zM1092 219h1v3h-1zM1092 537h1v1h-1zM1093 215h1v4h-1zM1093 536h1v1h-1zM1094 211h1v4h-1zM1094 536h1v1h-1zM1095 207h1v4h-1zM1095 536h1v1h-1zM1096 203h1v4h-1zM1096 536h1v1h-1zM1097 197h1v6h-1zM1097 536h1v1h-1zM1098 191h1v6h-1zM1098 535h1v1h-1zM1099 185h1v6h-1zM1099 535h1v1h-1zM1100 181h1v4h-1zM1100 535h1v1h-1zM1101 177h1v4h-1zM1101 535h1v1h-1zM1102 173h1v4h-1zM1102 535h1v1h-1zM1103 169h1v4h-1zM1103 534h1v1h-1zM1104 166h1v3h-1zM1104 534h1v1h-1zM1105 164h1v2h-1zM1105 534h1v1h-1zM1106 162h1v2h-1zM1106 534h1v1h-1zM1107 160h1v2h-1zM1107 534h1v1h-1zM1108 157h1v3h-1zM1108 533h1v1h-1zM1109 154h1v3h-1zM1109 533h1v1h-1zM1110 151h1v3h-1zM1110 533h1v1h-1zM1111 148h1v3h-1zM1111 533h1v1h-1zM1112 144h1v4h-1zM1112 533h1v1h-1zM1113 141h1v3h-1zM1113 533h1v1h-1zM1114 139h1v2h-1zM1114 533h1v1h-1zM1115 137h1v2h-1zM1115 533h1v1h-1zM1116 136h1v1h-1zM1116 532h1v1h-1zM1117 134h1v2h-1zM1117 532h1v1h-1zM1118 132h1v2h-1zM1118 532h1v1h-1zM1119 131h1v1h-1zM1119 532h1v1h-1zM1120 130h1v1h-1zM1120 532h1v1h-1zM1121 129h1v1h-1zM1121 532h1v1h-1zM1122 129h1v1h-1zM1122 532h1v1h-1zM1123 129h1v1h-1zM1123 532h1v1h-1zM1124 130h1v1h-1zM1124 532h1v1h-1zM1125 130h1v1h-1zM1125 532h1v1h-1zM1126 130h1v1h-1zM1126 532h1v1h-1zM1127 129h1v1h-1zM1127 532h1v1h-1zM1128 127h1v2h-1zM1128 532h1v1h-1zM1129 126h1v1h-1zM1129 532h1v1h-1zM1130 127h1v1h-1zM1130 532h1v1h-1zM1131 128h1v1h-1zM1131 532h1v1h-1zM1132 129h1v1h-1zM1132 532h1v1h-1zM1133 130h1v2h-1zM1133 532h1v1h-1zM1134 132h1v3h-1zM1134 532h1v1h-1zM1135 135h1v2h-1zM1135 532h1v1h-1zM1136 137h1v3h-1zM1136 532h1v1h-1zM1137 140h1v3h-1zM1137 532h1v1h-1zM1138 143h1v2h-1zM1138 533h1v1h-1zM1139 145h1v3h-1zM1139 533h1v1h-1zM1140 148h1v2h-1zM1140 533h1v1h-1zM1141 150h1v3h-1zM1141 533h1v1h-1zM1142 153h1v2h-1zM1142 533h1v1h-1zM1143 155h1v3h-1zM1143 533h1v1h-1zM1144 158h1v2h-1zM1144 533h1v1h-1zM1145 160h1v3h-1zM1145 534h1v1h-1zM1146 163h1v3h-1zM1146 534h1v1h-1zM1147 166h1v2h-1zM1147 534h1v1h-1zM1148 168h1v4h-1zM1148 534h1v1h-1zM1149 172h1v6h-1zM1149 534h1v1h-1zM1150 178h1v4h-1zM1150 534h1v1h-1zM1151 182h1v3h-1zM1151 535h1v1h-1zM1152 185h1v4h-1zM1152 535h1v1h-1zM1153 189h1v3h-1zM1153 535h1v1h-1zM1154 192h1v3h-1zM1154 535h1v1h-1zM1155 195h1v4h-1zM1155 535h1v1h-1zM1156 199h1v4h-1zM1156 536h1v1h-1zM1157 203h1v4h-1zM1157 536h1v1h-1zM1158 207h1v4h-1zM1158 536h1v1h-1zM1159 211h1v5h-1zM1159 536h1v1h-1zM1160 216h1v4h-1zM1160 536h1v1h-1zM1161 220h1v4h-1zM1161 537h1v1h-1zM1162 224h1v5h-1zM1162 537h1v1h-1zM1163 229h1v4h-1zM1163 537h1v1h-1zM1164 233h1v5h-1zM1164 537h1v1h-1zM1165 238h1v4h-1zM1165 538h1v1h-1zM1166 242h1v4h-1zM1166 538h1v1h-1zM1167 246h1v4h-1zM1167 538h1v1h-1zM1168 250h1v4h-1zM1168 538h1v1h-1zM1169 254h1v4h-1zM1169 538h1v1h-1zM1170 258h1v4h-1zM1170 539h1v1h-1zM1171 262h1v4h-1zM1171 539h1v1h-1zM1172 266h1v4h-1zM1172 539h1v1h-1zM1173 270h1v4h-1zM1173 539h1v1h-1zM1174 274h1v3h-1zM1174 539h1v1h-1zM1175 277h1v4h-1zM1175 539h1v1h-1zM1176 281h1v3h-1zM1176 540h1v1h-1zM1177 284h1v4h-1zM1177 540h1v1h-1zM1178 288h1v3h-1zM1178 540h1v1h-1zM1179 291h1v3h-1zM1179 540h1v1h-1zM1180 294h1v2h-1zM1180 540h1v1h-1zM1181 296h1v3h-1zM1181 540h1v1h-1zM1182 299h1v2h-1zM1182 540h1v1h-1zM1183 301h1v2h-1zM1183 540h1v1h-1zM1184 303h1v2h-1zM1184 541h1v1h-1zM1185 305h1v2h-1zM1185 541h1v1h-1zM1186 307h1v2h-1zM1186 541h1v1h-1zM1187 309h1v2h-1zM1187 541h1v1h-1zM1188 311h1v1h-1zM1188 541h1v1h-1zM1189 312h1v1h-1zM1189 541h1v1h-1zM1190 313h1v1h-1zM1190 541h1v1h-1zM1191 314h1v1h-1zM1191 541h1v1h-1zM1192 315h1v1h-1zM1192 541h1v1h-1zM1193 315h1v1h-1zM1193 541h1v1h-1zM1194 315h1v1h-1zM1194 541h1v1h-1zM1195 315h1v1h-1zM1195 541h1v1h-1zM1196 315h1v1h-1zM1196 541h1v1h-1zM1197 315h1v1h-1zM1197 541h1v1h-1zM1198 314h1v1h-1zM1198 541h1v1h-1zM1199 313h1v1h-1zM1199 541h1v1h-1zM1200 312h1v1h-1zM1200 541h1v1h-1zM1201 311h1v1h-1zM1201 541h1v1h-1zM1202 309h1v2h-1zM1202 541h1v1h-1zM1203 308h1v1h-1zM1203 541h1v1h-1zM1204 306h1v2h-1zM1204 541h1v1h-1zM1205 304h1v2h-1zM1205 541h1v1h-1zM1206 302h1v2h-1zM1206 540h1v1h-1zM1207 299h1v3h-1zM1207 540h1v1h-1zM1208 297h1v2h-1zM1208 540h1v1h-1zM1209 294h1v3h-1zM1209 540h1v1h-1zM1210 291h1v3h-1zM1210 540h1v1h-1zM1211 288h1v3h-1zM1211 540h1v1h-1zM1212 285h1v3h-1zM1212 540h1v1h-1zM1213 281h1v4h-1zM1213 539h1v1h-1zM1214 278h1v3h-1zM1214 539h1v1h-1zM1215 274h1v4h-1zM1215 539h1v1h-1zM1216 271h1v3h-1zM1216 539h1v1h-1zM1217 267h1v4h-1zM1217 539h1v1h-1zM1218 263h1v4h-1zM1218 539h1v1h-1zM1219 259h1v4h-1zM1219 538h1v1h-1zM1220 255h1v4h-1zM1220 538h1v1h-1zM1221 251h1v4h-1zM1221 538h1v1h-1zM1222 247h1v4h-1zM1222 538h1v1h-1zM1223 242h1v5h-1zM1223 538h1v1h-1zM1224 238h1v4h-1zM1224 537h1v1h-1zM1225 234h1v4h-1zM1225 537h1v1h-1zM1226 229h1v5h-1zM1226 537h1v1h-1zM1227 225h1v4h-1zM1227 537h1v1h-1zM1228 221h1v4h-1zM1228 537h1v1h-1zM1229 216h1v5h-1zM1229 536h1v1h-1zM1230 212h1v4h-1zM1230 536h1v1h-1zM1231 207h1v5h-1zM1231 536h1v1h-1zM1232 203h1v4h-1zM1232 536h1v1h-1zM1233 198h1v5h-1zM1233 535h1v1h-1zM1234 194h1v4h-1zM1234 535h1v1h-1zM1235 189h1v5h-1zM1235 535h1v1h-1zM1236 185h1v4h-1zM1236 535h1v1h-1zM1237 181h1v4h-1zM1237 535h1v1h-1zM1238 177h1v4h-1zM1238 534h1v1h-1zM1239 172h1v5h-1zM1239 534h1v1h-1zM1240 168h1v4h-1zM1240 534h1v1h-1zM1241 164h1v4h-1zM1241 534h1v1h-1zM1242 161h1v3h-1zM1242 534h1v1h-1zM1243 157h1v4h-1zM1243 534h1v1h-1zM1244 153h1v4h-1zM1244 533h1v1h-1zM1245 150h1v3h-1zM1245 533h1v1h-1zM1246 147h1v3h-1zM1246 533h1v1h-1zM1247 144h1v3h-1zM1247 533h1v1h-1zM1248 141h1v3h-1zM1248 533h1v1h-1zM1249 139h1v2h-1zM1249 533h1v1h-1zM1250 137h1v2h-1zM1250 533h1v1h-1zM1251 135h1v2h-1zM1251 533h1v1h-1zM1252 133h1v2h-1zM1252 532h1v1h-1zM1253 131h1v2h-1zM1253 532h1v1h-1zM1254 130h1v1h-1zM1254 532h1v1h-1zM1255 128h1v2h-1zM1255 532h1v1h-1zM1256 127h1v1h-1zM1256 532h1v1h-1zM1257 127h1v1h-1zM1257 532h1v1h-1zM1258 126h1v1h-1zM1258 532h1v1h-1zM1259 126h1v1h-1zM1259 532h1v1h-1zM1260 126h1v1h-1zM1260 532h1v1h-1zM1261 126h1v1h-1zM1261 532h1v1h-1zM1262 126h1v1h-1zM1262 532h1v1h-1zM1263 127h1v1h-1zM1263 532h1v1h-1z" fill="#00ffff"/>
<g fill="#fff" font-size="12" font-family="Liberation Sans, sans-serif"><text x="38" y="82.5" text-anchor="end">1.5</text><text x="38" y="129.5" text-anchor="end">1</text><text x="38" y="176.5" text-anchor="end">0.5</text><text x="38" y="224.5" text-anchor="end">0</text><text x="38" y="271.5" text-anchor="end">-0.5</text><text x="38" y="318.5" text-anchor="end">-1</text><text x="38" y="366.5" text-anchor="end">-1.5</text><text x="38" y="398.5" text-anchor="end">10</text><text x="38" y="426.5" text-anchor="end">8</text><text x="38" y="454.5" text-anchor="end">6</text><text x="38" y="483.5" text-anchor="end">4</text><text x="38" y="511.5" text-anchor="end">2</text><text x="38" y="540.5" text-anchor="end">0</text><text x="38" y="568.5" text-anchor="end">-2</text><text x="38" y="596.5" text-anchor="end">-4</text><text x="38" y="625.5" text-anchor="end">-6</text><text x="38" y="653.5" text-anchor="end">-8</text><text x="38" y="682.5" text-anchor="end">-10</text><text x="41.0" y="693" text-anchor="middle">0</text><text x="204.125" y="693" text-anchor="middle">0.02</text><text x="367.25" y="693" text-anchor="middle">0.04</text><text x="530.375" y="693" text-anchor="middle">0.06</text><text x="693.5" y="693" text-anchor="middle">0.08</text><text x="856.625" y="693" text-anchor="middle">0.1</text><text x="1019.75" y="693" text-anchor="middle">0.12</text><text x="1182.875" y="693" text-anchor="middle">0.14</text><text x="1346.0" y="693" text-anchor="middle">0.16</text></g>
<text x="4" y="720" font-size="11" fill="#fff" font-family="Liberation Sans">Time offset:</text>
<text x="71.5" y="720" font-size="11" fill="#fff" font-family="Liberation Sans">0</text>
<defs><linearGradient id="tbg" x1="0" y1="0" x2="1366" y2="0" gradientUnits="userSpaceOnUse"><stop offset="0" stop-color="#0b0e13"/><stop offset="0.14" stop-color="#0d1015"/><stop offset="0.34" stop-color="#2b2c2e"/><stop offset="1" stop-color="#2b2c2e"/></linearGradient></defs>
<rect x="0" y="728" width="1366" height="40" fill="url(#tbg)"/>
<rect x="99" y="728" width="44" height="40" fill="#3a3b3f"/>
<rect x="143" y="728" width="4" height="40" fill="#2e2f33"/>
<rect x="99" y="766" width="44" height="2" fill="#76b9ed"/>
<rect x="143" y="766" width="4" height="2" fill="#4f7fa6"/>
<rect x="544" y="766" width="32" height="2" fill="#76b9ed"/><rect x="576" y="766" width="8" height="2" fill="#4f7fa6"/>
<rect x="593" y="766" width="40" height="2" fill="#76b9ed"/>
<path d="M16 741.3L22 740.5V747.2H16Z M23 740.3L32.2 739.5V747.2H23Z M16 748.2H22V755L16 754.2Z M23 748.2H32.2V756L23 755.2Z" fill="#fff"/>
<path d="M64.3 740V742.5H75.2V740 M64.3 755V752.6H75.2V755" stroke="#fff" stroke-width="1.1" fill="none"/>
<rect x="64.5" y="744.6" width="10.5" height="5.8" fill="none" stroke="#fff" stroke-width="1.1"/>
<path d="M78.4 740V755" stroke="#fff" stroke-width="1.1"/><rect x="77" y="744.5" width="2.8" height="2.8" fill="#fff"/>
<g transform="translate(111,737) scale(1.0)"><defs><linearGradient id="mlo2" x1="8" y1="0" x2="24" y2="0" gradientUnits="userSpaceOnUse"><stop offset="0" stop-color="#6a1508"/><stop offset="0.3" stop-color="#d85a18"/><stop offset="0.5" stop-color="#ffc83a"/><stop offset="0.7" stop-color="#f08a22"/><stop offset="1" stop-color="#b82a14"/></linearGradient><linearGradient id="mlb2" x1="0" y1="12" x2="14" y2="4" gradientUnits="userSpaceOnUse"><stop offset="0" stop-color="#6ec0f0"/><stop offset="1" stop-color="#2a78c0"/></linearGradient></defs><path d="M0.3 12.1L7 8.7L12.3 4.5L15.5 0.4L14 4.5L10.2 10.8L9.7 12.9L7.1 15.2L3.9 15.3Z" fill="url(#mlb2)"/><path d="M16.2 0.1C18 4 20.5 11 23.5 17.6C21.5 15.5 19.8 14.8 18.6 15C17 15.6 13 20 10.8 21.7C10 19 9 17 8.2 15.5C10.5 12.5 13 7.5 16.2 0.1Z" fill="url(#mlo2)"/><path d="M10.8 21.7C10 19 9 17 8.2 15.5L10.5 17.5Z" fill="#ffd84a" opacity="0.8"/></g>
<g transform="translate(160,737) scale(1.0)"><defs><linearGradient id="mlo3" x1="8" y1="0" x2="24" y2="0" gradientUnits="userSpaceOnUse"><stop offset="0" stop-color="#6a1508"/><stop offset="0.3" stop-color="#d85a18"/><stop offset="0.5" stop-color="#ffc83a"/><stop offset="0.7" stop-color="#f08a22"/><stop offset="1" stop-color="#b82a14"/></linearGradient><linearGradient id="mlb3" x1="0" y1="12" x2="14" y2="4" gradientUnits="userSpaceOnUse"><stop offset="0" stop-color="#6ec0f0"/><stop offset="1" stop-color="#2a78c0"/></linearGradient></defs><path d="M0.3 12.1L7 8.7L12.3 4.5L15.5 0.4L14 4.5L10.2 10.8L9.7 12.9L7.1 15.2L3.9 15.3Z" fill="url(#mlb3)"/><path d="M16.2 0.1C18 4 20.5 11 23.5 17.6C21.5 15.5 19.8 14.8 18.6 15C17 15.6 13 20 10.8 21.7C10 19 9 17 8.2 15.5C10.5 12.5 13 7.5 16.2 0.1Z" fill="url(#mlo3)"/><path d="M10.8 21.7C10 19 9 17 8.2 15.5L10.5 17.5Z" fill="#ffd84a" opacity="0.8"/></g>
<path d="M221 748L211.47 742.50A11 11 0 0 1 230.53 742.50Z" fill="#db4437"/>
<path d="M221 748L230.53 742.50A11 11 0 0 1 221.00 759.00Z" fill="#fcc934"/>
<path d="M221 748L221.00 759.00A11 11 0 0 1 211.47 742.50Z" fill="#1e9e4a"/>
<circle cx="221" cy="748" r="5" fill="#fff"/><circle cx="221" cy="748" r="3.9" fill="#4d8ff0"/>
<circle cx="270" cy="748" r="11" fill="#2ca3dc"/>
<path d="M263 747.5L276.5 742L274 754L269.5 750.5L267.5 752.5L267.2 749.2Z" fill="#fff"/><path d="M267.2 749.2L274.5 744L269.5 750.5Z" fill="#c8daea"/>
<circle cx="319" cy="748" r="11" fill="#fff"/><circle cx="319" cy="748" r="9.3" fill="#d8401c"/><circle cx="319" cy="748" r="7.8" fill="#fff"/><circle cx="319" cy="748" r="6.3" fill="#e5460f"/>
<circle cx="368.5" cy="747" r="10.5" fill="#fff"/><path d="M359 758L361 751L365 754Z" fill="#fff"/>
<circle cx="368.5" cy="747" r="9" fill="#2fbe4e"/><circle cx="368.5" cy="747" r="7.2" fill="none" stroke="#fff" stroke-width="1.3"/>
<path d="M365 743.5C365 747 368 751 372 751.5L373.5 750L371.5 748.5L370.5 749.5C369 749 367.5 747.5 367 746L368 745L366.5 743Z" fill="#fff"/>
<rect x="405" y="736" width="24" height="24" fill="#0a78d4"/>
<rect x="410.5" y="741.5" width="13" height="13" rx="3.5" fill="none" stroke="#fff" stroke-width="1.3"/><circle cx="417" cy="748" r="3.2" fill="none" stroke="#fff" stroke-width="1.3"/><circle cx="421" cy="744" r="0.8" fill="#fff"/>
<circle cx="466" cy="748" r="11" fill="#f2582c"/>
<rect x="460" y="742.5" width="12" height="11" rx="1.5" fill="#fff"/><circle cx="466" cy="748.5" r="3.3" fill="#f2582c"/><circle cx="466" cy="748.5" r="2" fill="#fff"/><circle cx="469.5" cy="744.5" r="0.8" fill="#f2582c"/>
<path d="M514.5 736L517 743H512Z" fill="#a8a8a8"/>
<ellipse cx="514.5" cy="750" rx="8.5" ry="8" fill="#1d3a8a"/><ellipse cx="514.5" cy="749" rx="7" ry="5.5" fill="#2a4fb0"/>
<circle cx="510.5" cy="748.5" r="2" fill="#f5e64a"/><circle cx="518.5" cy="748.5" r="2" fill="#f5e64a"/>
<path d="M553 740H559L560.5 741.5H574.5V757H553Z" fill="#f3d36f"/><path d="M553 743H574.5V757H553Z" fill="#f9e08a"/>
<path d="M557 750.5H570V757H567V753.5H560V757H557Z" fill="#29a7e1"/><rect x="553" y="740" width="6" height="1.5" fill="#5aa0d0"/>
<path d="M603 739L611 737V760L603 758Z" fill="#2a5699"/><rect x="610" y="740" width="13" height="17" fill="#fff"/><path d="M612.5 743H621M612.5 745.5H621M612.5 748H621M612.5 750.5H621M612.5 753H621" stroke="#2a5699" stroke-width="1"/>
<rect x="602" y="740.5" width="13" height="15" fill="#2b579a"/><text x="608.5" y="752" font-family="Liberation Sans" font-weight="bold" font-size="10" fill="#fff" text-anchor="middle">W</text>
<g stroke="#fff" stroke-width="1.1" fill="none"><circle cx="1113.5" cy="746.5" r="2.4"/><path d="M1110 754.5C1110 751 1111.5 749.5 1113.5 749.5C1115.5 749.5 1117 751 1117 754.5"/><circle cx="1120.5" cy="742.5" r="2.4"/><path d="M1116.5 748C1117 746.5 1118.5 745.5 1120.5 745.5C1122.5 745.5 1124 747 1124.3 750"/><path d="M1147 751L1153 745L1159 751"/><path d="M1172.5 753.5A11 11 0 0 1 1183.5 742.5M1175.5 753.5A8 8 0 0 1 1183.5 745.5M1178.5 753.5A5 5 0 0 1 1183.5 748.5"/><path d="M1193 746.5H1196L1200 743V754L1196 750.5H1193Z"/><path d="M1202.5 746C1203.5 747.5 1203.5 749 1202.5 750.5M1205 744C1207 746.5 1207 750 1205 752.5M1207.5 742.5C1210 746 1210 751 1207.5 754"/><path d="M1325.5 740.5H1341V752H1335.5L1333 754.5L1330.5 752H1325.5Z"/></g>
<circle cx="1183" cy="753" r="1.2" fill="#fff"/>
<path d="M1227.6 743.2V751.2H1233.4" stroke="#fff" stroke-width="1.2" fill="none"/><circle cx="1232.2" cy="749" r="1.9" stroke="#fff" stroke-width="1.1" fill="none"/><rect x="1231" y="743.8" width="2" height="1.1" fill="#fff"/>
<text x="1280.3" y="743.6" font-family="Liberation Sans" font-size="13" fill="#fff" text-anchor="middle">9:31 AM</text>
<text x="1280.6" y="761.2" font-family="Liberation Sans" font-size="12.6" fill="#fff" text-anchor="middle">6/7/2019</text>
<rect x="1361" y="728" width="1" height="40" fill="#7a7a7a"/>
</svg>
</div></body></html>
